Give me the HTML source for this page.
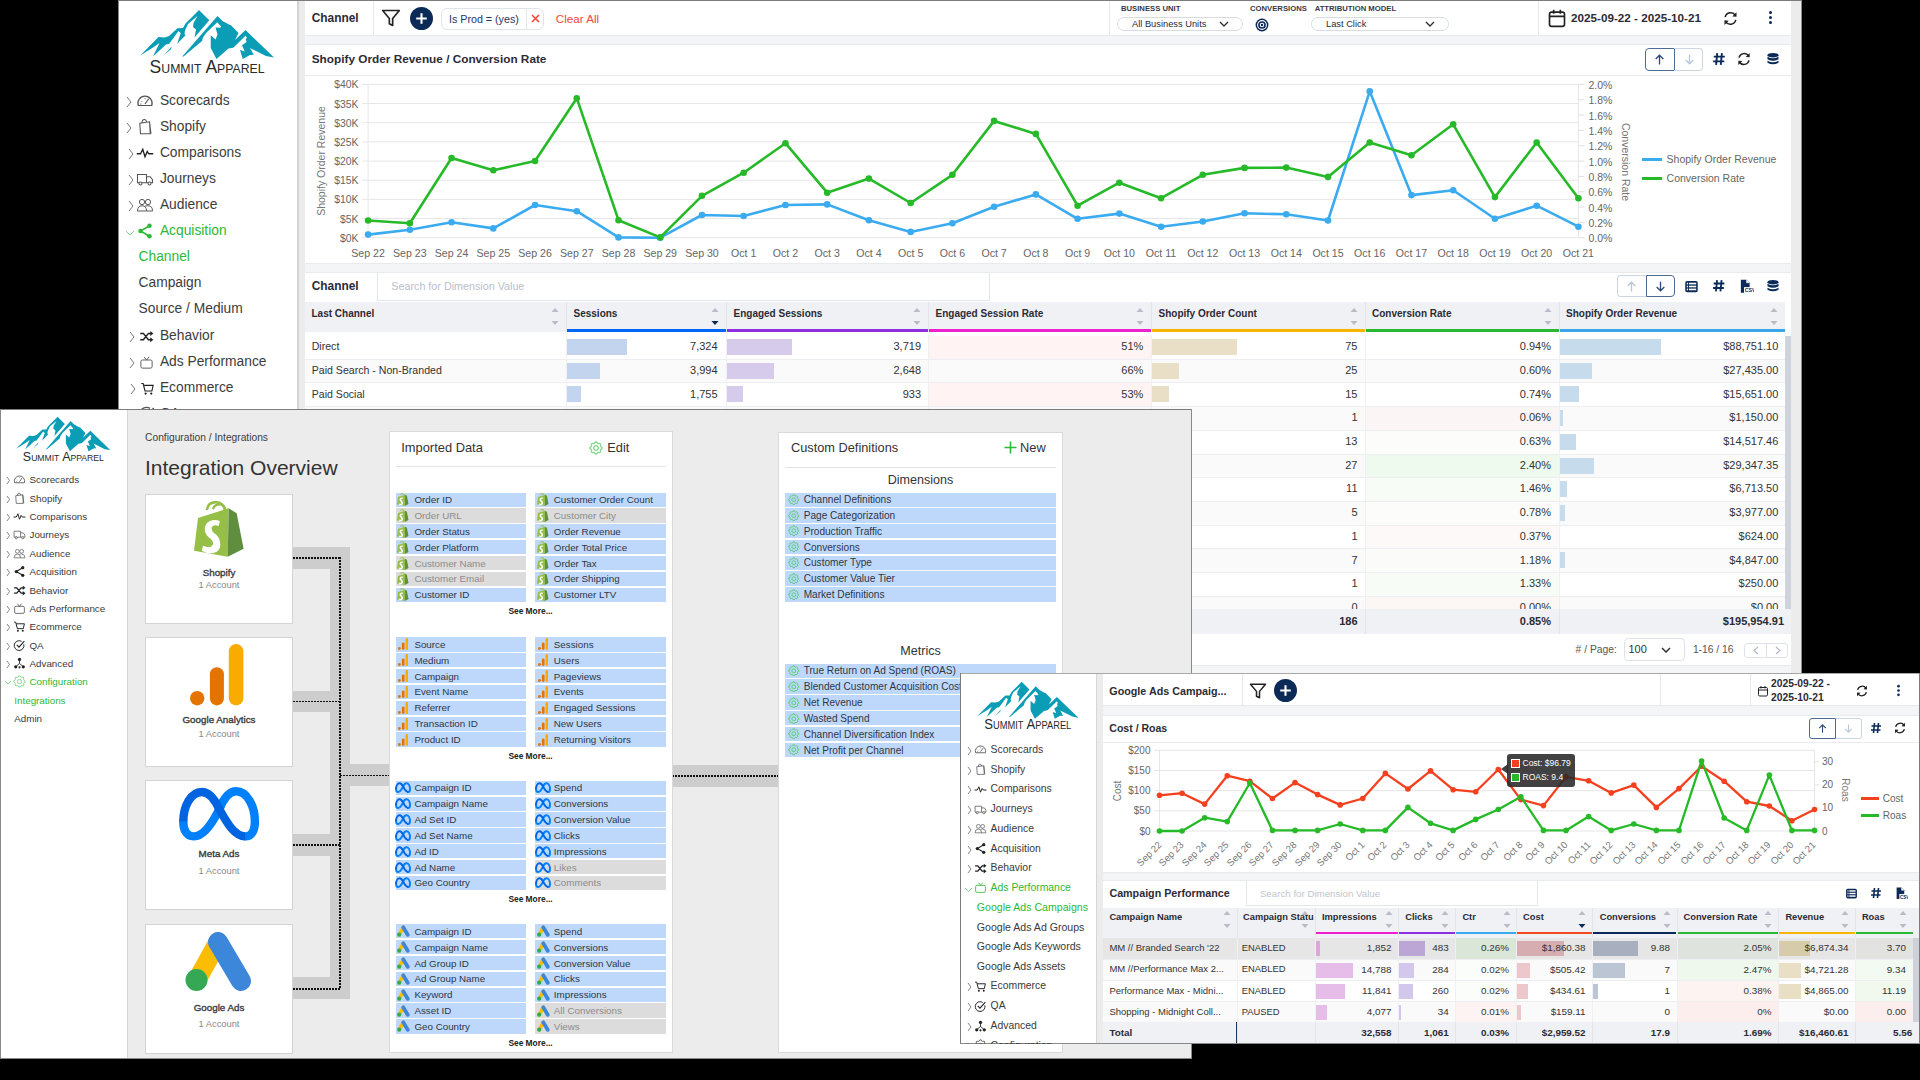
<!DOCTYPE html><html><head><meta charset="utf-8"><style>
html,body{margin:0;padding:0;}
body{width:1920px;height:1080px;background:#000;position:relative;overflow:hidden;font-family:"Liberation Sans", sans-serif;}
body div{position:absolute;}
.layer{left:0;top:0;width:1920px;height:1080px;}
.t{white-space:nowrap;}
</style></head><body>
<div class="layer" style="clip-path:inset(0px 118px 407px 118px)">
<div style="left:118px;top:0px;width:1684px;height:673px;background:#ececec;"></div>
<div style="left:118px;top:0px;width:179px;height:673px;background:#ffffff;"></div>
<div style="left:297px;top:0px;width:2px;height:673px;background:#d4d4d4;"></div>
<div style="left:305px;top:0px;width:1486px;height:673px;background:#f4f5f7;"></div>
<div style="left:305px;top:1px;width:1486px;height:35px;background:#ffffff;border-bottom:1px solid #e8eaee;box-sizing:border-box"></div>
<div style="left:305px;top:44px;width:1486px;height:219.5px;background:#ffffff;border-top:1px solid #e8eaee;border-bottom:1px solid #e8eaee;box-sizing:border-box"></div>
<div style="left:305px;top:271.5px;width:1486px;height:394px;background:#ffffff;border-top:1px solid #e8eaee;border-bottom:1px solid #e8eaee;box-sizing:border-box"></div>
<div style="left:118px;top:0px;width:1684px;height:1px;background:#7c7c7c;"></div>
<div style="left:118px;top:0px;width:1px;height:673px;background:#8a8a8a;"></div>
<div style="left:1801px;top:0px;width:1px;height:673px;background:#8a8a8a;"></div>
<svg style="position:absolute;left:140px;top:9px;" width="134.0" height="64.0" viewBox="10 9 134 64"><polygon points="10.25,55.5 28.5,37 34.5,37.5 39,36 47.5,28.25 53,28 55.5,23.5 69,10 79.25,20.25 64.5,37.5 66,29.5 63,27 63.5,23 67.5,16 58,24 55,30.5 54.5,34 55.5,35.25 47,44 50.75,33.25 48.5,31 39.25,43.75 36,44.5 23,56.5 29.5,43 23,47.5" fill="#0b9db6"/><polygon points="33.25,55.75 42,46.25 40.5,49.5" fill="#0b9db6"/><polygon points="52.25,56.5 70,36 87.5,16 92.5,21 99,24.5 101,25.25 108.5,33 105,40 115.5,30 144,57.5 136,56 120,48 123.75,54.75 120,55 112.75,59 110,50 114.75,51.5 112,45.25 116.5,42 115.75,39 117,38 115.5,35.75 103.25,47.75 98.5,48.5 86.5,59 80.75,48 80.75,35.25 85.5,39.5 87.5,34.5 85.5,27.5 90,27.75 91.25,26.75 87.25,22.25 76,33 73,37.5 72,41 53.5,56.5" fill="#0b9db6"/><text x="19.6" y="72.5" textLength="115" lengthAdjust="spacingAndGlyphs" font-family="Liberation Sans" font-size="18.6" fill="#2a2a2a" style="font-variant:small-caps">Summit Apparel</text></svg>
<svg style="position:absolute;left:125.5px;top:95.5px;" width="7.0" height="12" viewBox="0 0 7.0 12"><path d="M1 1 L5.0 6.0 L1 11" fill="none" stroke="#777" stroke-width="1"/></svg>
<svg style="position:absolute;left:136.4px;top:91.5px;" width="18" height="18" viewBox="0 0 24 24"><path d="M3 18 A9.5 9.5 0 1 1 21 18 Z" fill="none" stroke="#555" stroke-width="1.6"/><path d="M12 16 L17 9" stroke="#555" stroke-width="1.6"/><path d="M7 12 L8 13 M12 8 L12 9.5 M5.5 16 L7 16" stroke="#555" stroke-width="1.2"/></svg>
<div class="t" style="left:159.9px;top:91.50px;height:18px;line-height:18px;font-size:13.8px;color:#3c3c3c;font-weight:400;">Scorecards</div>
<svg style="position:absolute;left:125.5px;top:122.1px;" width="7.0" height="12" viewBox="0 0 7.0 12"><path d="M1 1 L5.0 6.0 L1 11" fill="none" stroke="#777" stroke-width="1"/></svg>
<svg style="position:absolute;left:136.4px;top:118.1px;" width="18" height="18" viewBox="0 0 24 24"><path d="M5 7 L18 5 L19 21 L6 21 Z M8 7 Q8 2 11 2 Q14 2 14 6 M18 5 L20 21" fill="none" stroke="#555" stroke-width="1.4"/></svg>
<div class="t" style="left:159.9px;top:118.10px;height:18px;line-height:18px;font-size:13.8px;color:#3c3c3c;font-weight:400;">Shopify</div>
<svg style="position:absolute;left:127.5px;top:148.10000000000002px;" width="7.0" height="12" viewBox="0 0 7.0 12"><path d="M1 1 L5.0 6.0 L1 11" fill="none" stroke="#777" stroke-width="1"/></svg>
<svg style="position:absolute;left:136.0px;top:144.10000000000002px;" width="18" height="18" viewBox="0 0 24 24"><path d="M1 13 L6 13 L9 7 L12 17 L15 10 L17 13 L23 13" fill="none" stroke="#222" stroke-width="1.8"/></svg>
<div class="t" style="left:159.9px;top:144.10px;height:18px;line-height:18px;font-size:13.8px;color:#3c3c3c;font-weight:400;">Comparisons</div>
<svg style="position:absolute;left:127.5px;top:174.10000000000002px;" width="7.0" height="12" viewBox="0 0 7.0 12"><path d="M1 1 L5.0 6.0 L1 11" fill="none" stroke="#777" stroke-width="1"/></svg>
<svg style="position:absolute;left:136.0px;top:170.10000000000002px;" width="18" height="18" viewBox="0 0 24 24"><path d="M2 6 L14 6 L14 17 L2 17 Z M14 9 L19 9 L22 13 L22 17 L14 17" fill="none" stroke="#555" stroke-width="1.4"/><circle cx="6" cy="18" r="2" fill="#fff" stroke="#555" stroke-width="1.4"/><circle cx="18" cy="18" r="2" fill="#fff" stroke="#555" stroke-width="1.4"/></svg>
<div class="t" style="left:159.9px;top:170.10px;height:18px;line-height:18px;font-size:13.8px;color:#3c3c3c;font-weight:400;">Journeys</div>
<svg style="position:absolute;left:127.5px;top:200.0px;" width="7.0" height="12" viewBox="0 0 7.0 12"><path d="M1 1 L5.0 6.0 L1 11" fill="none" stroke="#777" stroke-width="1"/></svg>
<svg style="position:absolute;left:136.0px;top:196.0px;" width="18" height="18" viewBox="0 0 24 24"><circle cx="8" cy="8" r="3.5" fill="none" stroke="#555" stroke-width="1.3"/><circle cx="16" cy="8" r="3.5" fill="none" stroke="#555" stroke-width="1.3"/><path d="M2 20 Q2 13 8 13 Q14 13 14 20 Z M12 13.5 Q13.5 13 16 13 Q22 13 22 20 L14 20" fill="none" stroke="#555" stroke-width="1.3"/></svg>
<div class="t" style="left:159.9px;top:196.00px;height:18px;line-height:18px;font-size:13.8px;color:#3c3c3c;font-weight:400;">Audience</div>
<svg style="position:absolute;left:124.6px;top:229.7px;" width="10" height="6.0" viewBox="0 0 10 6.0"><path d="M1 1 L5.0 5.0 L9 1" fill="none" stroke="#7fd386" stroke-width="1"/></svg>
<svg style="position:absolute;left:136.2px;top:222.0px;" width="18" height="18" viewBox="0 0 24 24"><path d="M18 5 L6 12 L18 19" fill="none" stroke="#2cb934" stroke-width="2"/><circle cx="18" cy="5" r="3" fill="#2cb934"/><circle cx="6" cy="12" r="3" fill="#2cb934"/><circle cx="18" cy="19" r="3" fill="#2cb934"/></svg>
<div class="t" style="left:159.9px;top:222.00px;height:18px;line-height:18px;font-size:13.8px;color:#2cb934;font-weight:400;">Acquisition</div>
<div class="t" style="left:138.5px;top:248.00px;height:18px;line-height:18px;font-size:13.8px;color:#2cb934;font-weight:400;">Channel</div>
<div class="t" style="left:138.5px;top:274.00px;height:18px;line-height:18px;font-size:13.8px;color:#3c3c3c;font-weight:400;">Campaign</div>
<div class="t" style="left:138.5px;top:299.90px;height:18px;line-height:18px;font-size:13.8px;color:#3c3c3c;font-weight:400;">Source / Medium</div>
<svg style="position:absolute;left:129.0px;top:331.40000000000003px;" width="7.0" height="12" viewBox="0 0 7.0 12"><path d="M1 1 L5.0 6.0 L1 11" fill="none" stroke="#777" stroke-width="1"/></svg>
<svg style="position:absolute;left:139.4px;top:328.90000000000003px;" width="15" height="15" viewBox="0 0 24 24"><path d="M2 7 L7 7 L15 17 L20 17 M2 17 L7 17 L15 7 L20 7" fill="none" stroke="#222" stroke-width="2.4"/><path d="M18 3 L23 7 L18 11 Z M18 13 L23 17 L18 21 Z" fill="#222"/></svg>
<div class="t" style="left:159.9px;top:327.40px;height:18px;line-height:18px;font-size:13.8px;color:#3c3c3c;font-weight:400;">Behavior</div>
<svg style="position:absolute;left:129.0px;top:357.40000000000003px;" width="7.0" height="12" viewBox="0 0 7.0 12"><path d="M1 1 L5.0 6.0 L1 11" fill="none" stroke="#777" stroke-width="1"/></svg>
<svg style="position:absolute;left:139.0px;top:354.90000000000003px;" width="15" height="15" viewBox="0 0 24 24"><rect x="3" y="8" width="18" height="13" rx="2.5" fill="none" stroke="#555" stroke-width="1.5"/><path d="M8 3 L12 8 L16 3" fill="none" stroke="#555" stroke-width="1.5"/></svg>
<div class="t" style="left:159.9px;top:353.40px;height:18px;line-height:18px;font-size:13.8px;color:#3c3c3c;font-weight:400;">Ads Performance</div>
<svg style="position:absolute;left:129.5px;top:383.3px;" width="7.0" height="12" viewBox="0 0 7.0 12"><path d="M1 1 L5.0 6.0 L1 11" fill="none" stroke="#777" stroke-width="1"/></svg>
<svg style="position:absolute;left:139.8px;top:380.8px;" width="15" height="15" viewBox="0 0 24 24"><path d="M2 4 L5 4 L8 16 L19 16 L21 7 L6 7" fill="none" stroke="#222" stroke-width="1.8"/><circle cx="9" cy="20" r="1.8" fill="#222"/><circle cx="18" cy="20" r="1.8" fill="#222"/></svg>
<div class="t" style="left:159.9px;top:379.30px;height:18px;line-height:18px;font-size:13.8px;color:#3c3c3c;font-weight:400;">Ecommerce</div>
<svg style="position:absolute;left:129.0px;top:409.3px;" width="7.0" height="12" viewBox="0 0 7.0 12"><path d="M1 1 L5.0 6.0 L1 11" fill="none" stroke="#777" stroke-width="1"/></svg>
<svg style="position:absolute;left:138.0px;top:405.3px;" width="18" height="18" viewBox="0 0 24 24"><path d="M20 10 A9 9 0 1 1 16 4.5" fill="none" stroke="#555" stroke-width="1.8"/><path d="M7 11 L11 15 L21 4" fill="none" stroke="#555" stroke-width="2"/></svg>
<div class="t" style="left:159.9px;top:405.30px;height:18px;line-height:18px;font-size:13.8px;color:#3c3c3c;font-weight:400;">QA</div>
<div class="t" style="left:311.7px;top:11.40px;height:15px;line-height:15px;font-size:11.9px;color:#2b2b36;font-weight:700;">Channel</div>
<div style="left:373px;top:1px;width:1px;height:35px;background:#e8e8e8;"></div>
<svg style="position:absolute;left:381.0px;top:8.3px;" width="20" height="20" viewBox="0 0 24 24"><path d="M2 3 L22 3 L14 12.5 L14 21 L10 19 L10 12.5 Z" fill="none" stroke="#222" stroke-width="2" stroke-linejoin="round"/></svg>
<svg style="position:absolute;left:409.5px;top:6.699999999999999px;" width="23" height="23" viewBox="0 0 24 24"><circle cx="12" cy="12" r="12" fill="#0b2a57"/><path d="M12 6.5 L12 17.5 M6.5 12 L17.5 12" stroke="#fff" stroke-width="2.2"/></svg>
<div style="left:441px;top:7.5px;width:103px;height:22px;border:1px solid #dfe4ea;border-radius:6px;box-sizing:border-box"></div>
<div style="left:526px;top:7.5px;width:1px;height:22px;background:#e3e6ea;"></div>
<div class="t" style="left:449px;top:11.50px;height:14px;line-height:14px;font-size:10.7px;color:#1d3763;font-weight:400;">Is Prod = (yes)</div>
<svg style="position:absolute;left:531px;top:14px;" width="9" height="9" viewBox="0 0 9 9"><path d="M1 1 L8 8 M8 1 L1 8" stroke="#f04a3c" stroke-width="1.6"/></svg>
<div class="t" style="left:555.8px;top:11.00px;height:15px;line-height:15px;font-size:11.66px;color:#f0483e;font-weight:400;">Clear All</div>
<div style="left:1109px;top:1px;width:1px;height:35px;background:#e8e8e8;"></div>
<div class="t" style="left:1121px;top:3.60px;height:10px;line-height:10px;font-size:7.7px;color:#3a3a44;font-weight:700;">BUSINESS UNIT</div>
<div style="left:1117px;top:17px;width:125.5px;height:14.3px;border:1px solid #d8dce2;border-radius:7px;box-sizing:border-box"></div>
<div class="t" style="left:1132px;top:18.20px;height:12px;line-height:12px;font-size:9.3px;color:#2b2b36;font-weight:400;">All Business Units</div>
<svg style="position:absolute;left:1219.0px;top:21.2px;" width="10" height="6.0" viewBox="0 0 10 6.0"><path d="M1 1 L5.0 5.0 L9 1" fill="none" stroke="#333" stroke-width="1.4"/></svg>
<div class="t" style="left:1250px;top:3.60px;height:10px;line-height:10px;font-size:7.7px;color:#3a3a44;font-weight:700;letter-spacing:0px">CONVERSIONS</div>
<svg style="position:absolute;left:1255.3px;top:18.3px;" width="14" height="14" viewBox="0 0 24 24"><circle cx="12" cy="12" r="11" fill="#0b2a57"/><circle cx="12" cy="12" r="7.5" fill="none" stroke="#fff" stroke-width="1.8"/><circle cx="12" cy="12" r="3" fill="none" stroke="#fff" stroke-width="1.8"/></svg>
<div class="t" style="left:1314.7px;top:3.60px;height:10px;line-height:10px;font-size:7.7px;color:#3a3a44;font-weight:700;">ATTRIBUTION MODEL</div>
<div style="left:1311px;top:17px;width:138px;height:14.3px;border:1px solid #d8dce2;border-radius:7px;box-sizing:border-box"></div>
<div class="t" style="left:1326px;top:18.20px;height:12px;line-height:12px;font-size:9.3px;color:#2b2b36;font-weight:400;">Last Click</div>
<svg style="position:absolute;left:1425.0px;top:21.2px;" width="10" height="6.0" viewBox="0 0 10 6.0"><path d="M1 1 L5.0 5.0 L9 1" fill="none" stroke="#333" stroke-width="1.4"/></svg>
<div style="left:1538px;top:1px;width:1px;height:35px;background:#e8e8e8;"></div>
<svg style="position:absolute;left:1546.8px;top:8.3px;" width="20" height="20" viewBox="0 0 24 24"><rect x="3" y="5" width="18" height="17" rx="2.5" fill="none" stroke="#222" stroke-width="2"/><path d="M3 10 L21 10 M8 2 L8 7 M16 2 L16 7" stroke="#222" stroke-width="2"/></svg>
<div class="t" style="left:1571px;top:10.00px;height:15px;line-height:15px;font-size:11.7px;color:#2b2b36;font-weight:700;">2025-09-22 - 2025-10-21</div>
<svg style="position:absolute;left:1721.5px;top:9.5px;" width="17" height="17" viewBox="0 0 24 24"><path d="M4.5 10 A8 8 0 0 1 19 7.5 M19.5 14 A8 8 0 0 1 5 16.5" fill="none" stroke="#222" stroke-width="2.2"/><path d="M20.5 3 L20.5 9.5 L14.5 9 Z M3.5 21 L3.5 14.5 L9.5 15 Z" fill="#222"/></svg>
<svg style="position:absolute;left:1762.5px;top:10.0px;" width="15" height="15" viewBox="0 0 24 24"><circle cx="12" cy="4" r="2.4" fill="#0b2a57"/><circle cx="12" cy="12" r="2.4" fill="#0b2a57"/><circle cx="12" cy="20" r="2.4" fill="#0b2a57"/></svg>
<div class="t" style="left:311.75px;top:51.50px;height:15px;line-height:15px;font-size:11.8px;color:#2b2b36;font-weight:700;">Shopify Order Revenue / Conversion Rate</div>
<div style="left:1645px;top:48.2px;width:30px;height:22.8px;border:1.5px solid #4c6a92;border-radius:4px 0 0 4px;box-sizing:border-box"></div>
<div style="left:1674px;top:48.2px;width:29.2px;height:22.8px;border:1px solid #ccd6e2;border-left:none;border-radius:0 4px 4px 0;box-sizing:border-box"></div>
<svg style="position:absolute;left:1653.3px;top:53.0px;" width="13" height="13" viewBox="0 0 24 24"><path d="M12 21 L12 4 M5 11 L12 4 L19 11" fill="none" stroke="#274a7a" stroke-width="2.4"/></svg>
<svg style="position:absolute;left:1682.5px;top:53.0px;" width="13" height="13" viewBox="0 0 24 24"><path d="M12 3 L12 20 M5 13 L12 20 L19 13" fill="none" stroke="#b8c6d8" stroke-width="2.4"/></svg>
<svg style="position:absolute;left:1711.6px;top:52.0px;" width="14" height="14" viewBox="0 0 24 24"><path d="M9 2 L7 22 M17 2 L15 22 M3 8 L22 8 M2 16 L21 16" stroke="#0b2a57" stroke-width="3.2"/></svg>
<svg style="position:absolute;left:1736.0px;top:51.0px;" width="16" height="16" viewBox="0 0 24 24"><path d="M4.5 10 A8 8 0 0 1 19 7.5 M19.5 14 A8 8 0 0 1 5 16.5" fill="none" stroke="#222" stroke-width="2.2"/><path d="M20.5 3 L20.5 9.5 L14.5 9 Z M3.5 21 L3.5 14.5 L9.5 15 Z" fill="#222"/></svg>
<svg style="position:absolute;left:1766.2px;top:52.0px;" width="14" height="14" viewBox="0 0 24 24"><ellipse cx="12" cy="5.5" rx="9.5" ry="4" fill="#0b2a57"/><path d="M2.5 8.2 Q12 13.5 21.5 8.2 L21.5 12.5 Q12 17.8 2.5 12.5 Z" fill="#0b2a57"/><path d="M2.5 15 Q12 20.3 21.5 15 L21.5 18.5 Q12 23.8 2.5 18.5 Z" fill="#0b2a57"/></svg>
<div style="left:305px;top:74.5px;width:1486px;height:1px;background:#e9ebef;"></div>
<svg style="position:absolute;left:0;top:0" width="1920" height="300"><line x1="362.1" y1="84.40" x2="1578.4" y2="84.40" stroke="#e6e6e6" stroke-width="1"/><line x1="362.1" y1="103.56" x2="1578.4" y2="103.56" stroke="#e6e6e6" stroke-width="1"/><line x1="362.1" y1="122.72" x2="1578.4" y2="122.72" stroke="#e6e6e6" stroke-width="1"/><line x1="362.1" y1="141.89" x2="1578.4" y2="141.89" stroke="#e6e6e6" stroke-width="1"/><line x1="362.1" y1="161.05" x2="1578.4" y2="161.05" stroke="#e6e6e6" stroke-width="1"/><line x1="362.1" y1="180.21" x2="1578.4" y2="180.21" stroke="#e6e6e6" stroke-width="1"/><line x1="362.1" y1="199.38" x2="1578.4" y2="199.38" stroke="#e6e6e6" stroke-width="1"/><line x1="362.1" y1="218.54" x2="1578.4" y2="218.54" stroke="#e6e6e6" stroke-width="1"/><line x1="362.1" y1="237.70" x2="1578.4" y2="237.70" stroke="#e6e6e6" stroke-width="1"/><line x1="368.1" y1="84.4" x2="368.1" y2="237.7" stroke="#e6e6e6" stroke-width="1"/><line x1="1578.4" y1="84.4" x2="1578.4" y2="237.7" stroke="#e6e6e6" stroke-width="1"/><line x1="1578.4" y1="84.40" x2="1584.4" y2="84.40" stroke="#e0e0e0" stroke-width="1"/><line x1="1578.4" y1="99.73" x2="1584.4" y2="99.73" stroke="#e0e0e0" stroke-width="1"/><line x1="1578.4" y1="115.06" x2="1584.4" y2="115.06" stroke="#e0e0e0" stroke-width="1"/><line x1="1578.4" y1="130.39" x2="1584.4" y2="130.39" stroke="#e0e0e0" stroke-width="1"/><line x1="1578.4" y1="145.72" x2="1584.4" y2="145.72" stroke="#e0e0e0" stroke-width="1"/><line x1="1578.4" y1="161.05" x2="1584.4" y2="161.05" stroke="#e0e0e0" stroke-width="1"/><line x1="1578.4" y1="176.38" x2="1584.4" y2="176.38" stroke="#e0e0e0" stroke-width="1"/><line x1="1578.4" y1="191.71" x2="1584.4" y2="191.71" stroke="#e0e0e0" stroke-width="1"/><line x1="1578.4" y1="207.04" x2="1584.4" y2="207.04" stroke="#e0e0e0" stroke-width="1"/><line x1="1578.4" y1="222.37" x2="1584.4" y2="222.37" stroke="#e0e0e0" stroke-width="1"/><line x1="1578.4" y1="237.70" x2="1584.4" y2="237.70" stroke="#e0e0e0" stroke-width="1"/><polyline points="368.10,234.60 409.83,229.80 451.57,222.20 493.30,228.40 535.04,205.00 576.77,211.20 618.51,237.40 660.24,237.70 701.98,215.00 743.71,216.00 785.44,205.00 827.18,204.40 868.91,220.20 910.65,231.90 952.38,223.30 994.12,206.80 1035.85,194.40 1077.59,218.80 1119.32,213.60 1161.06,226.70 1202.79,221.50 1244.52,213.30 1286.26,214.30 1327.99,220.50 1369.73,91.30 1411.46,195.10 1453.20,190.30 1494.93,218.80 1536.67,205.70 1578.40,226.70" fill="none" stroke="#3babf0" stroke-width="2.6" stroke-linejoin="round"/><circle cx="368.10" cy="234.60" r="3.3" fill="#3babf0"/><circle cx="409.83" cy="229.80" r="3.3" fill="#3babf0"/><circle cx="451.57" cy="222.20" r="3.3" fill="#3babf0"/><circle cx="493.30" cy="228.40" r="3.3" fill="#3babf0"/><circle cx="535.04" cy="205.00" r="3.3" fill="#3babf0"/><circle cx="576.77" cy="211.20" r="3.3" fill="#3babf0"/><circle cx="618.51" cy="237.40" r="3.3" fill="#3babf0"/><circle cx="660.24" cy="237.70" r="3.3" fill="#3babf0"/><circle cx="701.98" cy="215.00" r="3.3" fill="#3babf0"/><circle cx="743.71" cy="216.00" r="3.3" fill="#3babf0"/><circle cx="785.44" cy="205.00" r="3.3" fill="#3babf0"/><circle cx="827.18" cy="204.40" r="3.3" fill="#3babf0"/><circle cx="868.91" cy="220.20" r="3.3" fill="#3babf0"/><circle cx="910.65" cy="231.90" r="3.3" fill="#3babf0"/><circle cx="952.38" cy="223.30" r="3.3" fill="#3babf0"/><circle cx="994.12" cy="206.80" r="3.3" fill="#3babf0"/><circle cx="1035.85" cy="194.40" r="3.3" fill="#3babf0"/><circle cx="1077.59" cy="218.80" r="3.3" fill="#3babf0"/><circle cx="1119.32" cy="213.60" r="3.3" fill="#3babf0"/><circle cx="1161.06" cy="226.70" r="3.3" fill="#3babf0"/><circle cx="1202.79" cy="221.50" r="3.3" fill="#3babf0"/><circle cx="1244.52" cy="213.30" r="3.3" fill="#3babf0"/><circle cx="1286.26" cy="214.30" r="3.3" fill="#3babf0"/><circle cx="1327.99" cy="220.50" r="3.3" fill="#3babf0"/><circle cx="1369.73" cy="91.30" r="3.3" fill="#3babf0"/><circle cx="1411.46" cy="195.10" r="3.3" fill="#3babf0"/><circle cx="1453.20" cy="190.30" r="3.3" fill="#3babf0"/><circle cx="1494.93" cy="218.80" r="3.3" fill="#3babf0"/><circle cx="1536.67" cy="205.70" r="3.3" fill="#3babf0"/><circle cx="1578.40" cy="226.70" r="3.3" fill="#3babf0"/><polyline points="368.10,220.50 409.83,223.30 451.57,158.00 493.30,170.30 535.04,161.00 576.77,98.20 618.51,220.20 660.24,237.40 701.98,195.80 743.71,172.70 785.44,143.20 827.18,192.70 868.91,178.60 910.65,203.00 952.38,174.80 994.12,120.90 1035.85,133.90 1077.59,205.70 1119.32,182.70 1161.06,198.20 1202.79,174.80 1244.52,167.90 1286.26,167.60 1327.99,176.90 1369.73,142.50 1411.46,155.20 1453.20,124.30 1494.93,197.10 1536.67,142.50 1578.40,198.20" fill="none" stroke="#26b928" stroke-width="2.6" stroke-linejoin="round"/><circle cx="368.10" cy="220.50" r="3.3" fill="#26b928"/><circle cx="409.83" cy="223.30" r="3.3" fill="#26b928"/><circle cx="451.57" cy="158.00" r="3.3" fill="#26b928"/><circle cx="493.30" cy="170.30" r="3.3" fill="#26b928"/><circle cx="535.04" cy="161.00" r="3.3" fill="#26b928"/><circle cx="576.77" cy="98.20" r="3.3" fill="#26b928"/><circle cx="618.51" cy="220.20" r="3.3" fill="#26b928"/><circle cx="660.24" cy="237.40" r="3.3" fill="#26b928"/><circle cx="701.98" cy="195.80" r="3.3" fill="#26b928"/><circle cx="743.71" cy="172.70" r="3.3" fill="#26b928"/><circle cx="785.44" cy="143.20" r="3.3" fill="#26b928"/><circle cx="827.18" cy="192.70" r="3.3" fill="#26b928"/><circle cx="868.91" cy="178.60" r="3.3" fill="#26b928"/><circle cx="910.65" cy="203.00" r="3.3" fill="#26b928"/><circle cx="952.38" cy="174.80" r="3.3" fill="#26b928"/><circle cx="994.12" cy="120.90" r="3.3" fill="#26b928"/><circle cx="1035.85" cy="133.90" r="3.3" fill="#26b928"/><circle cx="1077.59" cy="205.70" r="3.3" fill="#26b928"/><circle cx="1119.32" cy="182.70" r="3.3" fill="#26b928"/><circle cx="1161.06" cy="198.20" r="3.3" fill="#26b928"/><circle cx="1202.79" cy="174.80" r="3.3" fill="#26b928"/><circle cx="1244.52" cy="167.90" r="3.3" fill="#26b928"/><circle cx="1286.26" cy="167.60" r="3.3" fill="#26b928"/><circle cx="1327.99" cy="176.90" r="3.3" fill="#26b928"/><circle cx="1369.73" cy="142.50" r="3.3" fill="#26b928"/><circle cx="1411.46" cy="155.20" r="3.3" fill="#26b928"/><circle cx="1453.20" cy="124.30" r="3.3" fill="#26b928"/><circle cx="1494.93" cy="197.10" r="3.3" fill="#26b928"/><circle cx="1536.67" cy="142.50" r="3.3" fill="#26b928"/><circle cx="1578.40" cy="198.20" r="3.3" fill="#26b928"/></svg>
<div class="t" style="left:298.5px;top:78.40px;width:60px;text-align:right;height:14px;line-height:14px;font-size:10.4px;color:#666;font-weight:400;">$40K</div>
<div class="t" style="left:298.5px;top:97.56px;width:60px;text-align:right;height:14px;line-height:14px;font-size:10.4px;color:#666;font-weight:400;">$35K</div>
<div class="t" style="left:298.5px;top:116.72px;width:60px;text-align:right;height:14px;line-height:14px;font-size:10.4px;color:#666;font-weight:400;">$30K</div>
<div class="t" style="left:298.5px;top:135.89px;width:60px;text-align:right;height:14px;line-height:14px;font-size:10.4px;color:#666;font-weight:400;">$25K</div>
<div class="t" style="left:298.5px;top:155.05px;width:60px;text-align:right;height:14px;line-height:14px;font-size:10.4px;color:#666;font-weight:400;">$20K</div>
<div class="t" style="left:298.5px;top:174.21px;width:60px;text-align:right;height:14px;line-height:14px;font-size:10.4px;color:#666;font-weight:400;">$15K</div>
<div class="t" style="left:298.5px;top:193.38px;width:60px;text-align:right;height:14px;line-height:14px;font-size:10.4px;color:#666;font-weight:400;">$10K</div>
<div class="t" style="left:298.5px;top:212.54px;width:60px;text-align:right;height:14px;line-height:14px;font-size:10.4px;color:#666;font-weight:400;">$5K</div>
<div class="t" style="left:298.5px;top:231.70px;width:60px;text-align:right;height:14px;line-height:14px;font-size:10.4px;color:#666;font-weight:400;">$0K</div>
<div class="t" style="left:1588.5px;top:77.90px;height:14px;line-height:14px;font-size:10.5px;color:#666;font-weight:400;">2.0%</div>
<div class="t" style="left:1588.5px;top:93.23px;height:14px;line-height:14px;font-size:10.5px;color:#666;font-weight:400;">1.8%</div>
<div class="t" style="left:1588.5px;top:108.56px;height:14px;line-height:14px;font-size:10.5px;color:#666;font-weight:400;">1.6%</div>
<div class="t" style="left:1588.5px;top:123.89px;height:14px;line-height:14px;font-size:10.5px;color:#666;font-weight:400;">1.4%</div>
<div class="t" style="left:1588.5px;top:139.22px;height:14px;line-height:14px;font-size:10.5px;color:#666;font-weight:400;">1.2%</div>
<div class="t" style="left:1588.5px;top:154.55px;height:14px;line-height:14px;font-size:10.5px;color:#666;font-weight:400;">1.0%</div>
<div class="t" style="left:1588.5px;top:169.88px;height:14px;line-height:14px;font-size:10.5px;color:#666;font-weight:400;">0.8%</div>
<div class="t" style="left:1588.5px;top:185.21px;height:14px;line-height:14px;font-size:10.5px;color:#666;font-weight:400;">0.6%</div>
<div class="t" style="left:1588.5px;top:200.54px;height:14px;line-height:14px;font-size:10.5px;color:#666;font-weight:400;">0.4%</div>
<div class="t" style="left:1588.5px;top:215.87px;height:14px;line-height:14px;font-size:10.5px;color:#666;font-weight:400;">0.2%</div>
<div class="t" style="left:1588.5px;top:231.20px;height:14px;line-height:14px;font-size:10.5px;color:#666;font-weight:400;">0.0%</div>
<div class="t" style="left:338.1px;top:245.80px;width:60px;text-align:center;height:14px;line-height:14px;font-size:10.6px;color:#666;font-weight:400;">Sep 22</div>
<div class="t" style="left:379.8344827586207px;top:245.80px;width:60px;text-align:center;height:14px;line-height:14px;font-size:10.6px;color:#666;font-weight:400;">Sep 23</div>
<div class="t" style="left:421.5689655172414px;top:245.80px;width:60px;text-align:center;height:14px;line-height:14px;font-size:10.6px;color:#666;font-weight:400;">Sep 24</div>
<div class="t" style="left:463.30344827586214px;top:245.80px;width:60px;text-align:center;height:14px;line-height:14px;font-size:10.6px;color:#666;font-weight:400;">Sep 25</div>
<div class="t" style="left:505.03793103448277px;top:245.80px;width:60px;text-align:center;height:14px;line-height:14px;font-size:10.6px;color:#666;font-weight:400;">Sep 26</div>
<div class="t" style="left:546.7724137931035px;top:245.80px;width:60px;text-align:center;height:14px;line-height:14px;font-size:10.6px;color:#666;font-weight:400;">Sep 27</div>
<div class="t" style="left:588.5068965517241px;top:245.80px;width:60px;text-align:center;height:14px;line-height:14px;font-size:10.6px;color:#666;font-weight:400;">Sep 28</div>
<div class="t" style="left:630.2413793103449px;top:245.80px;width:60px;text-align:center;height:14px;line-height:14px;font-size:10.6px;color:#666;font-weight:400;">Sep 29</div>
<div class="t" style="left:671.9758620689656px;top:245.80px;width:60px;text-align:center;height:14px;line-height:14px;font-size:10.6px;color:#666;font-weight:400;">Sep 30</div>
<div class="t" style="left:713.7103448275863px;top:245.80px;width:60px;text-align:center;height:14px;line-height:14px;font-size:10.6px;color:#666;font-weight:400;">Oct 1</div>
<div class="t" style="left:755.4448275862069px;top:245.80px;width:60px;text-align:center;height:14px;line-height:14px;font-size:10.6px;color:#666;font-weight:400;">Oct 2</div>
<div class="t" style="left:797.1793103448276px;top:245.80px;width:60px;text-align:center;height:14px;line-height:14px;font-size:10.6px;color:#666;font-weight:400;">Oct 3</div>
<div class="t" style="left:838.9137931034484px;top:245.80px;width:60px;text-align:center;height:14px;line-height:14px;font-size:10.6px;color:#666;font-weight:400;">Oct 4</div>
<div class="t" style="left:880.648275862069px;top:245.80px;width:60px;text-align:center;height:14px;line-height:14px;font-size:10.6px;color:#666;font-weight:400;">Oct 5</div>
<div class="t" style="left:922.3827586206897px;top:245.80px;width:60px;text-align:center;height:14px;line-height:14px;font-size:10.6px;color:#666;font-weight:400;">Oct 6</div>
<div class="t" style="left:964.1172413793104px;top:245.80px;width:60px;text-align:center;height:14px;line-height:14px;font-size:10.6px;color:#666;font-weight:400;">Oct 7</div>
<div class="t" style="left:1005.8517241379311px;top:245.80px;width:60px;text-align:center;height:14px;line-height:14px;font-size:10.6px;color:#666;font-weight:400;">Oct 8</div>
<div class="t" style="left:1047.5862068965519px;top:245.80px;width:60px;text-align:center;height:14px;line-height:14px;font-size:10.6px;color:#666;font-weight:400;">Oct 9</div>
<div class="t" style="left:1089.3206896551724px;top:245.80px;width:60px;text-align:center;height:14px;line-height:14px;font-size:10.6px;color:#666;font-weight:400;">Oct 10</div>
<div class="t" style="left:1131.0551724137931px;top:245.80px;width:60px;text-align:center;height:14px;line-height:14px;font-size:10.6px;color:#666;font-weight:400;">Oct 11</div>
<div class="t" style="left:1172.7896551724139px;top:245.80px;width:60px;text-align:center;height:14px;line-height:14px;font-size:10.6px;color:#666;font-weight:400;">Oct 12</div>
<div class="t" style="left:1214.5241379310346px;top:245.80px;width:60px;text-align:center;height:14px;line-height:14px;font-size:10.6px;color:#666;font-weight:400;">Oct 13</div>
<div class="t" style="left:1256.2586206896553px;top:245.80px;width:60px;text-align:center;height:14px;line-height:14px;font-size:10.6px;color:#666;font-weight:400;">Oct 14</div>
<div class="t" style="left:1297.993103448276px;top:245.80px;width:60px;text-align:center;height:14px;line-height:14px;font-size:10.6px;color:#666;font-weight:400;">Oct 15</div>
<div class="t" style="left:1339.7275862068968px;top:245.80px;width:60px;text-align:center;height:14px;line-height:14px;font-size:10.6px;color:#666;font-weight:400;">Oct 16</div>
<div class="t" style="left:1381.4620689655176px;top:245.80px;width:60px;text-align:center;height:14px;line-height:14px;font-size:10.6px;color:#666;font-weight:400;">Oct 17</div>
<div class="t" style="left:1423.1965517241379px;top:245.80px;width:60px;text-align:center;height:14px;line-height:14px;font-size:10.6px;color:#666;font-weight:400;">Oct 18</div>
<div class="t" style="left:1464.9310344827586px;top:245.80px;width:60px;text-align:center;height:14px;line-height:14px;font-size:10.6px;color:#666;font-weight:400;">Oct 19</div>
<div class="t" style="left:1506.6655172413793px;top:245.80px;width:60px;text-align:center;height:14px;line-height:14px;font-size:10.6px;color:#666;font-weight:400;">Oct 20</div>
<div class="t" style="left:1548.4px;top:245.80px;width:60px;text-align:center;height:14px;line-height:14px;font-size:10.6px;color:#666;font-weight:400;">Oct 21</div>
<div class="t" style="left:321px;top:161px;font-size:10.5px;color:#777;transform:translate(-50%,-50%) rotate(-90deg);line-height:12px">Shopify Order Revenue</div>
<div class="t" style="left:1625.6px;top:162px;font-size:10.5px;color:#777;transform:translate(-50%,-50%) rotate(90deg);line-height:12px">Conversion Rate</div>
<div style="left:1642px;top:157.7px;width:20px;height:3px;background:#3babf0;"></div>
<div class="t" style="left:1666.6px;top:152.20px;height:14px;line-height:14px;font-size:10.5px;color:#666;font-weight:400;">Shopify Order Revenue</div>
<div style="left:1642px;top:176.8px;width:20px;height:3px;background:#26b928;"></div>
<div class="t" style="left:1666.6px;top:171.30px;height:14px;line-height:14px;font-size:10.5px;color:#666;font-weight:400;">Conversion Rate</div>
<div class="t" style="left:311.7px;top:278.50px;height:15px;line-height:15px;font-size:11.9px;color:#2b2b36;font-weight:700;">Channel</div>
<div style="left:376.7px;top:272.5px;width:613.3px;height:28px;border:1px solid #e2e5ea;border-top:none;box-sizing:border-box;background:#fff"></div>
<div class="t" style="left:391.3px;top:279.00px;height:14px;line-height:14px;font-size:10.75px;color:#b9c0cc;font-weight:400;">Search for Dimension Value</div>
<div style="left:1617px;top:275.3px;width:29px;height:22.2px;border:1px solid #ccd6e2;border-right:none;border-radius:4px 0 0 4px;box-sizing:border-box"></div>
<div style="left:1645.5px;top:275.3px;width:29.5px;height:22.2px;border:1.5px solid #4c6a92;border-radius:0 4px 4px 0;box-sizing:border-box"></div>
<svg style="position:absolute;left:1624.5px;top:280.0px;" width="13" height="13" viewBox="0 0 24 24"><path d="M12 21 L12 4 M5 11 L12 4 L19 11" fill="none" stroke="#b8c6d8" stroke-width="2.4"/></svg>
<svg style="position:absolute;left:1653.5px;top:280.0px;" width="13" height="13" viewBox="0 0 24 24"><path d="M12 3 L12 20 M5 13 L12 20 L19 13" fill="none" stroke="#274a7a" stroke-width="2.4"/></svg>
<svg style="position:absolute;left:1683.5px;top:278.5px;" width="15" height="15" viewBox="0 0 24 24"><rect x="2" y="3" width="20" height="18" rx="3" fill="#0b2a57"/><rect x="8" y="6" width="11.5" height="2.6" fill="#fff"/><rect x="8" y="10.7" width="11.5" height="2.6" fill="#fff"/><rect x="8" y="15.4" width="11.5" height="2.6" fill="#fff"/><rect x="4.5" y="6" width="2" height="2.6" fill="#fff"/><rect x="4.5" y="10.7" width="2" height="2.6" fill="#fff"/><rect x="4.5" y="15.4" width="2" height="2.6" fill="#fff"/></svg>
<svg style="position:absolute;left:1711.85px;top:279.25px;" width="13.5" height="13.5" viewBox="0 0 24 24"><path d="M9 2 L7 22 M17 2 L15 22 M3 8 L22 8 M2 16 L21 16" stroke="#0b2a57" stroke-width="3.2"/></svg>
<svg style="position:absolute;left:1738.5px;top:278.5px;" width="15" height="15" viewBox="0 0 24 24"><path d="M3 1 L12 1 L17 6 L17 22 L3 22 Z" fill="#0b2a57"/><path d="M12 1 L12 6 L17 6" fill="#fff" stroke="#fff" stroke-width="0.8"/><rect x="8" y="13" width="16" height="10" fill="#fff"/><text x="9" y="21.5" font-size="8.5" font-family="Liberation Sans" font-weight="700" fill="#0b2a57">CSV</text></svg>
<svg style="position:absolute;left:1766.3px;top:279.0px;" width="14" height="14" viewBox="0 0 24 24"><ellipse cx="12" cy="5.5" rx="9.5" ry="4" fill="#0b2a57"/><path d="M2.5 8.2 Q12 13.5 21.5 8.2 L21.5 12.5 Q12 17.8 2.5 12.5 Z" fill="#0b2a57"/><path d="M2.5 15 Q12 20.3 21.5 15 L21.5 18.5 Q12 23.8 2.5 18.5 Z" fill="#0b2a57"/></svg>
<div style="left:305px;top:302px;width:1480px;height:30px;background:#f0f1f4;"></div>
<div class="t" style="left:311.5px;top:306.50px;height:13px;line-height:13px;font-size:10px;color:#2b2b36;font-weight:700;">Last Channel</div>
<svg style="position:absolute;left:550.2px;top:305.5px;" width="10" height="21" viewBox="0 0 10 21"><path d="M1.5 6 L5 2 L8.5 6 Z" fill="#b8bcc6"/><path d="M1.5 15 L5 19 L8.5 15 Z" fill="#b8bcc6"/></svg>
<div style="left:566px;top:302px;width:1px;height:30px;background:#e3e5ea;"></div>
<div class="t" style="left:573.5px;top:306.50px;height:13px;line-height:13px;font-size:10px;color:#2b2b36;font-weight:700;">Sessions</div>
<svg style="position:absolute;left:710.2px;top:305.5px;" width="10" height="21" viewBox="0 0 10 21"><path d="M1.5 6 L5 2 L8.5 6 Z" fill="#b8bcc6"/><path d="M1.5 15 L5 19 L8.5 15 Z" fill="#0b2a57"/></svg>
<div style="left:567px;top:329px;width:159px;height:3px;background:#0066f5;"></div>
<div style="left:726px;top:302px;width:1px;height:30px;background:#e3e5ea;"></div>
<div class="t" style="left:733.5px;top:306.50px;height:13px;line-height:13px;font-size:10px;color:#2b2b36;font-weight:700;">Engaged Sessions</div>
<svg style="position:absolute;left:912.2px;top:305.5px;" width="10" height="21" viewBox="0 0 10 21"><path d="M1.5 6 L5 2 L8.5 6 Z" fill="#b8bcc6"/><path d="M1.5 15 L5 19 L8.5 15 Z" fill="#b8bcc6"/></svg>
<div style="left:727px;top:329px;width:201px;height:3px;background:#8e2ee0;"></div>
<div style="left:928px;top:302px;width:1px;height:30px;background:#e3e5ea;"></div>
<div class="t" style="left:935.5px;top:306.50px;height:13px;line-height:13px;font-size:10px;color:#2b2b36;font-weight:700;">Engaged Session Rate</div>
<svg style="position:absolute;left:1135.2px;top:305.5px;" width="10" height="21" viewBox="0 0 10 21"><path d="M1.5 6 L5 2 L8.5 6 Z" fill="#b8bcc6"/><path d="M1.5 15 L5 19 L8.5 15 Z" fill="#b8bcc6"/></svg>
<div style="left:929px;top:329px;width:222px;height:3px;background:#ec20cf;"></div>
<div style="left:1151px;top:302px;width:1px;height:30px;background:#e3e5ea;"></div>
<div class="t" style="left:1158.5px;top:306.50px;height:13px;line-height:13px;font-size:10px;color:#2b2b36;font-weight:700;">Shopify Order Count</div>
<svg style="position:absolute;left:1348.7px;top:305.5px;" width="10" height="21" viewBox="0 0 10 21"><path d="M1.5 6 L5 2 L8.5 6 Z" fill="#b8bcc6"/><path d="M1.5 15 L5 19 L8.5 15 Z" fill="#b8bcc6"/></svg>
<div style="left:1152px;top:329px;width:212.5px;height:3px;background:#f7b500;"></div>
<div style="left:1364.5px;top:302px;width:1px;height:30px;background:#e3e5ea;"></div>
<div class="t" style="left:1372.0px;top:306.50px;height:13px;line-height:13px;font-size:10px;color:#2b2b36;font-weight:700;">Conversion Rate</div>
<svg style="position:absolute;left:1542.7px;top:305.5px;" width="10" height="21" viewBox="0 0 10 21"><path d="M1.5 6 L5 2 L8.5 6 Z" fill="#b8bcc6"/><path d="M1.5 15 L5 19 L8.5 15 Z" fill="#b8bcc6"/></svg>
<div style="left:1365.5px;top:329px;width:193.0px;height:3px;background:#28b832;"></div>
<div style="left:1558.5px;top:302px;width:1px;height:30px;background:#e3e5ea;"></div>
<div class="t" style="left:1566.0px;top:306.50px;height:13px;line-height:13px;font-size:10px;color:#2b2b36;font-weight:700;">Shopify Order Revenue</div>
<svg style="position:absolute;left:1769.2px;top:305.5px;" width="10" height="21" viewBox="0 0 10 21"><path d="M1.5 6 L5 2 L8.5 6 Z" fill="#b8bcc6"/><path d="M1.5 15 L5 19 L8.5 15 Z" fill="#b8bcc6"/></svg>
<div style="left:1559.5px;top:329px;width:225.5px;height:3px;background:#3aa8e8;"></div>
<div style="left:305px;top:332px;width:1480px;height:4px;background:#ffffff;"></div>
<div style="left:305px;top:336.0px;width:1480px;height:23.72px;background:#ffffff;"></div>
<div style="left:305px;top:358.72px;width:1480px;height:1px;background:#eceef1;"></div>
<div style="left:566px;top:336.0px;width:1px;height:23.72px;background:#eef0f3;"></div>
<div style="left:726px;top:336.0px;width:1px;height:23.72px;background:#eef0f3;"></div>
<div style="left:928px;top:336.0px;width:1px;height:23.72px;background:#eef0f3;"></div>
<div style="left:1151px;top:336.0px;width:1px;height:23.72px;background:#eef0f3;"></div>
<div style="left:1364.5px;top:336.0px;width:1px;height:23.72px;background:#eef0f3;"></div>
<div style="left:1558.5px;top:336.0px;width:1px;height:23.72px;background:#eef0f3;"></div>
<div style="left:929px;top:336.0px;width:222px;height:22.72px;background:#fff3f3;"></div>
<div style="left:1365.5px;top:336.0px;width:193px;height:22.72px;background:#ffffff;"></div>
<div style="left:567px;top:339.0px;width:60.3px;height:16px;background:#c3d4ee;"></div>
<div style="left:727px;top:339.0px;width:65px;height:16px;background:#d7cbec;"></div>
<div style="left:1152px;top:339.0px;width:85px;height:16px;background:#e8dfc6;"></div>
<div style="left:1559.5px;top:339.0px;width:101px;height:16px;background:#c6dbec;"></div>
<div class="t" style="left:311.7px;top:339.06px;height:14px;line-height:14px;font-size:10.6px;color:#333;font-weight:400;">Direct</div>
<div class="t" style="left:617.6px;top:339.06px;width:100px;text-align:right;height:14px;line-height:14px;font-size:11px;color:#333;font-weight:400;">7,324</div>
<div class="t" style="left:821px;top:339.06px;width:100px;text-align:right;height:14px;line-height:14px;font-size:11px;color:#333;font-weight:400;">3,719</div>
<div class="t" style="left:1043.3px;top:339.06px;width:100px;text-align:right;height:14px;line-height:14px;font-size:11px;color:#333;font-weight:400;">51%</div>
<div class="t" style="left:1257.5px;top:339.06px;width:100px;text-align:right;height:14px;line-height:14px;font-size:11px;color:#333;font-weight:400;">75</div>
<div class="t" style="left:1451px;top:339.06px;width:100px;text-align:right;height:14px;line-height:14px;font-size:11px;color:#333;font-weight:400;">0.94%</div>
<div class="t" style="left:1658.3px;top:339.06px;width:120px;text-align:right;height:14px;line-height:14px;font-size:11px;color:#333;font-weight:400;">$88,751.10</div>
<div style="left:305px;top:359.72px;width:1480px;height:23.72px;background:#fafafa;"></div>
<div style="left:305px;top:382.44000000000005px;width:1480px;height:1px;background:#eceef1;"></div>
<div style="left:566px;top:359.72px;width:1px;height:23.72px;background:#eef0f3;"></div>
<div style="left:726px;top:359.72px;width:1px;height:23.72px;background:#eef0f3;"></div>
<div style="left:928px;top:359.72px;width:1px;height:23.72px;background:#eef0f3;"></div>
<div style="left:1151px;top:359.72px;width:1px;height:23.72px;background:#eef0f3;"></div>
<div style="left:1364.5px;top:359.72px;width:1px;height:23.72px;background:#eef0f3;"></div>
<div style="left:1558.5px;top:359.72px;width:1px;height:23.72px;background:#eef0f3;"></div>
<div style="left:1365.5px;top:359.72px;width:193px;height:22.72px;background:#fafafa;"></div>
<div style="left:567px;top:362.72px;width:32.6px;height:16px;background:#c3d4ee;"></div>
<div style="left:727px;top:362.72px;width:46.7px;height:16px;background:#d7cbec;"></div>
<div style="left:1152px;top:362.72px;width:27px;height:16px;background:#e8dfc6;"></div>
<div style="left:1559.5px;top:362.72px;width:32px;height:16px;background:#c6dbec;"></div>
<div class="t" style="left:311.7px;top:362.78px;height:14px;line-height:14px;font-size:10.6px;color:#333;font-weight:400;">Paid Search - Non-Branded</div>
<div class="t" style="left:617.6px;top:362.78px;width:100px;text-align:right;height:14px;line-height:14px;font-size:11px;color:#333;font-weight:400;">3,994</div>
<div class="t" style="left:821px;top:362.78px;width:100px;text-align:right;height:14px;line-height:14px;font-size:11px;color:#333;font-weight:400;">2,648</div>
<div class="t" style="left:1043.3px;top:362.78px;width:100px;text-align:right;height:14px;line-height:14px;font-size:11px;color:#333;font-weight:400;">66%</div>
<div class="t" style="left:1257.5px;top:362.78px;width:100px;text-align:right;height:14px;line-height:14px;font-size:11px;color:#333;font-weight:400;">25</div>
<div class="t" style="left:1451px;top:362.78px;width:100px;text-align:right;height:14px;line-height:14px;font-size:11px;color:#333;font-weight:400;">0.60%</div>
<div class="t" style="left:1658.3px;top:362.78px;width:120px;text-align:right;height:14px;line-height:14px;font-size:11px;color:#333;font-weight:400;">$27,435.00</div>
<div style="left:305px;top:383.44px;width:1480px;height:23.72px;background:#ffffff;"></div>
<div style="left:305px;top:406.15999999999997px;width:1480px;height:1px;background:#eceef1;"></div>
<div style="left:566px;top:383.44px;width:1px;height:23.72px;background:#eef0f3;"></div>
<div style="left:726px;top:383.44px;width:1px;height:23.72px;background:#eef0f3;"></div>
<div style="left:928px;top:383.44px;width:1px;height:23.72px;background:#eef0f3;"></div>
<div style="left:1151px;top:383.44px;width:1px;height:23.72px;background:#eef0f3;"></div>
<div style="left:1364.5px;top:383.44px;width:1px;height:23.72px;background:#eef0f3;"></div>
<div style="left:1558.5px;top:383.44px;width:1px;height:23.72px;background:#eef0f3;"></div>
<div style="left:929px;top:383.44px;width:222px;height:22.72px;background:#fff3f3;"></div>
<div style="left:1365.5px;top:383.44px;width:193px;height:22.72px;background:#ffffff;"></div>
<div style="left:567px;top:386.44px;width:14.3px;height:16px;background:#c3d4ee;"></div>
<div style="left:727px;top:386.44px;width:16px;height:16px;background:#d7cbec;"></div>
<div style="left:1152px;top:386.44px;width:16.6px;height:16px;background:#e8dfc6;"></div>
<div style="left:1559.5px;top:386.44px;width:19px;height:16px;background:#c6dbec;"></div>
<div class="t" style="left:311.7px;top:386.50px;height:14px;line-height:14px;font-size:10.6px;color:#333;font-weight:400;">Paid Social</div>
<div class="t" style="left:617.6px;top:386.50px;width:100px;text-align:right;height:14px;line-height:14px;font-size:11px;color:#333;font-weight:400;">1,755</div>
<div class="t" style="left:821px;top:386.50px;width:100px;text-align:right;height:14px;line-height:14px;font-size:11px;color:#333;font-weight:400;">933</div>
<div class="t" style="left:1043.3px;top:386.50px;width:100px;text-align:right;height:14px;line-height:14px;font-size:11px;color:#333;font-weight:400;">53%</div>
<div class="t" style="left:1257.5px;top:386.50px;width:100px;text-align:right;height:14px;line-height:14px;font-size:11px;color:#333;font-weight:400;">15</div>
<div class="t" style="left:1451px;top:386.50px;width:100px;text-align:right;height:14px;line-height:14px;font-size:11px;color:#333;font-weight:400;">0.74%</div>
<div class="t" style="left:1658.3px;top:386.50px;width:120px;text-align:right;height:14px;line-height:14px;font-size:11px;color:#333;font-weight:400;">$15,651.00</div>
<div style="left:305px;top:407.15999999999997px;width:1480px;height:23.72px;background:#fafafa;"></div>
<div style="left:305px;top:429.88px;width:1480px;height:1px;background:#eceef1;"></div>
<div style="left:566px;top:407.15999999999997px;width:1px;height:23.72px;background:#eef0f3;"></div>
<div style="left:726px;top:407.15999999999997px;width:1px;height:23.72px;background:#eef0f3;"></div>
<div style="left:928px;top:407.15999999999997px;width:1px;height:23.72px;background:#eef0f3;"></div>
<div style="left:1151px;top:407.15999999999997px;width:1px;height:23.72px;background:#eef0f3;"></div>
<div style="left:1364.5px;top:407.15999999999997px;width:1px;height:23.72px;background:#eef0f3;"></div>
<div style="left:1558.5px;top:407.15999999999997px;width:1px;height:23.72px;background:#eef0f3;"></div>
<div style="left:1365.5px;top:407.15999999999997px;width:193px;height:22.72px;background:#fbf6f5;"></div>
<div style="left:1152px;top:410.15999999999997px;width:1px;height:16px;background:#e8dfc6;"></div>
<div style="left:1559.5px;top:410.15999999999997px;width:3px;height:16px;background:#c6dbec;"></div>
<div class="t" style="left:1257.5px;top:410.22px;width:100px;text-align:right;height:14px;line-height:14px;font-size:11px;color:#333;font-weight:400;">1</div>
<div class="t" style="left:1451px;top:410.22px;width:100px;text-align:right;height:14px;line-height:14px;font-size:11px;color:#333;font-weight:400;">0.06%</div>
<div class="t" style="left:1658.3px;top:410.22px;width:120px;text-align:right;height:14px;line-height:14px;font-size:11px;color:#333;font-weight:400;">$1,150.00</div>
<div style="left:305px;top:430.88px;width:1480px;height:23.72px;background:#ffffff;"></div>
<div style="left:305px;top:453.6px;width:1480px;height:1px;background:#eceef1;"></div>
<div style="left:566px;top:430.88px;width:1px;height:23.72px;background:#eef0f3;"></div>
<div style="left:726px;top:430.88px;width:1px;height:23.72px;background:#eef0f3;"></div>
<div style="left:928px;top:430.88px;width:1px;height:23.72px;background:#eef0f3;"></div>
<div style="left:1151px;top:430.88px;width:1px;height:23.72px;background:#eef0f3;"></div>
<div style="left:1364.5px;top:430.88px;width:1px;height:23.72px;background:#eef0f3;"></div>
<div style="left:1558.5px;top:430.88px;width:1px;height:23.72px;background:#eef0f3;"></div>
<div style="left:1365.5px;top:430.88px;width:193px;height:22.72px;background:#fcfcfa;"></div>
<div style="left:1152px;top:433.88px;width:14.7px;height:16px;background:#e8dfc6;"></div>
<div style="left:1559.5px;top:433.88px;width:16px;height:16px;background:#c6dbec;"></div>
<div class="t" style="left:1257.5px;top:433.94px;width:100px;text-align:right;height:14px;line-height:14px;font-size:11px;color:#333;font-weight:400;">13</div>
<div class="t" style="left:1451px;top:433.94px;width:100px;text-align:right;height:14px;line-height:14px;font-size:11px;color:#333;font-weight:400;">0.63%</div>
<div class="t" style="left:1658.3px;top:433.94px;width:120px;text-align:right;height:14px;line-height:14px;font-size:11px;color:#333;font-weight:400;">$14,517.46</div>
<div style="left:305px;top:454.6px;width:1480px;height:23.72px;background:#fafafa;"></div>
<div style="left:305px;top:477.32000000000005px;width:1480px;height:1px;background:#eceef1;"></div>
<div style="left:566px;top:454.6px;width:1px;height:23.72px;background:#eef0f3;"></div>
<div style="left:726px;top:454.6px;width:1px;height:23.72px;background:#eef0f3;"></div>
<div style="left:928px;top:454.6px;width:1px;height:23.72px;background:#eef0f3;"></div>
<div style="left:1151px;top:454.6px;width:1px;height:23.72px;background:#eef0f3;"></div>
<div style="left:1364.5px;top:454.6px;width:1px;height:23.72px;background:#eef0f3;"></div>
<div style="left:1558.5px;top:454.6px;width:1px;height:23.72px;background:#eef0f3;"></div>
<div style="left:1365.5px;top:454.6px;width:193px;height:22.72px;background:#effaef;"></div>
<div style="left:1152px;top:457.6px;width:30.6px;height:16px;background:#e8dfc6;"></div>
<div style="left:1559.5px;top:457.6px;width:34.5px;height:16px;background:#c6dbec;"></div>
<div class="t" style="left:1257.5px;top:457.66px;width:100px;text-align:right;height:14px;line-height:14px;font-size:11px;color:#333;font-weight:400;">27</div>
<div class="t" style="left:1451px;top:457.66px;width:100px;text-align:right;height:14px;line-height:14px;font-size:11px;color:#333;font-weight:400;">2.40%</div>
<div class="t" style="left:1658.3px;top:457.66px;width:120px;text-align:right;height:14px;line-height:14px;font-size:11px;color:#333;font-weight:400;">$29,347.35</div>
<div style="left:305px;top:478.32px;width:1480px;height:23.72px;background:#ffffff;"></div>
<div style="left:305px;top:501.03999999999996px;width:1480px;height:1px;background:#eceef1;"></div>
<div style="left:566px;top:478.32px;width:1px;height:23.72px;background:#eef0f3;"></div>
<div style="left:726px;top:478.32px;width:1px;height:23.72px;background:#eef0f3;"></div>
<div style="left:928px;top:478.32px;width:1px;height:23.72px;background:#eef0f3;"></div>
<div style="left:1151px;top:478.32px;width:1px;height:23.72px;background:#eef0f3;"></div>
<div style="left:1364.5px;top:478.32px;width:1px;height:23.72px;background:#eef0f3;"></div>
<div style="left:1558.5px;top:478.32px;width:1px;height:23.72px;background:#eef0f3;"></div>
<div style="left:1365.5px;top:478.32px;width:193px;height:22.72px;background:#f8fcf7;"></div>
<div style="left:1152px;top:481.32px;width:12.5px;height:16px;background:#e8dfc6;"></div>
<div style="left:1559.5px;top:481.32px;width:7.5px;height:16px;background:#c6dbec;"></div>
<div class="t" style="left:1257.5px;top:481.38px;width:100px;text-align:right;height:14px;line-height:14px;font-size:11px;color:#333;font-weight:400;">11</div>
<div class="t" style="left:1451px;top:481.38px;width:100px;text-align:right;height:14px;line-height:14px;font-size:11px;color:#333;font-weight:400;">1.46%</div>
<div class="t" style="left:1658.3px;top:481.38px;width:120px;text-align:right;height:14px;line-height:14px;font-size:11px;color:#333;font-weight:400;">$6,713.50</div>
<div style="left:305px;top:502.03999999999996px;width:1480px;height:23.72px;background:#fafafa;"></div>
<div style="left:305px;top:524.76px;width:1480px;height:1px;background:#eceef1;"></div>
<div style="left:566px;top:502.03999999999996px;width:1px;height:23.72px;background:#eef0f3;"></div>
<div style="left:726px;top:502.03999999999996px;width:1px;height:23.72px;background:#eef0f3;"></div>
<div style="left:928px;top:502.03999999999996px;width:1px;height:23.72px;background:#eef0f3;"></div>
<div style="left:1151px;top:502.03999999999996px;width:1px;height:23.72px;background:#eef0f3;"></div>
<div style="left:1364.5px;top:502.03999999999996px;width:1px;height:23.72px;background:#eef0f3;"></div>
<div style="left:1558.5px;top:502.03999999999996px;width:1px;height:23.72px;background:#eef0f3;"></div>
<div style="left:1365.5px;top:502.03999999999996px;width:193px;height:22.72px;background:#fcfcfb;"></div>
<div style="left:1152px;top:505.03999999999996px;width:5.7px;height:16px;background:#e8dfc6;"></div>
<div style="left:1559.5px;top:505.03999999999996px;width:5px;height:16px;background:#c6dbec;"></div>
<div class="t" style="left:1257.5px;top:505.10px;width:100px;text-align:right;height:14px;line-height:14px;font-size:11px;color:#333;font-weight:400;">5</div>
<div class="t" style="left:1451px;top:505.10px;width:100px;text-align:right;height:14px;line-height:14px;font-size:11px;color:#333;font-weight:400;">0.78%</div>
<div class="t" style="left:1658.3px;top:505.10px;width:120px;text-align:right;height:14px;line-height:14px;font-size:11px;color:#333;font-weight:400;">$3,977.00</div>
<div style="left:305px;top:525.76px;width:1480px;height:23.72px;background:#ffffff;"></div>
<div style="left:305px;top:548.48px;width:1480px;height:1px;background:#eceef1;"></div>
<div style="left:566px;top:525.76px;width:1px;height:23.72px;background:#eef0f3;"></div>
<div style="left:726px;top:525.76px;width:1px;height:23.72px;background:#eef0f3;"></div>
<div style="left:928px;top:525.76px;width:1px;height:23.72px;background:#eef0f3;"></div>
<div style="left:1151px;top:525.76px;width:1px;height:23.72px;background:#eef0f3;"></div>
<div style="left:1364.5px;top:525.76px;width:1px;height:23.72px;background:#eef0f3;"></div>
<div style="left:1558.5px;top:525.76px;width:1px;height:23.72px;background:#eef0f3;"></div>
<div style="left:1365.5px;top:525.76px;width:193px;height:22.72px;background:#fdf9f9;"></div>
<div style="left:1152px;top:528.76px;width:1px;height:16px;background:#e8dfc6;"></div>
<div class="t" style="left:1257.5px;top:528.82px;width:100px;text-align:right;height:14px;line-height:14px;font-size:11px;color:#333;font-weight:400;">1</div>
<div class="t" style="left:1451px;top:528.82px;width:100px;text-align:right;height:14px;line-height:14px;font-size:11px;color:#333;font-weight:400;">0.37%</div>
<div class="t" style="left:1658.3px;top:528.82px;width:120px;text-align:right;height:14px;line-height:14px;font-size:11px;color:#333;font-weight:400;">$624.00</div>
<div style="left:305px;top:549.48px;width:1480px;height:23.72px;background:#fafafa;"></div>
<div style="left:305px;top:572.2px;width:1480px;height:1px;background:#eceef1;"></div>
<div style="left:566px;top:549.48px;width:1px;height:23.72px;background:#eef0f3;"></div>
<div style="left:726px;top:549.48px;width:1px;height:23.72px;background:#eef0f3;"></div>
<div style="left:928px;top:549.48px;width:1px;height:23.72px;background:#eef0f3;"></div>
<div style="left:1151px;top:549.48px;width:1px;height:23.72px;background:#eef0f3;"></div>
<div style="left:1364.5px;top:549.48px;width:1px;height:23.72px;background:#eef0f3;"></div>
<div style="left:1558.5px;top:549.48px;width:1px;height:23.72px;background:#eef0f3;"></div>
<div style="left:1365.5px;top:549.48px;width:193px;height:22.72px;background:#fbfcfa;"></div>
<div style="left:1152px;top:552.48px;width:8px;height:16px;background:#e8dfc6;"></div>
<div style="left:1559.5px;top:552.48px;width:5px;height:16px;background:#c6dbec;"></div>
<div class="t" style="left:1257.5px;top:552.54px;width:100px;text-align:right;height:14px;line-height:14px;font-size:11px;color:#333;font-weight:400;">7</div>
<div class="t" style="left:1451px;top:552.54px;width:100px;text-align:right;height:14px;line-height:14px;font-size:11px;color:#333;font-weight:400;">1.18%</div>
<div class="t" style="left:1658.3px;top:552.54px;width:120px;text-align:right;height:14px;line-height:14px;font-size:11px;color:#333;font-weight:400;">$4,847.00</div>
<div style="left:305px;top:573.2px;width:1480px;height:23.72px;background:#ffffff;"></div>
<div style="left:305px;top:595.9200000000001px;width:1480px;height:1px;background:#eceef1;"></div>
<div style="left:566px;top:573.2px;width:1px;height:23.72px;background:#eef0f3;"></div>
<div style="left:726px;top:573.2px;width:1px;height:23.72px;background:#eef0f3;"></div>
<div style="left:928px;top:573.2px;width:1px;height:23.72px;background:#eef0f3;"></div>
<div style="left:1151px;top:573.2px;width:1px;height:23.72px;background:#eef0f3;"></div>
<div style="left:1364.5px;top:573.2px;width:1px;height:23.72px;background:#eef0f3;"></div>
<div style="left:1558.5px;top:573.2px;width:1px;height:23.72px;background:#eef0f3;"></div>
<div style="left:1365.5px;top:573.2px;width:193px;height:22.72px;background:#f7fcf6;"></div>
<div style="left:1152px;top:576.2px;width:1px;height:16px;background:#e8dfc6;"></div>
<div class="t" style="left:1257.5px;top:576.26px;width:100px;text-align:right;height:14px;line-height:14px;font-size:11px;color:#333;font-weight:400;">1</div>
<div class="t" style="left:1451px;top:576.26px;width:100px;text-align:right;height:14px;line-height:14px;font-size:11px;color:#333;font-weight:400;">1.33%</div>
<div class="t" style="left:1658.3px;top:576.26px;width:120px;text-align:right;height:14px;line-height:14px;font-size:11px;color:#333;font-weight:400;">$250.00</div>
<div style="left:305px;top:596.92px;width:1480px;height:23.72px;background:#fafafa;"></div>
<div style="left:305px;top:619.64px;width:1480px;height:1px;background:#eceef1;"></div>
<div style="left:566px;top:596.92px;width:1px;height:23.72px;background:#eef0f3;"></div>
<div style="left:726px;top:596.92px;width:1px;height:23.72px;background:#eef0f3;"></div>
<div style="left:928px;top:596.92px;width:1px;height:23.72px;background:#eef0f3;"></div>
<div style="left:1151px;top:596.92px;width:1px;height:23.72px;background:#eef0f3;"></div>
<div style="left:1364.5px;top:596.92px;width:1px;height:23.72px;background:#eef0f3;"></div>
<div style="left:1558.5px;top:596.92px;width:1px;height:23.72px;background:#eef0f3;"></div>
<div style="left:1365.5px;top:596.92px;width:193px;height:22.72px;background:#fcf6f5;"></div>
<div class="t" style="left:1257.5px;top:599.98px;width:100px;text-align:right;height:14px;line-height:14px;font-size:11px;color:#333;font-weight:400;">0</div>
<div class="t" style="left:1451px;top:599.98px;width:100px;text-align:right;height:14px;line-height:14px;font-size:11px;color:#333;font-weight:400;">0.00%</div>
<div class="t" style="left:1658.3px;top:599.98px;width:120px;text-align:right;height:14px;line-height:14px;font-size:11px;color:#333;font-weight:400;">$0.00</div>
<div style="left:305px;top:609px;width:1486px;height:24.5px;background:#f0f1f4;"></div>
<div style="left:566px;top:609px;width:1px;height:24.5px;background:#e3e5ea;"></div>
<div style="left:726px;top:609px;width:1px;height:24.5px;background:#e3e5ea;"></div>
<div style="left:928px;top:609px;width:1px;height:24.5px;background:#e3e5ea;"></div>
<div style="left:1151px;top:609px;width:1px;height:24.5px;background:#e3e5ea;"></div>
<div style="left:1364.5px;top:609px;width:1px;height:24.5px;background:#e3e5ea;"></div>
<div style="left:1558.5px;top:609px;width:1px;height:24.5px;background:#e3e5ea;"></div>
<div class="t" style="left:1257.5px;top:614.20px;width:100px;text-align:right;height:14px;line-height:14px;font-size:11px;color:#2b2b36;font-weight:700;">186</div>
<div class="t" style="left:1451px;top:614.20px;width:100px;text-align:right;height:14px;line-height:14px;font-size:11px;color:#2b2b36;font-weight:700;">0.85%</div>
<div class="t" style="left:1664px;top:614.20px;width:120px;text-align:right;height:14px;line-height:14px;font-size:11px;color:#2b2b36;font-weight:700;">$195,954.91</div>
<div style="left:1785.3px;top:336px;width:5.6px;height:273px;background:#cfd4dc;"></div>
<div class="t" style="left:1575.6px;top:642.80px;height:13px;line-height:13px;font-size:10.3px;color:#555;font-weight:400;"># / Page:</div>
<div style="left:1624px;top:637.6px;width:60.6px;height:23.8px;border:1px solid #dfe3e8;border-radius:4px;box-sizing:border-box"></div>
<div class="t" style="left:1628.5px;top:642.30px;height:14px;line-height:14px;font-size:11px;color:#333;font-weight:400;">100</div>
<svg style="position:absolute;left:1661.0px;top:647.3px;" width="10" height="6.0" viewBox="0 0 10 6.0"><path d="M1 1 L5.0 5.0 L9 1" fill="none" stroke="#333" stroke-width="1.5"/></svg>
<div class="t" style="left:1692.9px;top:642.80px;height:13px;line-height:13px;font-size:10.3px;color:#555;font-weight:400;">1-16 / 16</div>
<div style="left:1744.4px;top:642.6px;width:44px;height:15.2px;border:1px solid #dfe3e8;border-radius:3px;box-sizing:border-box"></div>
<div style="left:1766.4px;top:642.6px;width:1px;height:15.2px;background:#dfe3e8;"></div>
<svg style="position:absolute;left:1752.5px;top:646px;" width="6" height="9" viewBox="0 0 6 9"><path d="M5 1 L1 4.5 L5 8" fill="none" stroke="#b0b8c4" stroke-width="1.1"/></svg>
<svg style="position:absolute;left:1774.5px;top:646px;" width="6" height="9" viewBox="0 0 6 9"><path d="M1 1 L5 4.5 L1 8" fill="none" stroke="#b0b8c4" stroke-width="1.1"/></svg>
</div>
<div class="layer" style="clip-path:inset(409px 728px 21px 0px)">
<div style="left:0px;top:409px;width:1192px;height:650px;background:#ececec;"></div>
<div style="left:0px;top:409px;width:127px;height:650px;background:#ffffff;"></div>
<div style="left:127px;top:409px;width:1px;height:650px;background:#d6d6d6;"></div>
<div style="left:0px;top:409px;width:1192px;height:1px;background:#7c7c7c;"></div>
<div style="left:0px;top:409px;width:1px;height:650px;background:#8a8a8a;"></div>
<div style="left:1191px;top:409px;width:1px;height:650px;background:#8a8a8a;"></div>
<div style="left:0px;top:1058px;width:1192px;height:1px;background:#8a8a8a;"></div>
<svg style="position:absolute;left:15.5px;top:415.6px;" width="94.47" height="45.12" viewBox="10 9 134 64"><polygon points="10.25,55.5 28.5,37 34.5,37.5 39,36 47.5,28.25 53,28 55.5,23.5 69,10 79.25,20.25 64.5,37.5 66,29.5 63,27 63.5,23 67.5,16 58,24 55,30.5 54.5,34 55.5,35.25 47,44 50.75,33.25 48.5,31 39.25,43.75 36,44.5 23,56.5 29.5,43 23,47.5" fill="#0b9db6"/><polygon points="33.25,55.75 42,46.25 40.5,49.5" fill="#0b9db6"/><polygon points="52.25,56.5 70,36 87.5,16 92.5,21 99,24.5 101,25.25 108.5,33 105,40 115.5,30 144,57.5 136,56 120,48 123.75,54.75 120,55 112.75,59 110,50 114.75,51.5 112,45.25 116.5,42 115.75,39 117,38 115.5,35.75 103.25,47.75 98.5,48.5 86.5,59 80.75,48 80.75,35.25 85.5,39.5 87.5,34.5 85.5,27.5 90,27.75 91.25,26.75 87.25,22.25 76,33 73,37.5 72,41 53.5,56.5" fill="#0b9db6"/><text x="19.6" y="72.5" textLength="115" lengthAdjust="spacingAndGlyphs" font-family="Liberation Sans" font-size="18.6" fill="#2a2a2a" style="font-variant:small-caps">Summit Apparel</text></svg>
<svg style="position:absolute;left:5.75px;top:475.9px;" width="5.5" height="9" viewBox="0 0 5.5 9"><path d="M1 1 L3.5 4.5 L1 8" fill="none" stroke="#777" stroke-width="0.9"/></svg>
<svg style="position:absolute;left:13.0px;top:472.9px;" width="13" height="13" viewBox="0 0 24 24"><path d="M3 18 A9.5 9.5 0 1 1 21 18 Z" fill="none" stroke="#555" stroke-width="1.6"/><path d="M12 16 L17 9" stroke="#555" stroke-width="1.6"/><path d="M7 12 L8 13 M12 8 L12 9.5 M5.5 16 L7 16" stroke="#555" stroke-width="1.2"/></svg>
<div class="t" style="left:29.5px;top:472.90px;height:13px;line-height:13px;font-size:9.8px;color:#3a3a3a;font-weight:400;">Scorecards</div>
<svg style="position:absolute;left:5.75px;top:494.5px;" width="5.5" height="9" viewBox="0 0 5.5 9"><path d="M1 1 L3.5 4.5 L1 8" fill="none" stroke="#777" stroke-width="0.9"/></svg>
<svg style="position:absolute;left:13.0px;top:491.5px;" width="13" height="13" viewBox="0 0 24 24"><path d="M5 7 L18 5 L19 21 L6 21 Z M8 7 Q8 2 11 2 Q14 2 14 6 M18 5 L20 21" fill="none" stroke="#555" stroke-width="1.4"/></svg>
<div class="t" style="left:29.5px;top:491.50px;height:13px;line-height:13px;font-size:9.8px;color:#3a3a3a;font-weight:400;">Shopify</div>
<svg style="position:absolute;left:5.75px;top:513.1px;" width="5.5" height="9" viewBox="0 0 5.5 9"><path d="M1 1 L3.5 4.5 L1 8" fill="none" stroke="#777" stroke-width="0.9"/></svg>
<svg style="position:absolute;left:13.0px;top:510.1px;" width="13" height="13" viewBox="0 0 24 24"><path d="M1 13 L6 13 L9 7 L12 17 L15 10 L17 13 L23 13" fill="none" stroke="#222" stroke-width="1.8"/></svg>
<div class="t" style="left:29.5px;top:510.10px;height:13px;line-height:13px;font-size:9.8px;color:#3a3a3a;font-weight:400;">Comparisons</div>
<svg style="position:absolute;left:5.75px;top:531.4px;" width="5.5" height="9" viewBox="0 0 5.5 9"><path d="M1 1 L3.5 4.5 L1 8" fill="none" stroke="#777" stroke-width="0.9"/></svg>
<svg style="position:absolute;left:13.0px;top:528.4px;" width="13" height="13" viewBox="0 0 24 24"><path d="M2 6 L14 6 L14 17 L2 17 Z M14 9 L19 9 L22 13 L22 17 L14 17" fill="none" stroke="#555" stroke-width="1.4"/><circle cx="6" cy="18" r="2" fill="#fff" stroke="#555" stroke-width="1.4"/><circle cx="18" cy="18" r="2" fill="#fff" stroke="#555" stroke-width="1.4"/></svg>
<div class="t" style="left:29.5px;top:528.40px;height:13px;line-height:13px;font-size:9.8px;color:#3a3a3a;font-weight:400;">Journeys</div>
<svg style="position:absolute;left:5.75px;top:549.7px;" width="5.5" height="9" viewBox="0 0 5.5 9"><path d="M1 1 L3.5 4.5 L1 8" fill="none" stroke="#777" stroke-width="0.9"/></svg>
<svg style="position:absolute;left:13.0px;top:546.7px;" width="13" height="13" viewBox="0 0 24 24"><circle cx="8" cy="8" r="3.5" fill="none" stroke="#555" stroke-width="1.3"/><circle cx="16" cy="8" r="3.5" fill="none" stroke="#555" stroke-width="1.3"/><path d="M2 20 Q2 13 8 13 Q14 13 14 20 Z M12 13.5 Q13.5 13 16 13 Q22 13 22 20 L14 20" fill="none" stroke="#555" stroke-width="1.3"/></svg>
<div class="t" style="left:29.5px;top:546.70px;height:13px;line-height:13px;font-size:9.8px;color:#3a3a3a;font-weight:400;">Audience</div>
<svg style="position:absolute;left:5.75px;top:568.3px;" width="5.5" height="9" viewBox="0 0 5.5 9"><path d="M1 1 L3.5 4.5 L1 8" fill="none" stroke="#777" stroke-width="0.9"/></svg>
<svg style="position:absolute;left:13.0px;top:565.3px;" width="13" height="13" viewBox="0 0 24 24"><path d="M18 5 L6 12 L18 19" fill="none" stroke="#222" stroke-width="2"/><circle cx="18" cy="5" r="3" fill="#222"/><circle cx="6" cy="12" r="3" fill="#222"/><circle cx="18" cy="19" r="3" fill="#222"/></svg>
<div class="t" style="left:29.5px;top:565.30px;height:13px;line-height:13px;font-size:9.8px;color:#3a3a3a;font-weight:400;">Acquisition</div>
<svg style="position:absolute;left:5.75px;top:586.6px;" width="5.5" height="9" viewBox="0 0 5.5 9"><path d="M1 1 L3.5 4.5 L1 8" fill="none" stroke="#777" stroke-width="0.9"/></svg>
<svg style="position:absolute;left:13.0px;top:583.6px;" width="13" height="13" viewBox="0 0 24 24"><path d="M2 7 L7 7 L15 17 L20 17 M2 17 L7 17 L15 7 L20 7" fill="none" stroke="#222" stroke-width="2.4"/><path d="M18 3 L23 7 L18 11 Z M18 13 L23 17 L18 21 Z" fill="#222"/></svg>
<div class="t" style="left:29.5px;top:583.60px;height:13px;line-height:13px;font-size:9.8px;color:#3a3a3a;font-weight:400;">Behavior</div>
<svg style="position:absolute;left:5.75px;top:604.9px;" width="5.5" height="9" viewBox="0 0 5.5 9"><path d="M1 1 L3.5 4.5 L1 8" fill="none" stroke="#777" stroke-width="0.9"/></svg>
<svg style="position:absolute;left:13.0px;top:601.9px;" width="13" height="13" viewBox="0 0 24 24"><rect x="3" y="8" width="18" height="13" rx="2.5" fill="none" stroke="#555" stroke-width="1.5"/><path d="M8 3 L12 8 L16 3" fill="none" stroke="#555" stroke-width="1.5"/></svg>
<div class="t" style="left:29.5px;top:601.90px;height:13px;line-height:13px;font-size:9.8px;color:#3a3a3a;font-weight:400;">Ads Performance</div>
<svg style="position:absolute;left:5.75px;top:623.2px;" width="5.5" height="9" viewBox="0 0 5.5 9"><path d="M1 1 L3.5 4.5 L1 8" fill="none" stroke="#777" stroke-width="0.9"/></svg>
<svg style="position:absolute;left:13.0px;top:620.2px;" width="13" height="13" viewBox="0 0 24 24"><path d="M2 4 L5 4 L8 16 L19 16 L21 7 L6 7" fill="none" stroke="#222" stroke-width="1.8"/><circle cx="9" cy="20" r="1.8" fill="#222"/><circle cx="18" cy="20" r="1.8" fill="#222"/></svg>
<div class="t" style="left:29.5px;top:620.20px;height:13px;line-height:13px;font-size:9.8px;color:#3a3a3a;font-weight:400;">Ecommerce</div>
<svg style="position:absolute;left:5.75px;top:641.8px;" width="5.5" height="9" viewBox="0 0 5.5 9"><path d="M1 1 L3.5 4.5 L1 8" fill="none" stroke="#777" stroke-width="0.9"/></svg>
<svg style="position:absolute;left:13.0px;top:638.8px;" width="13" height="13" viewBox="0 0 24 24"><path d="M20 10 A9 9 0 1 1 16 4.5" fill="none" stroke="#222" stroke-width="1.8"/><path d="M7 11 L11 15 L21 4" fill="none" stroke="#222" stroke-width="2"/></svg>
<div class="t" style="left:29.5px;top:638.80px;height:13px;line-height:13px;font-size:9.8px;color:#3a3a3a;font-weight:400;">QA</div>
<svg style="position:absolute;left:5.75px;top:660.1px;" width="5.5" height="9" viewBox="0 0 5.5 9"><path d="M1 1 L3.5 4.5 L1 8" fill="none" stroke="#777" stroke-width="0.9"/></svg>
<svg style="position:absolute;left:13.0px;top:657.1px;" width="13" height="13" viewBox="0 0 24 24"><circle cx="12" cy="4.5" r="3" fill="#222"/><path d="M12 7 L12 12 M6 17 L12 12 L18 17" fill="none" stroke="#222" stroke-width="1.6"/><circle cx="5" cy="18" r="3" fill="#222"/><circle cx="19" cy="18" r="3" fill="#222"/><circle cx="12" cy="19" r="2" fill="#222"/></svg>
<div class="t" style="left:29.5px;top:657.10px;height:13px;line-height:13px;font-size:9.8px;color:#3a3a3a;font-weight:400;">Advanced</div>
<svg style="position:absolute;left:4.0px;top:680.4px;" width="8" height="5.0" viewBox="0 0 8 5.0"><path d="M1 1 L4.0 4.0 L7 1" fill="none" stroke="#7fd386" stroke-width="1"/></svg>
<svg style="position:absolute;left:13.0px;top:675.4px;" width="13" height="13" viewBox="0 0 24 24"><path d="M22.42 10.74 L22.42 13.26 L20.19 14.29 L19.41 16.17 L20.26 18.48 L18.48 20.26 L16.17 19.41 L14.29 20.19 L13.26 22.42 L10.74 22.42 L9.71 20.19 L7.83 19.41 L5.52 20.26 L3.74 18.48 L4.59 16.17 L3.81 14.29 L1.58 13.26 L1.58 10.74 L3.81 9.71 L4.59 7.83 L3.74 5.52 L5.52 3.74 L7.83 4.59 L9.71 3.81 L10.74 1.58 L13.26 1.58 L14.29 3.81 L16.17 4.59 L18.48 3.74 L20.26 5.52 L19.41 7.83 L20.19 9.71 Z" fill="none" stroke="#7fd386" stroke-width="1.6" stroke-linejoin="round"/><circle cx="12" cy="12" r="4" fill="none" stroke="#7fd386" stroke-width="1.6"/></svg>
<div class="t" style="left:29.5px;top:675.40px;height:13px;line-height:13px;font-size:9.8px;color:#2cb934;font-weight:400;">Configuration</div>
<div class="t" style="left:14.3px;top:694.00px;height:13px;line-height:13px;font-size:9.8px;color:#2cb934;font-weight:400;">Integrations</div>
<div class="t" style="left:14.3px;top:712.30px;height:13px;line-height:13px;font-size:9.8px;color:#3a3a3a;font-weight:400;">Admin</div>
<div class="t" style="left:145.1px;top:431.10px;height:13px;line-height:13px;font-size:10.24px;color:#3c3c3c;font-weight:400;">Configuration / Integrations</div>
<div class="t" style="left:145px;top:454.00px;height:27px;line-height:27px;font-size:21px;color:#333;font-weight:400;">Integration Overview</div>
<div style="left:293px;top:547px;width:57px;height:22px;background:#cdcdcd;"></div>
<div style="left:330px;top:547px;width:20px;height:452px;background:#cdcdcd;"></div>
<div style="left:293px;top:691px;width:57px;height:21px;background:#cdcdcd;"></div>
<div style="left:293px;top:834px;width:57px;height:22px;background:#cdcdcd;"></div>
<div style="left:293px;top:977px;width:57px;height:22px;background:#cdcdcd;"></div>
<div style="left:350px;top:764px;width:39px;height:22px;background:#cdcdcd;"></div>
<div style="left:672px;top:765px;width:106px;height:22px;background:#cdcdcd;"></div>
<div style="left:293px;top:557.3px;width:47.5px;height:1.6px;background-image:repeating-linear-gradient(90deg,#111 0 1.6px,transparent 1.6px 3px)"></div>
<div style="left:293px;top:700.8px;width:47.5px;height:1.6px;background-image:repeating-linear-gradient(90deg,#111 0 1.6px,transparent 1.6px 3px)"></div>
<div style="left:293px;top:844.2px;width:47.5px;height:1.6px;background-image:repeating-linear-gradient(90deg,#111 0 1.6px,transparent 1.6px 3px)"></div>
<div style="left:293px;top:988px;width:47.5px;height:1.6px;background-image:repeating-linear-gradient(90deg,#111 0 1.6px,transparent 1.6px 3px)"></div>
<div style="left:339.2px;top:557.3px;width:1.6px;height:432px;background-image:repeating-linear-gradient(180deg,#111 0 1.6px,transparent 1.6px 3px)"></div>
<div style="left:340px;top:774.5px;width:49px;height:1.6px;background-image:repeating-linear-gradient(90deg,#111 0 1.6px,transparent 1.6px 3px)"></div>
<div style="left:672px;top:775.3px;width:106px;height:1.6px;background-image:repeating-linear-gradient(90deg,#111 0 1.6px,transparent 1.6px 3px)"></div>
<div style="left:145px;top:494px;width:148px;height:129.5px;background:#fff;border:1px solid #d4d4d4;box-sizing:border-box"></div>
<div class="t" style="left:149.0px;top:565.80px;width:140px;text-align:center;height:13px;line-height:13px;font-size:9.8px;color:#3a3a3a;font-weight:400;-webkit-text-stroke:0.35px #3a3a3a">Shopify</div>
<div class="t" style="left:149.0px;top:578.90px;width:140px;text-align:center;height:12px;line-height:12px;font-size:9.3px;color:#888;font-weight:400;">1 Account</div>
<div style="left:145px;top:637px;width:148px;height:129.5px;background:#fff;border:1px solid #d4d4d4;box-sizing:border-box"></div>
<div class="t" style="left:149.0px;top:712.60px;width:140px;text-align:center;height:13px;line-height:13px;font-size:9.8px;color:#3a3a3a;font-weight:400;-webkit-text-stroke:0.35px #3a3a3a">Google Analytics</div>
<div class="t" style="left:149.0px;top:728.30px;width:140px;text-align:center;height:12px;line-height:12px;font-size:9.3px;color:#888;font-weight:400;">1 Account</div>
<div style="left:145px;top:780px;width:148px;height:129.5px;background:#fff;border:1px solid #d4d4d4;box-sizing:border-box"></div>
<div class="t" style="left:149.0px;top:847.20px;width:140px;text-align:center;height:13px;line-height:13px;font-size:9.8px;color:#3a3a3a;font-weight:400;-webkit-text-stroke:0.35px #3a3a3a">Meta Ads</div>
<div class="t" style="left:149.0px;top:864.70px;width:140px;text-align:center;height:12px;line-height:12px;font-size:9.3px;color:#888;font-weight:400;">1 Account</div>
<div style="left:145px;top:924px;width:148px;height:129.5px;background:#fff;border:1px solid #d4d4d4;box-sizing:border-box"></div>
<div class="t" style="left:149.0px;top:1000.50px;width:140px;text-align:center;height:13px;line-height:13px;font-size:9.8px;color:#3a3a3a;font-weight:400;-webkit-text-stroke:0.35px #3a3a3a">Google Ads</div>
<div class="t" style="left:149.0px;top:1018.30px;width:140px;text-align:center;height:12px;line-height:12px;font-size:9.3px;color:#888;font-weight:400;">1 Account</div>
<svg style="position:absolute;left:194.3px;top:501.3px;" width="49.6" height="56" viewBox="0 0 50 56"><path d="M13 9 Q14 1 22 1 Q29 1 32 9" fill="none" stroke="#95bf47" stroke-width="2.6"/><path d="M19 8 Q21 3 26 3 Q31 4 31 10" fill="none" stroke="#95bf47" stroke-width="2.4"/><path d="M4 17 L35 7 L34 56 L0 50 Z" fill="#95bf47"/><path d="M35 7 L43 12 L50 48 L34 56 Z" fill="#5e8e3e"/><path d="M26 20 Q21 18 16 20 Q10 23 11 30 Q12 35 17 38 Q20 41 19 44 Q17 48 9 45 L8 50 Q16 55 23 51 Q28 47 26 40 Q25 35 20 32 Q17 29 18 26 Q20 23 25 25 Z" fill="#fff"/></svg>
<svg style="position:absolute;left:190px;top:643.8px;" width="54" height="62" viewBox="0 0 54 62"><circle cx="7.2" cy="54.2" r="7.2" fill="#e37400"/><rect x="19.9" y="23.2" width="14" height="38.2" rx="7" fill="#e37400"/><rect x="38.8" y="0" width="14.6" height="61.4" rx="7.3" fill="#f9ab00"/></svg>
<svg style="position:absolute;left:170px;top:780px;" width="100" height="70" viewBox="0 0 100 70"><path d="M75.2 56.4 C82 56.4 84.9 50 84.9 41.5 C84.9 26 77 11.3 66.1 11.3 C58 11.3 53 20 49.3 29.2 C43 42 34 56.4 24 56.4 C15 56.4 13.3 48 13.3 41.5" fill="none" stroke="#0080fb" stroke-width="8.4" stroke-linecap="round"/><path d="M13.3 41.5 C13.3 26 21 12 31.8 12 C40 12 46 22 49.3 29.2 C56 41 64 56.4 75.2 56.4" fill="none" stroke="#0064e1" stroke-width="8.4" stroke-linecap="butt"/></svg>
<svg style="position:absolute;left:185px;top:929.9px;" width="68" height="62" viewBox="0 0 68 62"><path d="M12 50 L33 12" stroke="#fbbc04" stroke-width="19" stroke-linecap="round"/><path d="M33 12 L56 51" stroke="#3d87db" stroke-width="20" stroke-linecap="round"/><circle cx="11.5" cy="50" r="11" fill="#34a853"/></svg>
<div style="left:389px;top:431px;width:283.5px;height:622px;background:#fff;border:1px solid #dadada;box-sizing:border-box"></div>
<div class="t" style="left:401.2px;top:439.20px;height:17px;line-height:17px;font-size:12.9px;color:#333;font-weight:400;">Imported Data</div>
<svg style="position:absolute;left:588.5px;top:440.7px;" width="14" height="14" viewBox="0 0 24 24"><path d="M22.42 10.74 L22.42 13.26 L20.19 14.29 L19.41 16.17 L20.26 18.48 L18.48 20.26 L16.17 19.41 L14.29 20.19 L13.26 22.42 L10.74 22.42 L9.71 20.19 L7.83 19.41 L5.52 20.26 L3.74 18.48 L4.59 16.17 L3.81 14.29 L1.58 13.26 L1.58 10.74 L3.81 9.71 L4.59 7.83 L3.74 5.52 L5.52 3.74 L7.83 4.59 L9.71 3.81 L10.74 1.58 L13.26 1.58 L14.29 3.81 L16.17 4.59 L18.48 3.74 L20.26 5.52 L19.41 7.83 L20.19 9.71 Z" fill="none" stroke="#3cc44a" stroke-width="1.6" stroke-linejoin="round"/><circle cx="12" cy="12" r="4" fill="none" stroke="#3cc44a" stroke-width="1.6"/></svg>
<div class="t" style="left:607.3px;top:439.20px;height:17px;line-height:17px;font-size:12.8px;color:#333;font-weight:400;">Edit</div>
<div style="left:395.5px;top:466px;width:270px;height:1px;background:#e3e3e3;"></div>
<div style="left:395.5px;top:492.5px;width:130.79999999999995px;height:14.3px;background:#bed8fb;"></div>
<svg style="position:absolute;left:397.4px;top:493.1px;" width="11.5" height="13" viewBox="0 0 50 56"><path d="M13 9 Q14 1 22 1 Q29 1 32 9" fill="none" stroke="#95bf47" stroke-width="2.6"/><path d="M19 8 Q21 3 26 3 Q31 4 31 10" fill="none" stroke="#95bf47" stroke-width="2.4"/><path d="M4 17 L35 7 L34 56 L0 50 Z" fill="#95bf47"/><path d="M35 7 L43 12 L50 48 L34 56 Z" fill="#5e8e3e"/><path d="M26 20 Q21 18 16 20 Q10 23 11 30 Q12 35 17 38 Q20 41 19 44 Q17 48 9 45 L8 50 Q16 55 23 51 Q28 47 26 40 Q25 35 20 32 Q17 29 18 26 Q20 23 25 25 Z" fill="#fff"/></svg>
<div class="t" style="left:414.4px;top:493.10px;height:13px;line-height:13px;font-size:9.8px;color:#2e3644;font-weight:400;">Order ID</div>
<div style="left:395.5px;top:508.35px;width:130.79999999999995px;height:14.3px;background:#dcdcdc;"></div>
<svg style="position:absolute;left:397.4px;top:508.95000000000005px;" width="11.5" height="13" viewBox="0 0 50 56"><path d="M13 9 Q14 1 22 1 Q29 1 32 9" fill="none" stroke="#95bf47" stroke-width="2.6"/><path d="M19 8 Q21 3 26 3 Q31 4 31 10" fill="none" stroke="#95bf47" stroke-width="2.4"/><path d="M4 17 L35 7 L34 56 L0 50 Z" fill="#95bf47"/><path d="M35 7 L43 12 L50 48 L34 56 Z" fill="#5e8e3e"/><path d="M26 20 Q21 18 16 20 Q10 23 11 30 Q12 35 17 38 Q20 41 19 44 Q17 48 9 45 L8 50 Q16 55 23 51 Q28 47 26 40 Q25 35 20 32 Q17 29 18 26 Q20 23 25 25 Z" fill="#fff"/></svg>
<div class="t" style="left:414.4px;top:508.95px;height:13px;line-height:13px;font-size:9.8px;color:#8c8c8c;font-weight:400;">Order URL</div>
<div style="left:395.5px;top:524.2px;width:130.79999999999995px;height:14.3px;background:#bed8fb;"></div>
<svg style="position:absolute;left:397.4px;top:524.8000000000001px;" width="11.5" height="13" viewBox="0 0 50 56"><path d="M13 9 Q14 1 22 1 Q29 1 32 9" fill="none" stroke="#95bf47" stroke-width="2.6"/><path d="M19 8 Q21 3 26 3 Q31 4 31 10" fill="none" stroke="#95bf47" stroke-width="2.4"/><path d="M4 17 L35 7 L34 56 L0 50 Z" fill="#95bf47"/><path d="M35 7 L43 12 L50 48 L34 56 Z" fill="#5e8e3e"/><path d="M26 20 Q21 18 16 20 Q10 23 11 30 Q12 35 17 38 Q20 41 19 44 Q17 48 9 45 L8 50 Q16 55 23 51 Q28 47 26 40 Q25 35 20 32 Q17 29 18 26 Q20 23 25 25 Z" fill="#fff"/></svg>
<div class="t" style="left:414.4px;top:524.80px;height:13px;line-height:13px;font-size:9.8px;color:#2e3644;font-weight:400;">Order Status</div>
<div style="left:395.5px;top:540.05px;width:130.79999999999995px;height:14.3px;background:#bed8fb;"></div>
<svg style="position:absolute;left:397.4px;top:540.65px;" width="11.5" height="13" viewBox="0 0 50 56"><path d="M13 9 Q14 1 22 1 Q29 1 32 9" fill="none" stroke="#95bf47" stroke-width="2.6"/><path d="M19 8 Q21 3 26 3 Q31 4 31 10" fill="none" stroke="#95bf47" stroke-width="2.4"/><path d="M4 17 L35 7 L34 56 L0 50 Z" fill="#95bf47"/><path d="M35 7 L43 12 L50 48 L34 56 Z" fill="#5e8e3e"/><path d="M26 20 Q21 18 16 20 Q10 23 11 30 Q12 35 17 38 Q20 41 19 44 Q17 48 9 45 L8 50 Q16 55 23 51 Q28 47 26 40 Q25 35 20 32 Q17 29 18 26 Q20 23 25 25 Z" fill="#fff"/></svg>
<div class="t" style="left:414.4px;top:540.65px;height:13px;line-height:13px;font-size:9.8px;color:#2e3644;font-weight:400;">Order Platform</div>
<div style="left:395.5px;top:555.9px;width:130.79999999999995px;height:14.3px;background:#dcdcdc;"></div>
<svg style="position:absolute;left:397.4px;top:556.5px;" width="11.5" height="13" viewBox="0 0 50 56"><path d="M13 9 Q14 1 22 1 Q29 1 32 9" fill="none" stroke="#95bf47" stroke-width="2.6"/><path d="M19 8 Q21 3 26 3 Q31 4 31 10" fill="none" stroke="#95bf47" stroke-width="2.4"/><path d="M4 17 L35 7 L34 56 L0 50 Z" fill="#95bf47"/><path d="M35 7 L43 12 L50 48 L34 56 Z" fill="#5e8e3e"/><path d="M26 20 Q21 18 16 20 Q10 23 11 30 Q12 35 17 38 Q20 41 19 44 Q17 48 9 45 L8 50 Q16 55 23 51 Q28 47 26 40 Q25 35 20 32 Q17 29 18 26 Q20 23 25 25 Z" fill="#fff"/></svg>
<div class="t" style="left:414.4px;top:556.50px;height:13px;line-height:13px;font-size:9.8px;color:#8c8c8c;font-weight:400;">Customer Name</div>
<div style="left:395.5px;top:571.75px;width:130.79999999999995px;height:14.3px;background:#dcdcdc;"></div>
<svg style="position:absolute;left:397.4px;top:572.35px;" width="11.5" height="13" viewBox="0 0 50 56"><path d="M13 9 Q14 1 22 1 Q29 1 32 9" fill="none" stroke="#95bf47" stroke-width="2.6"/><path d="M19 8 Q21 3 26 3 Q31 4 31 10" fill="none" stroke="#95bf47" stroke-width="2.4"/><path d="M4 17 L35 7 L34 56 L0 50 Z" fill="#95bf47"/><path d="M35 7 L43 12 L50 48 L34 56 Z" fill="#5e8e3e"/><path d="M26 20 Q21 18 16 20 Q10 23 11 30 Q12 35 17 38 Q20 41 19 44 Q17 48 9 45 L8 50 Q16 55 23 51 Q28 47 26 40 Q25 35 20 32 Q17 29 18 26 Q20 23 25 25 Z" fill="#fff"/></svg>
<div class="t" style="left:414.4px;top:572.35px;height:13px;line-height:13px;font-size:9.8px;color:#8c8c8c;font-weight:400;">Customer Email</div>
<div style="left:395.5px;top:587.6px;width:130.79999999999995px;height:14.3px;background:#bed8fb;"></div>
<svg style="position:absolute;left:397.4px;top:588.2px;" width="11.5" height="13" viewBox="0 0 50 56"><path d="M13 9 Q14 1 22 1 Q29 1 32 9" fill="none" stroke="#95bf47" stroke-width="2.6"/><path d="M19 8 Q21 3 26 3 Q31 4 31 10" fill="none" stroke="#95bf47" stroke-width="2.4"/><path d="M4 17 L35 7 L34 56 L0 50 Z" fill="#95bf47"/><path d="M35 7 L43 12 L50 48 L34 56 Z" fill="#5e8e3e"/><path d="M26 20 Q21 18 16 20 Q10 23 11 30 Q12 35 17 38 Q20 41 19 44 Q17 48 9 45 L8 50 Q16 55 23 51 Q28 47 26 40 Q25 35 20 32 Q17 29 18 26 Q20 23 25 25 Z" fill="#fff"/></svg>
<div class="t" style="left:414.4px;top:588.20px;height:13px;line-height:13px;font-size:9.8px;color:#2e3644;font-weight:400;">Customer ID</div>
<div style="left:535px;top:492.5px;width:130.79999999999995px;height:14.3px;background:#bed8fb;"></div>
<svg style="position:absolute;left:537.1px;top:493.1px;" width="11.5" height="13" viewBox="0 0 50 56"><path d="M13 9 Q14 1 22 1 Q29 1 32 9" fill="none" stroke="#95bf47" stroke-width="2.6"/><path d="M19 8 Q21 3 26 3 Q31 4 31 10" fill="none" stroke="#95bf47" stroke-width="2.4"/><path d="M4 17 L35 7 L34 56 L0 50 Z" fill="#95bf47"/><path d="M35 7 L43 12 L50 48 L34 56 Z" fill="#5e8e3e"/><path d="M26 20 Q21 18 16 20 Q10 23 11 30 Q12 35 17 38 Q20 41 19 44 Q17 48 9 45 L8 50 Q16 55 23 51 Q28 47 26 40 Q25 35 20 32 Q17 29 18 26 Q20 23 25 25 Z" fill="#fff"/></svg>
<div class="t" style="left:553.8px;top:493.10px;height:13px;line-height:13px;font-size:9.8px;color:#2e3644;font-weight:400;">Customer Order Count</div>
<div style="left:535px;top:508.35px;width:130.79999999999995px;height:14.3px;background:#dcdcdc;"></div>
<svg style="position:absolute;left:537.1px;top:508.95000000000005px;" width="11.5" height="13" viewBox="0 0 50 56"><path d="M13 9 Q14 1 22 1 Q29 1 32 9" fill="none" stroke="#95bf47" stroke-width="2.6"/><path d="M19 8 Q21 3 26 3 Q31 4 31 10" fill="none" stroke="#95bf47" stroke-width="2.4"/><path d="M4 17 L35 7 L34 56 L0 50 Z" fill="#95bf47"/><path d="M35 7 L43 12 L50 48 L34 56 Z" fill="#5e8e3e"/><path d="M26 20 Q21 18 16 20 Q10 23 11 30 Q12 35 17 38 Q20 41 19 44 Q17 48 9 45 L8 50 Q16 55 23 51 Q28 47 26 40 Q25 35 20 32 Q17 29 18 26 Q20 23 25 25 Z" fill="#fff"/></svg>
<div class="t" style="left:553.8px;top:508.95px;height:13px;line-height:13px;font-size:9.8px;color:#8c8c8c;font-weight:400;">Customer City</div>
<div style="left:535px;top:524.2px;width:130.79999999999995px;height:14.3px;background:#bed8fb;"></div>
<svg style="position:absolute;left:537.1px;top:524.8000000000001px;" width="11.5" height="13" viewBox="0 0 50 56"><path d="M13 9 Q14 1 22 1 Q29 1 32 9" fill="none" stroke="#95bf47" stroke-width="2.6"/><path d="M19 8 Q21 3 26 3 Q31 4 31 10" fill="none" stroke="#95bf47" stroke-width="2.4"/><path d="M4 17 L35 7 L34 56 L0 50 Z" fill="#95bf47"/><path d="M35 7 L43 12 L50 48 L34 56 Z" fill="#5e8e3e"/><path d="M26 20 Q21 18 16 20 Q10 23 11 30 Q12 35 17 38 Q20 41 19 44 Q17 48 9 45 L8 50 Q16 55 23 51 Q28 47 26 40 Q25 35 20 32 Q17 29 18 26 Q20 23 25 25 Z" fill="#fff"/></svg>
<div class="t" style="left:553.8px;top:524.80px;height:13px;line-height:13px;font-size:9.8px;color:#2e3644;font-weight:400;">Order Revenue</div>
<div style="left:535px;top:540.05px;width:130.79999999999995px;height:14.3px;background:#bed8fb;"></div>
<svg style="position:absolute;left:537.1px;top:540.65px;" width="11.5" height="13" viewBox="0 0 50 56"><path d="M13 9 Q14 1 22 1 Q29 1 32 9" fill="none" stroke="#95bf47" stroke-width="2.6"/><path d="M19 8 Q21 3 26 3 Q31 4 31 10" fill="none" stroke="#95bf47" stroke-width="2.4"/><path d="M4 17 L35 7 L34 56 L0 50 Z" fill="#95bf47"/><path d="M35 7 L43 12 L50 48 L34 56 Z" fill="#5e8e3e"/><path d="M26 20 Q21 18 16 20 Q10 23 11 30 Q12 35 17 38 Q20 41 19 44 Q17 48 9 45 L8 50 Q16 55 23 51 Q28 47 26 40 Q25 35 20 32 Q17 29 18 26 Q20 23 25 25 Z" fill="#fff"/></svg>
<div class="t" style="left:553.8px;top:540.65px;height:13px;line-height:13px;font-size:9.8px;color:#2e3644;font-weight:400;">Order Total Price</div>
<div style="left:535px;top:555.9px;width:130.79999999999995px;height:14.3px;background:#bed8fb;"></div>
<svg style="position:absolute;left:537.1px;top:556.5px;" width="11.5" height="13" viewBox="0 0 50 56"><path d="M13 9 Q14 1 22 1 Q29 1 32 9" fill="none" stroke="#95bf47" stroke-width="2.6"/><path d="M19 8 Q21 3 26 3 Q31 4 31 10" fill="none" stroke="#95bf47" stroke-width="2.4"/><path d="M4 17 L35 7 L34 56 L0 50 Z" fill="#95bf47"/><path d="M35 7 L43 12 L50 48 L34 56 Z" fill="#5e8e3e"/><path d="M26 20 Q21 18 16 20 Q10 23 11 30 Q12 35 17 38 Q20 41 19 44 Q17 48 9 45 L8 50 Q16 55 23 51 Q28 47 26 40 Q25 35 20 32 Q17 29 18 26 Q20 23 25 25 Z" fill="#fff"/></svg>
<div class="t" style="left:553.8px;top:556.50px;height:13px;line-height:13px;font-size:9.8px;color:#2e3644;font-weight:400;">Order Tax</div>
<div style="left:535px;top:571.75px;width:130.79999999999995px;height:14.3px;background:#bed8fb;"></div>
<svg style="position:absolute;left:537.1px;top:572.35px;" width="11.5" height="13" viewBox="0 0 50 56"><path d="M13 9 Q14 1 22 1 Q29 1 32 9" fill="none" stroke="#95bf47" stroke-width="2.6"/><path d="M19 8 Q21 3 26 3 Q31 4 31 10" fill="none" stroke="#95bf47" stroke-width="2.4"/><path d="M4 17 L35 7 L34 56 L0 50 Z" fill="#95bf47"/><path d="M35 7 L43 12 L50 48 L34 56 Z" fill="#5e8e3e"/><path d="M26 20 Q21 18 16 20 Q10 23 11 30 Q12 35 17 38 Q20 41 19 44 Q17 48 9 45 L8 50 Q16 55 23 51 Q28 47 26 40 Q25 35 20 32 Q17 29 18 26 Q20 23 25 25 Z" fill="#fff"/></svg>
<div class="t" style="left:553.8px;top:572.35px;height:13px;line-height:13px;font-size:9.8px;color:#2e3644;font-weight:400;">Order Shipping</div>
<div style="left:535px;top:587.6px;width:130.79999999999995px;height:14.3px;background:#bed8fb;"></div>
<svg style="position:absolute;left:537.1px;top:588.2px;" width="11.5" height="13" viewBox="0 0 50 56"><path d="M13 9 Q14 1 22 1 Q29 1 32 9" fill="none" stroke="#95bf47" stroke-width="2.6"/><path d="M19 8 Q21 3 26 3 Q31 4 31 10" fill="none" stroke="#95bf47" stroke-width="2.4"/><path d="M4 17 L35 7 L34 56 L0 50 Z" fill="#95bf47"/><path d="M35 7 L43 12 L50 48 L34 56 Z" fill="#5e8e3e"/><path d="M26 20 Q21 18 16 20 Q10 23 11 30 Q12 35 17 38 Q20 41 19 44 Q17 48 9 45 L8 50 Q16 55 23 51 Q28 47 26 40 Q25 35 20 32 Q17 29 18 26 Q20 23 25 25 Z" fill="#fff"/></svg>
<div class="t" style="left:553.8px;top:588.20px;height:13px;line-height:13px;font-size:9.8px;color:#2e3644;font-weight:400;">Customer LTV</div>
<div class="t" style="left:490.5px;top:605.80px;width:80px;text-align:center;height:11px;line-height:11px;font-size:8.4px;color:#222;font-weight:700;">See More...</div>
<div style="left:395.5px;top:637.3px;width:130.79999999999995px;height:14.3px;background:#bed8fb;"></div>
<svg style="position:absolute;left:397.9px;top:638.4px;" width="10.5" height="12" viewBox="0 0 54 62"><circle cx="7.2" cy="54.2" r="7.2" fill="#e37400"/><rect x="19.9" y="23.2" width="14" height="38.2" rx="7" fill="#e37400"/><rect x="38.8" y="0" width="14.6" height="61.4" rx="7.3" fill="#f9ab00"/></svg>
<div class="t" style="left:414.4px;top:637.90px;height:13px;line-height:13px;font-size:9.8px;color:#2e3644;font-weight:400;">Source</div>
<div style="left:395.5px;top:653.15px;width:130.79999999999995px;height:14.3px;background:#bed8fb;"></div>
<svg style="position:absolute;left:397.9px;top:654.25px;" width="10.5" height="12" viewBox="0 0 54 62"><circle cx="7.2" cy="54.2" r="7.2" fill="#e37400"/><rect x="19.9" y="23.2" width="14" height="38.2" rx="7" fill="#e37400"/><rect x="38.8" y="0" width="14.6" height="61.4" rx="7.3" fill="#f9ab00"/></svg>
<div class="t" style="left:414.4px;top:653.75px;height:13px;line-height:13px;font-size:9.8px;color:#2e3644;font-weight:400;">Medium</div>
<div style="left:395.5px;top:669.0px;width:130.79999999999995px;height:14.3px;background:#bed8fb;"></div>
<svg style="position:absolute;left:397.9px;top:670.1px;" width="10.5" height="12" viewBox="0 0 54 62"><circle cx="7.2" cy="54.2" r="7.2" fill="#e37400"/><rect x="19.9" y="23.2" width="14" height="38.2" rx="7" fill="#e37400"/><rect x="38.8" y="0" width="14.6" height="61.4" rx="7.3" fill="#f9ab00"/></svg>
<div class="t" style="left:414.4px;top:669.60px;height:13px;line-height:13px;font-size:9.8px;color:#2e3644;font-weight:400;">Campaign</div>
<div style="left:395.5px;top:684.8499999999999px;width:130.79999999999995px;height:14.3px;background:#bed8fb;"></div>
<svg style="position:absolute;left:397.9px;top:685.9499999999999px;" width="10.5" height="12" viewBox="0 0 54 62"><circle cx="7.2" cy="54.2" r="7.2" fill="#e37400"/><rect x="19.9" y="23.2" width="14" height="38.2" rx="7" fill="#e37400"/><rect x="38.8" y="0" width="14.6" height="61.4" rx="7.3" fill="#f9ab00"/></svg>
<div class="t" style="left:414.4px;top:685.45px;height:13px;line-height:13px;font-size:9.8px;color:#2e3644;font-weight:400;">Event Name</div>
<div style="left:395.5px;top:700.6999999999999px;width:130.79999999999995px;height:14.3px;background:#bed8fb;"></div>
<svg style="position:absolute;left:397.9px;top:701.8px;" width="10.5" height="12" viewBox="0 0 54 62"><circle cx="7.2" cy="54.2" r="7.2" fill="#e37400"/><rect x="19.9" y="23.2" width="14" height="38.2" rx="7" fill="#e37400"/><rect x="38.8" y="0" width="14.6" height="61.4" rx="7.3" fill="#f9ab00"/></svg>
<div class="t" style="left:414.4px;top:701.30px;height:13px;line-height:13px;font-size:9.8px;color:#2e3644;font-weight:400;">Referrer</div>
<div style="left:395.5px;top:716.55px;width:130.79999999999995px;height:14.3px;background:#bed8fb;"></div>
<svg style="position:absolute;left:397.9px;top:717.65px;" width="10.5" height="12" viewBox="0 0 54 62"><circle cx="7.2" cy="54.2" r="7.2" fill="#e37400"/><rect x="19.9" y="23.2" width="14" height="38.2" rx="7" fill="#e37400"/><rect x="38.8" y="0" width="14.6" height="61.4" rx="7.3" fill="#f9ab00"/></svg>
<div class="t" style="left:414.4px;top:717.15px;height:13px;line-height:13px;font-size:9.8px;color:#2e3644;font-weight:400;">Transaction ID</div>
<div style="left:395.5px;top:732.4px;width:130.79999999999995px;height:14.3px;background:#bed8fb;"></div>
<svg style="position:absolute;left:397.9px;top:733.5px;" width="10.5" height="12" viewBox="0 0 54 62"><circle cx="7.2" cy="54.2" r="7.2" fill="#e37400"/><rect x="19.9" y="23.2" width="14" height="38.2" rx="7" fill="#e37400"/><rect x="38.8" y="0" width="14.6" height="61.4" rx="7.3" fill="#f9ab00"/></svg>
<div class="t" style="left:414.4px;top:733.00px;height:13px;line-height:13px;font-size:9.8px;color:#2e3644;font-weight:400;">Product ID</div>
<div style="left:535px;top:637.3px;width:130.79999999999995px;height:14.3px;background:#bed8fb;"></div>
<svg style="position:absolute;left:537.6px;top:638.4px;" width="10.5" height="12" viewBox="0 0 54 62"><circle cx="7.2" cy="54.2" r="7.2" fill="#e37400"/><rect x="19.9" y="23.2" width="14" height="38.2" rx="7" fill="#e37400"/><rect x="38.8" y="0" width="14.6" height="61.4" rx="7.3" fill="#f9ab00"/></svg>
<div class="t" style="left:553.8px;top:637.90px;height:13px;line-height:13px;font-size:9.8px;color:#2e3644;font-weight:400;">Sessions</div>
<div style="left:535px;top:653.15px;width:130.79999999999995px;height:14.3px;background:#bed8fb;"></div>
<svg style="position:absolute;left:537.6px;top:654.25px;" width="10.5" height="12" viewBox="0 0 54 62"><circle cx="7.2" cy="54.2" r="7.2" fill="#e37400"/><rect x="19.9" y="23.2" width="14" height="38.2" rx="7" fill="#e37400"/><rect x="38.8" y="0" width="14.6" height="61.4" rx="7.3" fill="#f9ab00"/></svg>
<div class="t" style="left:553.8px;top:653.75px;height:13px;line-height:13px;font-size:9.8px;color:#2e3644;font-weight:400;">Users</div>
<div style="left:535px;top:669.0px;width:130.79999999999995px;height:14.3px;background:#bed8fb;"></div>
<svg style="position:absolute;left:537.6px;top:670.1px;" width="10.5" height="12" viewBox="0 0 54 62"><circle cx="7.2" cy="54.2" r="7.2" fill="#e37400"/><rect x="19.9" y="23.2" width="14" height="38.2" rx="7" fill="#e37400"/><rect x="38.8" y="0" width="14.6" height="61.4" rx="7.3" fill="#f9ab00"/></svg>
<div class="t" style="left:553.8px;top:669.60px;height:13px;line-height:13px;font-size:9.8px;color:#2e3644;font-weight:400;">Pageviews</div>
<div style="left:535px;top:684.8499999999999px;width:130.79999999999995px;height:14.3px;background:#bed8fb;"></div>
<svg style="position:absolute;left:537.6px;top:685.9499999999999px;" width="10.5" height="12" viewBox="0 0 54 62"><circle cx="7.2" cy="54.2" r="7.2" fill="#e37400"/><rect x="19.9" y="23.2" width="14" height="38.2" rx="7" fill="#e37400"/><rect x="38.8" y="0" width="14.6" height="61.4" rx="7.3" fill="#f9ab00"/></svg>
<div class="t" style="left:553.8px;top:685.45px;height:13px;line-height:13px;font-size:9.8px;color:#2e3644;font-weight:400;">Events</div>
<div style="left:535px;top:700.6999999999999px;width:130.79999999999995px;height:14.3px;background:#bed8fb;"></div>
<svg style="position:absolute;left:537.6px;top:701.8px;" width="10.5" height="12" viewBox="0 0 54 62"><circle cx="7.2" cy="54.2" r="7.2" fill="#e37400"/><rect x="19.9" y="23.2" width="14" height="38.2" rx="7" fill="#e37400"/><rect x="38.8" y="0" width="14.6" height="61.4" rx="7.3" fill="#f9ab00"/></svg>
<div class="t" style="left:553.8px;top:701.30px;height:13px;line-height:13px;font-size:9.8px;color:#2e3644;font-weight:400;">Engaged Sessions</div>
<div style="left:535px;top:716.55px;width:130.79999999999995px;height:14.3px;background:#bed8fb;"></div>
<svg style="position:absolute;left:537.6px;top:717.65px;" width="10.5" height="12" viewBox="0 0 54 62"><circle cx="7.2" cy="54.2" r="7.2" fill="#e37400"/><rect x="19.9" y="23.2" width="14" height="38.2" rx="7" fill="#e37400"/><rect x="38.8" y="0" width="14.6" height="61.4" rx="7.3" fill="#f9ab00"/></svg>
<div class="t" style="left:553.8px;top:717.15px;height:13px;line-height:13px;font-size:9.8px;color:#2e3644;font-weight:400;">New Users</div>
<div style="left:535px;top:732.4px;width:130.79999999999995px;height:14.3px;background:#bed8fb;"></div>
<svg style="position:absolute;left:537.6px;top:733.5px;" width="10.5" height="12" viewBox="0 0 54 62"><circle cx="7.2" cy="54.2" r="7.2" fill="#e37400"/><rect x="19.9" y="23.2" width="14" height="38.2" rx="7" fill="#e37400"/><rect x="38.8" y="0" width="14.6" height="61.4" rx="7.3" fill="#f9ab00"/></svg>
<div class="t" style="left:553.8px;top:733.00px;height:13px;line-height:13px;font-size:9.8px;color:#2e3644;font-weight:400;">Returning Visitors</div>
<div class="t" style="left:490.5px;top:750.60px;width:80px;text-align:center;height:11px;line-height:11px;font-size:8.4px;color:#222;font-weight:700;">See More...</div>
<div style="left:395.5px;top:780.6999999999999px;width:130.79999999999995px;height:14.3px;background:#bed8fb;"></div>
<svg style="position:absolute;left:395.4px;top:782.3px;" width="16" height="11" viewBox="8 6 82 55"><path d="M75.2 56.4 C82 56.4 84.9 50 84.9 41.5 C84.9 26 77 11.3 66.1 11.3 C58 11.3 53 20 49.3 29.2 C43 42 34 56.4 24 56.4 C15 56.4 13.3 48 13.3 41.5" fill="none" stroke="#0080fb" stroke-width="10" stroke-linecap="round"/><path d="M13.3 41.5 C13.3 26 21 12 31.8 12 C40 12 46 22 49.3 29.2 C56 41 64 56.4 75.2 56.4" fill="none" stroke="#0064e1" stroke-width="10" stroke-linecap="butt"/></svg>
<div class="t" style="left:414.4px;top:781.30px;height:13px;line-height:13px;font-size:9.8px;color:#2e3644;font-weight:400;">Campaign ID</div>
<div style="left:395.5px;top:796.55px;width:130.79999999999995px;height:14.3px;background:#bed8fb;"></div>
<svg style="position:absolute;left:395.4px;top:798.15px;" width="16" height="11" viewBox="8 6 82 55"><path d="M75.2 56.4 C82 56.4 84.9 50 84.9 41.5 C84.9 26 77 11.3 66.1 11.3 C58 11.3 53 20 49.3 29.2 C43 42 34 56.4 24 56.4 C15 56.4 13.3 48 13.3 41.5" fill="none" stroke="#0080fb" stroke-width="10" stroke-linecap="round"/><path d="M13.3 41.5 C13.3 26 21 12 31.8 12 C40 12 46 22 49.3 29.2 C56 41 64 56.4 75.2 56.4" fill="none" stroke="#0064e1" stroke-width="10" stroke-linecap="butt"/></svg>
<div class="t" style="left:414.4px;top:797.15px;height:13px;line-height:13px;font-size:9.8px;color:#2e3644;font-weight:400;">Campaign Name</div>
<div style="left:395.5px;top:812.4px;width:130.79999999999995px;height:14.3px;background:#bed8fb;"></div>
<svg style="position:absolute;left:395.4px;top:814.0px;" width="16" height="11" viewBox="8 6 82 55"><path d="M75.2 56.4 C82 56.4 84.9 50 84.9 41.5 C84.9 26 77 11.3 66.1 11.3 C58 11.3 53 20 49.3 29.2 C43 42 34 56.4 24 56.4 C15 56.4 13.3 48 13.3 41.5" fill="none" stroke="#0080fb" stroke-width="10" stroke-linecap="round"/><path d="M13.3 41.5 C13.3 26 21 12 31.8 12 C40 12 46 22 49.3 29.2 C56 41 64 56.4 75.2 56.4" fill="none" stroke="#0064e1" stroke-width="10" stroke-linecap="butt"/></svg>
<div class="t" style="left:414.4px;top:813.00px;height:13px;line-height:13px;font-size:9.8px;color:#2e3644;font-weight:400;">Ad Set ID</div>
<div style="left:395.5px;top:828.2499999999999px;width:130.79999999999995px;height:14.3px;background:#bed8fb;"></div>
<svg style="position:absolute;left:395.4px;top:829.8499999999999px;" width="16" height="11" viewBox="8 6 82 55"><path d="M75.2 56.4 C82 56.4 84.9 50 84.9 41.5 C84.9 26 77 11.3 66.1 11.3 C58 11.3 53 20 49.3 29.2 C43 42 34 56.4 24 56.4 C15 56.4 13.3 48 13.3 41.5" fill="none" stroke="#0080fb" stroke-width="10" stroke-linecap="round"/><path d="M13.3 41.5 C13.3 26 21 12 31.8 12 C40 12 46 22 49.3 29.2 C56 41 64 56.4 75.2 56.4" fill="none" stroke="#0064e1" stroke-width="10" stroke-linecap="butt"/></svg>
<div class="t" style="left:414.4px;top:828.85px;height:13px;line-height:13px;font-size:9.8px;color:#2e3644;font-weight:400;">Ad Set Name</div>
<div style="left:395.5px;top:844.0999999999999px;width:130.79999999999995px;height:14.3px;background:#bed8fb;"></div>
<svg style="position:absolute;left:395.4px;top:845.6999999999999px;" width="16" height="11" viewBox="8 6 82 55"><path d="M75.2 56.4 C82 56.4 84.9 50 84.9 41.5 C84.9 26 77 11.3 66.1 11.3 C58 11.3 53 20 49.3 29.2 C43 42 34 56.4 24 56.4 C15 56.4 13.3 48 13.3 41.5" fill="none" stroke="#0080fb" stroke-width="10" stroke-linecap="round"/><path d="M13.3 41.5 C13.3 26 21 12 31.8 12 C40 12 46 22 49.3 29.2 C56 41 64 56.4 75.2 56.4" fill="none" stroke="#0064e1" stroke-width="10" stroke-linecap="butt"/></svg>
<div class="t" style="left:414.4px;top:844.70px;height:13px;line-height:13px;font-size:9.8px;color:#2e3644;font-weight:400;">Ad ID</div>
<div style="left:395.5px;top:859.9499999999999px;width:130.79999999999995px;height:14.3px;background:#bed8fb;"></div>
<svg style="position:absolute;left:395.4px;top:861.55px;" width="16" height="11" viewBox="8 6 82 55"><path d="M75.2 56.4 C82 56.4 84.9 50 84.9 41.5 C84.9 26 77 11.3 66.1 11.3 C58 11.3 53 20 49.3 29.2 C43 42 34 56.4 24 56.4 C15 56.4 13.3 48 13.3 41.5" fill="none" stroke="#0080fb" stroke-width="10" stroke-linecap="round"/><path d="M13.3 41.5 C13.3 26 21 12 31.8 12 C40 12 46 22 49.3 29.2 C56 41 64 56.4 75.2 56.4" fill="none" stroke="#0064e1" stroke-width="10" stroke-linecap="butt"/></svg>
<div class="t" style="left:414.4px;top:860.55px;height:13px;line-height:13px;font-size:9.8px;color:#2e3644;font-weight:400;">Ad Name</div>
<div style="left:395.5px;top:875.8px;width:130.79999999999995px;height:14.3px;background:#bed8fb;"></div>
<svg style="position:absolute;left:395.4px;top:877.4px;" width="16" height="11" viewBox="8 6 82 55"><path d="M75.2 56.4 C82 56.4 84.9 50 84.9 41.5 C84.9 26 77 11.3 66.1 11.3 C58 11.3 53 20 49.3 29.2 C43 42 34 56.4 24 56.4 C15 56.4 13.3 48 13.3 41.5" fill="none" stroke="#0080fb" stroke-width="10" stroke-linecap="round"/><path d="M13.3 41.5 C13.3 26 21 12 31.8 12 C40 12 46 22 49.3 29.2 C56 41 64 56.4 75.2 56.4" fill="none" stroke="#0064e1" stroke-width="10" stroke-linecap="butt"/></svg>
<div class="t" style="left:414.4px;top:876.40px;height:13px;line-height:13px;font-size:9.8px;color:#2e3644;font-weight:400;">Geo Country</div>
<div style="left:535px;top:780.6999999999999px;width:130.79999999999995px;height:14.3px;background:#bed8fb;"></div>
<svg style="position:absolute;left:535.1px;top:782.3px;" width="16" height="11" viewBox="8 6 82 55"><path d="M75.2 56.4 C82 56.4 84.9 50 84.9 41.5 C84.9 26 77 11.3 66.1 11.3 C58 11.3 53 20 49.3 29.2 C43 42 34 56.4 24 56.4 C15 56.4 13.3 48 13.3 41.5" fill="none" stroke="#0080fb" stroke-width="10" stroke-linecap="round"/><path d="M13.3 41.5 C13.3 26 21 12 31.8 12 C40 12 46 22 49.3 29.2 C56 41 64 56.4 75.2 56.4" fill="none" stroke="#0064e1" stroke-width="10" stroke-linecap="butt"/></svg>
<div class="t" style="left:553.8px;top:781.30px;height:13px;line-height:13px;font-size:9.8px;color:#2e3644;font-weight:400;">Spend</div>
<div style="left:535px;top:796.55px;width:130.79999999999995px;height:14.3px;background:#bed8fb;"></div>
<svg style="position:absolute;left:535.1px;top:798.15px;" width="16" height="11" viewBox="8 6 82 55"><path d="M75.2 56.4 C82 56.4 84.9 50 84.9 41.5 C84.9 26 77 11.3 66.1 11.3 C58 11.3 53 20 49.3 29.2 C43 42 34 56.4 24 56.4 C15 56.4 13.3 48 13.3 41.5" fill="none" stroke="#0080fb" stroke-width="10" stroke-linecap="round"/><path d="M13.3 41.5 C13.3 26 21 12 31.8 12 C40 12 46 22 49.3 29.2 C56 41 64 56.4 75.2 56.4" fill="none" stroke="#0064e1" stroke-width="10" stroke-linecap="butt"/></svg>
<div class="t" style="left:553.8px;top:797.15px;height:13px;line-height:13px;font-size:9.8px;color:#2e3644;font-weight:400;">Conversions</div>
<div style="left:535px;top:812.4px;width:130.79999999999995px;height:14.3px;background:#bed8fb;"></div>
<svg style="position:absolute;left:535.1px;top:814.0px;" width="16" height="11" viewBox="8 6 82 55"><path d="M75.2 56.4 C82 56.4 84.9 50 84.9 41.5 C84.9 26 77 11.3 66.1 11.3 C58 11.3 53 20 49.3 29.2 C43 42 34 56.4 24 56.4 C15 56.4 13.3 48 13.3 41.5" fill="none" stroke="#0080fb" stroke-width="10" stroke-linecap="round"/><path d="M13.3 41.5 C13.3 26 21 12 31.8 12 C40 12 46 22 49.3 29.2 C56 41 64 56.4 75.2 56.4" fill="none" stroke="#0064e1" stroke-width="10" stroke-linecap="butt"/></svg>
<div class="t" style="left:553.8px;top:813.00px;height:13px;line-height:13px;font-size:9.8px;color:#2e3644;font-weight:400;">Conversion Value</div>
<div style="left:535px;top:828.2499999999999px;width:130.79999999999995px;height:14.3px;background:#bed8fb;"></div>
<svg style="position:absolute;left:535.1px;top:829.8499999999999px;" width="16" height="11" viewBox="8 6 82 55"><path d="M75.2 56.4 C82 56.4 84.9 50 84.9 41.5 C84.9 26 77 11.3 66.1 11.3 C58 11.3 53 20 49.3 29.2 C43 42 34 56.4 24 56.4 C15 56.4 13.3 48 13.3 41.5" fill="none" stroke="#0080fb" stroke-width="10" stroke-linecap="round"/><path d="M13.3 41.5 C13.3 26 21 12 31.8 12 C40 12 46 22 49.3 29.2 C56 41 64 56.4 75.2 56.4" fill="none" stroke="#0064e1" stroke-width="10" stroke-linecap="butt"/></svg>
<div class="t" style="left:553.8px;top:828.85px;height:13px;line-height:13px;font-size:9.8px;color:#2e3644;font-weight:400;">Clicks</div>
<div style="left:535px;top:844.0999999999999px;width:130.79999999999995px;height:14.3px;background:#bed8fb;"></div>
<svg style="position:absolute;left:535.1px;top:845.6999999999999px;" width="16" height="11" viewBox="8 6 82 55"><path d="M75.2 56.4 C82 56.4 84.9 50 84.9 41.5 C84.9 26 77 11.3 66.1 11.3 C58 11.3 53 20 49.3 29.2 C43 42 34 56.4 24 56.4 C15 56.4 13.3 48 13.3 41.5" fill="none" stroke="#0080fb" stroke-width="10" stroke-linecap="round"/><path d="M13.3 41.5 C13.3 26 21 12 31.8 12 C40 12 46 22 49.3 29.2 C56 41 64 56.4 75.2 56.4" fill="none" stroke="#0064e1" stroke-width="10" stroke-linecap="butt"/></svg>
<div class="t" style="left:553.8px;top:844.70px;height:13px;line-height:13px;font-size:9.8px;color:#2e3644;font-weight:400;">Impressions</div>
<div style="left:535px;top:859.9499999999999px;width:130.79999999999995px;height:14.3px;background:#dcdcdc;"></div>
<svg style="position:absolute;left:535.1px;top:861.55px;" width="16" height="11" viewBox="8 6 82 55"><path d="M75.2 56.4 C82 56.4 84.9 50 84.9 41.5 C84.9 26 77 11.3 66.1 11.3 C58 11.3 53 20 49.3 29.2 C43 42 34 56.4 24 56.4 C15 56.4 13.3 48 13.3 41.5" fill="none" stroke="#0080fb" stroke-width="10" stroke-linecap="round"/><path d="M13.3 41.5 C13.3 26 21 12 31.8 12 C40 12 46 22 49.3 29.2 C56 41 64 56.4 75.2 56.4" fill="none" stroke="#0064e1" stroke-width="10" stroke-linecap="butt"/></svg>
<div class="t" style="left:553.8px;top:860.55px;height:13px;line-height:13px;font-size:9.8px;color:#8c8c8c;font-weight:400;">Likes</div>
<div style="left:535px;top:875.8px;width:130.79999999999995px;height:14.3px;background:#dcdcdc;"></div>
<svg style="position:absolute;left:535.1px;top:877.4px;" width="16" height="11" viewBox="8 6 82 55"><path d="M75.2 56.4 C82 56.4 84.9 50 84.9 41.5 C84.9 26 77 11.3 66.1 11.3 C58 11.3 53 20 49.3 29.2 C43 42 34 56.4 24 56.4 C15 56.4 13.3 48 13.3 41.5" fill="none" stroke="#0080fb" stroke-width="10" stroke-linecap="round"/><path d="M13.3 41.5 C13.3 26 21 12 31.8 12 C40 12 46 22 49.3 29.2 C56 41 64 56.4 75.2 56.4" fill="none" stroke="#0064e1" stroke-width="10" stroke-linecap="butt"/></svg>
<div class="t" style="left:553.8px;top:876.40px;height:13px;line-height:13px;font-size:9.8px;color:#8c8c8c;font-weight:400;">Comments</div>
<div class="t" style="left:490.5px;top:894.00px;width:80px;text-align:center;height:11px;line-height:11px;font-size:8.4px;color:#222;font-weight:700;">See More...</div>
<div style="left:395.5px;top:924.1999999999999px;width:130.79999999999995px;height:14.3px;background:#bed8fb;"></div>
<svg style="position:absolute;left:396.9px;top:925.3px;" width="13" height="12" viewBox="0 0 68 62"><path d="M12 50 L33 12" stroke="#fbbc04" stroke-width="19" stroke-linecap="round"/><path d="M33 12 L56 51" stroke="#3d87db" stroke-width="20" stroke-linecap="round"/><circle cx="11.5" cy="50" r="11" fill="#34a853"/></svg>
<div class="t" style="left:414.4px;top:924.80px;height:13px;line-height:13px;font-size:9.8px;color:#2e3644;font-weight:400;">Campaign ID</div>
<div style="left:395.5px;top:940.05px;width:130.79999999999995px;height:14.3px;background:#bed8fb;"></div>
<svg style="position:absolute;left:396.9px;top:941.15px;" width="13" height="12" viewBox="0 0 68 62"><path d="M12 50 L33 12" stroke="#fbbc04" stroke-width="19" stroke-linecap="round"/><path d="M33 12 L56 51" stroke="#3d87db" stroke-width="20" stroke-linecap="round"/><circle cx="11.5" cy="50" r="11" fill="#34a853"/></svg>
<div class="t" style="left:414.4px;top:940.65px;height:13px;line-height:13px;font-size:9.8px;color:#2e3644;font-weight:400;">Campaign Name</div>
<div style="left:395.5px;top:955.9px;width:130.79999999999995px;height:14.3px;background:#bed8fb;"></div>
<svg style="position:absolute;left:396.9px;top:957.0px;" width="13" height="12" viewBox="0 0 68 62"><path d="M12 50 L33 12" stroke="#fbbc04" stroke-width="19" stroke-linecap="round"/><path d="M33 12 L56 51" stroke="#3d87db" stroke-width="20" stroke-linecap="round"/><circle cx="11.5" cy="50" r="11" fill="#34a853"/></svg>
<div class="t" style="left:414.4px;top:956.50px;height:13px;line-height:13px;font-size:9.8px;color:#2e3644;font-weight:400;">Ad Group ID</div>
<div style="left:395.5px;top:971.7499999999999px;width:130.79999999999995px;height:14.3px;background:#bed8fb;"></div>
<svg style="position:absolute;left:396.9px;top:972.8499999999999px;" width="13" height="12" viewBox="0 0 68 62"><path d="M12 50 L33 12" stroke="#fbbc04" stroke-width="19" stroke-linecap="round"/><path d="M33 12 L56 51" stroke="#3d87db" stroke-width="20" stroke-linecap="round"/><circle cx="11.5" cy="50" r="11" fill="#34a853"/></svg>
<div class="t" style="left:414.4px;top:972.35px;height:13px;line-height:13px;font-size:9.8px;color:#2e3644;font-weight:400;">Ad Group Name</div>
<div style="left:395.5px;top:987.5999999999999px;width:130.79999999999995px;height:14.3px;background:#bed8fb;"></div>
<svg style="position:absolute;left:396.9px;top:988.6999999999999px;" width="13" height="12" viewBox="0 0 68 62"><path d="M12 50 L33 12" stroke="#fbbc04" stroke-width="19" stroke-linecap="round"/><path d="M33 12 L56 51" stroke="#3d87db" stroke-width="20" stroke-linecap="round"/><circle cx="11.5" cy="50" r="11" fill="#34a853"/></svg>
<div class="t" style="left:414.4px;top:988.20px;height:13px;line-height:13px;font-size:9.8px;color:#2e3644;font-weight:400;">Keyword</div>
<div style="left:395.5px;top:1003.4499999999999px;width:130.79999999999995px;height:14.3px;background:#bed8fb;"></div>
<svg style="position:absolute;left:396.9px;top:1004.55px;" width="13" height="12" viewBox="0 0 68 62"><path d="M12 50 L33 12" stroke="#fbbc04" stroke-width="19" stroke-linecap="round"/><path d="M33 12 L56 51" stroke="#3d87db" stroke-width="20" stroke-linecap="round"/><circle cx="11.5" cy="50" r="11" fill="#34a853"/></svg>
<div class="t" style="left:414.4px;top:1004.05px;height:13px;line-height:13px;font-size:9.8px;color:#2e3644;font-weight:400;">Asset ID</div>
<div style="left:395.5px;top:1019.2999999999998px;width:130.79999999999995px;height:14.3px;background:#bed8fb;"></div>
<svg style="position:absolute;left:396.9px;top:1020.3999999999999px;" width="13" height="12" viewBox="0 0 68 62"><path d="M12 50 L33 12" stroke="#fbbc04" stroke-width="19" stroke-linecap="round"/><path d="M33 12 L56 51" stroke="#3d87db" stroke-width="20" stroke-linecap="round"/><circle cx="11.5" cy="50" r="11" fill="#34a853"/></svg>
<div class="t" style="left:414.4px;top:1019.90px;height:13px;line-height:13px;font-size:9.8px;color:#2e3644;font-weight:400;">Geo Country</div>
<div style="left:535px;top:924.1999999999999px;width:130.79999999999995px;height:14.3px;background:#bed8fb;"></div>
<svg style="position:absolute;left:536.6px;top:925.3px;" width="13" height="12" viewBox="0 0 68 62"><path d="M12 50 L33 12" stroke="#fbbc04" stroke-width="19" stroke-linecap="round"/><path d="M33 12 L56 51" stroke="#3d87db" stroke-width="20" stroke-linecap="round"/><circle cx="11.5" cy="50" r="11" fill="#34a853"/></svg>
<div class="t" style="left:553.8px;top:924.80px;height:13px;line-height:13px;font-size:9.8px;color:#2e3644;font-weight:400;">Spend</div>
<div style="left:535px;top:940.05px;width:130.79999999999995px;height:14.3px;background:#bed8fb;"></div>
<svg style="position:absolute;left:536.6px;top:941.15px;" width="13" height="12" viewBox="0 0 68 62"><path d="M12 50 L33 12" stroke="#fbbc04" stroke-width="19" stroke-linecap="round"/><path d="M33 12 L56 51" stroke="#3d87db" stroke-width="20" stroke-linecap="round"/><circle cx="11.5" cy="50" r="11" fill="#34a853"/></svg>
<div class="t" style="left:553.8px;top:940.65px;height:13px;line-height:13px;font-size:9.8px;color:#2e3644;font-weight:400;">Conversions</div>
<div style="left:535px;top:955.9px;width:130.79999999999995px;height:14.3px;background:#bed8fb;"></div>
<svg style="position:absolute;left:536.6px;top:957.0px;" width="13" height="12" viewBox="0 0 68 62"><path d="M12 50 L33 12" stroke="#fbbc04" stroke-width="19" stroke-linecap="round"/><path d="M33 12 L56 51" stroke="#3d87db" stroke-width="20" stroke-linecap="round"/><circle cx="11.5" cy="50" r="11" fill="#34a853"/></svg>
<div class="t" style="left:553.8px;top:956.50px;height:13px;line-height:13px;font-size:9.8px;color:#2e3644;font-weight:400;">Conversion Value</div>
<div style="left:535px;top:971.7499999999999px;width:130.79999999999995px;height:14.3px;background:#bed8fb;"></div>
<svg style="position:absolute;left:536.6px;top:972.8499999999999px;" width="13" height="12" viewBox="0 0 68 62"><path d="M12 50 L33 12" stroke="#fbbc04" stroke-width="19" stroke-linecap="round"/><path d="M33 12 L56 51" stroke="#3d87db" stroke-width="20" stroke-linecap="round"/><circle cx="11.5" cy="50" r="11" fill="#34a853"/></svg>
<div class="t" style="left:553.8px;top:972.35px;height:13px;line-height:13px;font-size:9.8px;color:#2e3644;font-weight:400;">Clicks</div>
<div style="left:535px;top:987.5999999999999px;width:130.79999999999995px;height:14.3px;background:#bed8fb;"></div>
<svg style="position:absolute;left:536.6px;top:988.6999999999999px;" width="13" height="12" viewBox="0 0 68 62"><path d="M12 50 L33 12" stroke="#fbbc04" stroke-width="19" stroke-linecap="round"/><path d="M33 12 L56 51" stroke="#3d87db" stroke-width="20" stroke-linecap="round"/><circle cx="11.5" cy="50" r="11" fill="#34a853"/></svg>
<div class="t" style="left:553.8px;top:988.20px;height:13px;line-height:13px;font-size:9.8px;color:#2e3644;font-weight:400;">Impressions</div>
<div style="left:535px;top:1003.4499999999999px;width:130.79999999999995px;height:14.3px;background:#dcdcdc;"></div>
<svg style="position:absolute;left:536.6px;top:1004.55px;" width="13" height="12" viewBox="0 0 68 62"><path d="M12 50 L33 12" stroke="#fbbc04" stroke-width="19" stroke-linecap="round"/><path d="M33 12 L56 51" stroke="#3d87db" stroke-width="20" stroke-linecap="round"/><circle cx="11.5" cy="50" r="11" fill="#34a853"/></svg>
<div class="t" style="left:553.8px;top:1004.05px;height:13px;line-height:13px;font-size:9.8px;color:#8c8c8c;font-weight:400;">All Conversions</div>
<div style="left:535px;top:1019.2999999999998px;width:130.79999999999995px;height:14.3px;background:#dcdcdc;"></div>
<svg style="position:absolute;left:536.6px;top:1020.3999999999999px;" width="13" height="12" viewBox="0 0 68 62"><path d="M12 50 L33 12" stroke="#fbbc04" stroke-width="19" stroke-linecap="round"/><path d="M33 12 L56 51" stroke="#3d87db" stroke-width="20" stroke-linecap="round"/><circle cx="11.5" cy="50" r="11" fill="#34a853"/></svg>
<div class="t" style="left:553.8px;top:1019.90px;height:13px;line-height:13px;font-size:9.8px;color:#8c8c8c;font-weight:400;">Views</div>
<div class="t" style="left:490.5px;top:1037.50px;width:80px;text-align:center;height:11px;line-height:11px;font-size:8.4px;color:#222;font-weight:700;">See More...</div>
<div style="left:778px;top:431.5px;width:284.5px;height:621.5px;background:#fff;border:1px solid #dadada;box-sizing:border-box"></div>
<div class="t" style="left:791px;top:438.80px;height:17px;line-height:17px;font-size:12.78px;color:#333;font-weight:400;">Custom Definitions</div>
<svg style="position:absolute;left:1004px;top:441px;" width="13" height="13" viewBox="0 0 13 13"><path d="M6.5 0.5 L6.5 12.5 M0.5 6.5 L12.5 6.5" stroke="#2cb934" stroke-width="1.6"/></svg>
<div class="t" style="left:1020px;top:438.80px;height:17px;line-height:17px;font-size:12.85px;color:#333;font-weight:400;">New</div>
<div style="left:785px;top:466.5px;width:271px;height:1px;background:#e3e3e3;"></div>
<div class="t" style="left:860.5px;top:472.00px;width:120px;text-align:center;height:16px;line-height:16px;font-size:12.56px;color:#333;font-weight:400;">Dimensions</div>
<div style="left:785px;top:492.59999999999997px;width:271px;height:14.3px;background:#bed8fb;"></div>
<svg style="position:absolute;left:788.25px;top:493.95px;" width="11.5" height="11.5" viewBox="0 0 24 24"><path d="M22.42 10.74 L22.42 13.26 L20.19 14.29 L19.41 16.17 L20.26 18.48 L18.48 20.26 L16.17 19.41 L14.29 20.19 L13.26 22.42 L10.74 22.42 L9.71 20.19 L7.83 19.41 L5.52 20.26 L3.74 18.48 L4.59 16.17 L3.81 14.29 L1.58 13.26 L1.58 10.74 L3.81 9.71 L4.59 7.83 L3.74 5.52 L5.52 3.74 L7.83 4.59 L9.71 3.81 L10.74 1.58 L13.26 1.58 L14.29 3.81 L16.17 4.59 L18.48 3.74 L20.26 5.52 L19.41 7.83 L20.19 9.71 Z" fill="none" stroke="#3cc44a" stroke-width="1.5" stroke-linejoin="round"/><circle cx="12" cy="12" r="4" fill="none" stroke="#3cc44a" stroke-width="1.5"/></svg>
<div class="t" style="left:803.7px;top:493.20px;height:13px;line-height:13px;font-size:10.1px;color:#2e3644;font-weight:400;">Channel Definitions</div>
<div style="left:785px;top:508.37px;width:271px;height:14.3px;background:#bed8fb;"></div>
<svg style="position:absolute;left:788.25px;top:509.72px;" width="11.5" height="11.5" viewBox="0 0 24 24"><path d="M22.42 10.74 L22.42 13.26 L20.19 14.29 L19.41 16.17 L20.26 18.48 L18.48 20.26 L16.17 19.41 L14.29 20.19 L13.26 22.42 L10.74 22.42 L9.71 20.19 L7.83 19.41 L5.52 20.26 L3.74 18.48 L4.59 16.17 L3.81 14.29 L1.58 13.26 L1.58 10.74 L3.81 9.71 L4.59 7.83 L3.74 5.52 L5.52 3.74 L7.83 4.59 L9.71 3.81 L10.74 1.58 L13.26 1.58 L14.29 3.81 L16.17 4.59 L18.48 3.74 L20.26 5.52 L19.41 7.83 L20.19 9.71 Z" fill="none" stroke="#3cc44a" stroke-width="1.5" stroke-linejoin="round"/><circle cx="12" cy="12" r="4" fill="none" stroke="#3cc44a" stroke-width="1.5"/></svg>
<div class="t" style="left:803.7px;top:508.97px;height:13px;line-height:13px;font-size:10.1px;color:#2e3644;font-weight:400;">Page Categorization</div>
<div style="left:785px;top:524.14px;width:271px;height:14.3px;background:#bed8fb;"></div>
<svg style="position:absolute;left:788.25px;top:525.49px;" width="11.5" height="11.5" viewBox="0 0 24 24"><path d="M22.42 10.74 L22.42 13.26 L20.19 14.29 L19.41 16.17 L20.26 18.48 L18.48 20.26 L16.17 19.41 L14.29 20.19 L13.26 22.42 L10.74 22.42 L9.71 20.19 L7.83 19.41 L5.52 20.26 L3.74 18.48 L4.59 16.17 L3.81 14.29 L1.58 13.26 L1.58 10.74 L3.81 9.71 L4.59 7.83 L3.74 5.52 L5.52 3.74 L7.83 4.59 L9.71 3.81 L10.74 1.58 L13.26 1.58 L14.29 3.81 L16.17 4.59 L18.48 3.74 L20.26 5.52 L19.41 7.83 L20.19 9.71 Z" fill="none" stroke="#3cc44a" stroke-width="1.5" stroke-linejoin="round"/><circle cx="12" cy="12" r="4" fill="none" stroke="#3cc44a" stroke-width="1.5"/></svg>
<div class="t" style="left:803.7px;top:524.74px;height:13px;line-height:13px;font-size:10.1px;color:#2e3644;font-weight:400;">Production Traffic</div>
<div style="left:785px;top:539.91px;width:271px;height:14.3px;background:#bed8fb;"></div>
<svg style="position:absolute;left:788.25px;top:541.26px;" width="11.5" height="11.5" viewBox="0 0 24 24"><path d="M22.42 10.74 L22.42 13.26 L20.19 14.29 L19.41 16.17 L20.26 18.48 L18.48 20.26 L16.17 19.41 L14.29 20.19 L13.26 22.42 L10.74 22.42 L9.71 20.19 L7.83 19.41 L5.52 20.26 L3.74 18.48 L4.59 16.17 L3.81 14.29 L1.58 13.26 L1.58 10.74 L3.81 9.71 L4.59 7.83 L3.74 5.52 L5.52 3.74 L7.83 4.59 L9.71 3.81 L10.74 1.58 L13.26 1.58 L14.29 3.81 L16.17 4.59 L18.48 3.74 L20.26 5.52 L19.41 7.83 L20.19 9.71 Z" fill="none" stroke="#3cc44a" stroke-width="1.5" stroke-linejoin="round"/><circle cx="12" cy="12" r="4" fill="none" stroke="#3cc44a" stroke-width="1.5"/></svg>
<div class="t" style="left:803.7px;top:540.51px;height:13px;line-height:13px;font-size:10.1px;color:#2e3644;font-weight:400;">Conversions</div>
<div style="left:785px;top:555.68px;width:271px;height:14.3px;background:#bed8fb;"></div>
<svg style="position:absolute;left:788.25px;top:557.03px;" width="11.5" height="11.5" viewBox="0 0 24 24"><path d="M22.42 10.74 L22.42 13.26 L20.19 14.29 L19.41 16.17 L20.26 18.48 L18.48 20.26 L16.17 19.41 L14.29 20.19 L13.26 22.42 L10.74 22.42 L9.71 20.19 L7.83 19.41 L5.52 20.26 L3.74 18.48 L4.59 16.17 L3.81 14.29 L1.58 13.26 L1.58 10.74 L3.81 9.71 L4.59 7.83 L3.74 5.52 L5.52 3.74 L7.83 4.59 L9.71 3.81 L10.74 1.58 L13.26 1.58 L14.29 3.81 L16.17 4.59 L18.48 3.74 L20.26 5.52 L19.41 7.83 L20.19 9.71 Z" fill="none" stroke="#3cc44a" stroke-width="1.5" stroke-linejoin="round"/><circle cx="12" cy="12" r="4" fill="none" stroke="#3cc44a" stroke-width="1.5"/></svg>
<div class="t" style="left:803.7px;top:556.28px;height:13px;line-height:13px;font-size:10.1px;color:#2e3644;font-weight:400;">Customer Type</div>
<div style="left:785px;top:571.4499999999999px;width:271px;height:14.3px;background:#bed8fb;"></div>
<svg style="position:absolute;left:788.25px;top:572.8px;" width="11.5" height="11.5" viewBox="0 0 24 24"><path d="M22.42 10.74 L22.42 13.26 L20.19 14.29 L19.41 16.17 L20.26 18.48 L18.48 20.26 L16.17 19.41 L14.29 20.19 L13.26 22.42 L10.74 22.42 L9.71 20.19 L7.83 19.41 L5.52 20.26 L3.74 18.48 L4.59 16.17 L3.81 14.29 L1.58 13.26 L1.58 10.74 L3.81 9.71 L4.59 7.83 L3.74 5.52 L5.52 3.74 L7.83 4.59 L9.71 3.81 L10.74 1.58 L13.26 1.58 L14.29 3.81 L16.17 4.59 L18.48 3.74 L20.26 5.52 L19.41 7.83 L20.19 9.71 Z" fill="none" stroke="#3cc44a" stroke-width="1.5" stroke-linejoin="round"/><circle cx="12" cy="12" r="4" fill="none" stroke="#3cc44a" stroke-width="1.5"/></svg>
<div class="t" style="left:803.7px;top:572.05px;height:13px;line-height:13px;font-size:10.1px;color:#2e3644;font-weight:400;">Customer Value Tier</div>
<div style="left:785px;top:587.2199999999999px;width:271px;height:14.3px;background:#bed8fb;"></div>
<svg style="position:absolute;left:788.25px;top:588.5699999999999px;" width="11.5" height="11.5" viewBox="0 0 24 24"><path d="M22.42 10.74 L22.42 13.26 L20.19 14.29 L19.41 16.17 L20.26 18.48 L18.48 20.26 L16.17 19.41 L14.29 20.19 L13.26 22.42 L10.74 22.42 L9.71 20.19 L7.83 19.41 L5.52 20.26 L3.74 18.48 L4.59 16.17 L3.81 14.29 L1.58 13.26 L1.58 10.74 L3.81 9.71 L4.59 7.83 L3.74 5.52 L5.52 3.74 L7.83 4.59 L9.71 3.81 L10.74 1.58 L13.26 1.58 L14.29 3.81 L16.17 4.59 L18.48 3.74 L20.26 5.52 L19.41 7.83 L20.19 9.71 Z" fill="none" stroke="#3cc44a" stroke-width="1.5" stroke-linejoin="round"/><circle cx="12" cy="12" r="4" fill="none" stroke="#3cc44a" stroke-width="1.5"/></svg>
<div class="t" style="left:803.7px;top:587.82px;height:13px;line-height:13px;font-size:10.1px;color:#2e3644;font-weight:400;">Market Definitions</div>
<div class="t" style="left:860.5px;top:643.00px;width:120px;text-align:center;height:16px;line-height:16px;font-size:12.56px;color:#333;font-weight:400;">Metrics</div>
<div style="left:785px;top:663.6px;width:271px;height:14.3px;background:#bed8fb;"></div>
<svg style="position:absolute;left:788.25px;top:664.95px;" width="11.5" height="11.5" viewBox="0 0 24 24"><path d="M22.42 10.74 L22.42 13.26 L20.19 14.29 L19.41 16.17 L20.26 18.48 L18.48 20.26 L16.17 19.41 L14.29 20.19 L13.26 22.42 L10.74 22.42 L9.71 20.19 L7.83 19.41 L5.52 20.26 L3.74 18.48 L4.59 16.17 L3.81 14.29 L1.58 13.26 L1.58 10.74 L3.81 9.71 L4.59 7.83 L3.74 5.52 L5.52 3.74 L7.83 4.59 L9.71 3.81 L10.74 1.58 L13.26 1.58 L14.29 3.81 L16.17 4.59 L18.48 3.74 L20.26 5.52 L19.41 7.83 L20.19 9.71 Z" fill="none" stroke="#3cc44a" stroke-width="1.5" stroke-linejoin="round"/><circle cx="12" cy="12" r="4" fill="none" stroke="#3cc44a" stroke-width="1.5"/></svg>
<div class="t" style="left:803.7px;top:664.20px;height:13px;line-height:13px;font-size:10.1px;color:#2e3644;font-weight:400;">True Return on Ad Spend (ROAS)</div>
<div style="left:785px;top:679.46px;width:271px;height:14.3px;background:#bed8fb;"></div>
<svg style="position:absolute;left:788.25px;top:680.8100000000001px;" width="11.5" height="11.5" viewBox="0 0 24 24"><path d="M22.42 10.74 L22.42 13.26 L20.19 14.29 L19.41 16.17 L20.26 18.48 L18.48 20.26 L16.17 19.41 L14.29 20.19 L13.26 22.42 L10.74 22.42 L9.71 20.19 L7.83 19.41 L5.52 20.26 L3.74 18.48 L4.59 16.17 L3.81 14.29 L1.58 13.26 L1.58 10.74 L3.81 9.71 L4.59 7.83 L3.74 5.52 L5.52 3.74 L7.83 4.59 L9.71 3.81 L10.74 1.58 L13.26 1.58 L14.29 3.81 L16.17 4.59 L18.48 3.74 L20.26 5.52 L19.41 7.83 L20.19 9.71 Z" fill="none" stroke="#3cc44a" stroke-width="1.5" stroke-linejoin="round"/><circle cx="12" cy="12" r="4" fill="none" stroke="#3cc44a" stroke-width="1.5"/></svg>
<div class="t" style="left:803.7px;top:680.06px;height:13px;line-height:13px;font-size:10.1px;color:#2e3644;font-weight:400;">Blended Customer Acquisition Cost</div>
<div style="left:785px;top:695.32px;width:271px;height:14.3px;background:#bed8fb;"></div>
<svg style="position:absolute;left:788.25px;top:696.6700000000001px;" width="11.5" height="11.5" viewBox="0 0 24 24"><path d="M22.42 10.74 L22.42 13.26 L20.19 14.29 L19.41 16.17 L20.26 18.48 L18.48 20.26 L16.17 19.41 L14.29 20.19 L13.26 22.42 L10.74 22.42 L9.71 20.19 L7.83 19.41 L5.52 20.26 L3.74 18.48 L4.59 16.17 L3.81 14.29 L1.58 13.26 L1.58 10.74 L3.81 9.71 L4.59 7.83 L3.74 5.52 L5.52 3.74 L7.83 4.59 L9.71 3.81 L10.74 1.58 L13.26 1.58 L14.29 3.81 L16.17 4.59 L18.48 3.74 L20.26 5.52 L19.41 7.83 L20.19 9.71 Z" fill="none" stroke="#3cc44a" stroke-width="1.5" stroke-linejoin="round"/><circle cx="12" cy="12" r="4" fill="none" stroke="#3cc44a" stroke-width="1.5"/></svg>
<div class="t" style="left:803.7px;top:695.92px;height:13px;line-height:13px;font-size:10.1px;color:#2e3644;font-weight:400;">Net Revenue</div>
<div style="left:785px;top:711.1800000000001px;width:271px;height:14.3px;background:#bed8fb;"></div>
<svg style="position:absolute;left:788.25px;top:712.5300000000001px;" width="11.5" height="11.5" viewBox="0 0 24 24"><path d="M22.42 10.74 L22.42 13.26 L20.19 14.29 L19.41 16.17 L20.26 18.48 L18.48 20.26 L16.17 19.41 L14.29 20.19 L13.26 22.42 L10.74 22.42 L9.71 20.19 L7.83 19.41 L5.52 20.26 L3.74 18.48 L4.59 16.17 L3.81 14.29 L1.58 13.26 L1.58 10.74 L3.81 9.71 L4.59 7.83 L3.74 5.52 L5.52 3.74 L7.83 4.59 L9.71 3.81 L10.74 1.58 L13.26 1.58 L14.29 3.81 L16.17 4.59 L18.48 3.74 L20.26 5.52 L19.41 7.83 L20.19 9.71 Z" fill="none" stroke="#3cc44a" stroke-width="1.5" stroke-linejoin="round"/><circle cx="12" cy="12" r="4" fill="none" stroke="#3cc44a" stroke-width="1.5"/></svg>
<div class="t" style="left:803.7px;top:711.78px;height:13px;line-height:13px;font-size:10.1px;color:#2e3644;font-weight:400;">Wasted Spend</div>
<div style="left:785px;top:727.0400000000001px;width:271px;height:14.3px;background:#bed8fb;"></div>
<svg style="position:absolute;left:788.25px;top:728.3900000000001px;" width="11.5" height="11.5" viewBox="0 0 24 24"><path d="M22.42 10.74 L22.42 13.26 L20.19 14.29 L19.41 16.17 L20.26 18.48 L18.48 20.26 L16.17 19.41 L14.29 20.19 L13.26 22.42 L10.74 22.42 L9.71 20.19 L7.83 19.41 L5.52 20.26 L3.74 18.48 L4.59 16.17 L3.81 14.29 L1.58 13.26 L1.58 10.74 L3.81 9.71 L4.59 7.83 L3.74 5.52 L5.52 3.74 L7.83 4.59 L9.71 3.81 L10.74 1.58 L13.26 1.58 L14.29 3.81 L16.17 4.59 L18.48 3.74 L20.26 5.52 L19.41 7.83 L20.19 9.71 Z" fill="none" stroke="#3cc44a" stroke-width="1.5" stroke-linejoin="round"/><circle cx="12" cy="12" r="4" fill="none" stroke="#3cc44a" stroke-width="1.5"/></svg>
<div class="t" style="left:803.7px;top:727.64px;height:13px;line-height:13px;font-size:10.1px;color:#2e3644;font-weight:400;">Channel Diversification Index</div>
<div style="left:785px;top:742.9px;width:271px;height:14.3px;background:#bed8fb;"></div>
<svg style="position:absolute;left:788.25px;top:744.25px;" width="11.5" height="11.5" viewBox="0 0 24 24"><path d="M22.42 10.74 L22.42 13.26 L20.19 14.29 L19.41 16.17 L20.26 18.48 L18.48 20.26 L16.17 19.41 L14.29 20.19 L13.26 22.42 L10.74 22.42 L9.71 20.19 L7.83 19.41 L5.52 20.26 L3.74 18.48 L4.59 16.17 L3.81 14.29 L1.58 13.26 L1.58 10.74 L3.81 9.71 L4.59 7.83 L3.74 5.52 L5.52 3.74 L7.83 4.59 L9.71 3.81 L10.74 1.58 L13.26 1.58 L14.29 3.81 L16.17 4.59 L18.48 3.74 L20.26 5.52 L19.41 7.83 L20.19 9.71 Z" fill="none" stroke="#3cc44a" stroke-width="1.5" stroke-linejoin="round"/><circle cx="12" cy="12" r="4" fill="none" stroke="#3cc44a" stroke-width="1.5"/></svg>
<div class="t" style="left:803.7px;top:743.50px;height:13px;line-height:13px;font-size:10.1px;color:#2e3644;font-weight:400;">Net Profit per Channel</div>
</div>
<div class="layer" style="clip-path:inset(673px 0px 36px 960px)">
<div style="left:960px;top:673px;width:960px;height:371px;background:#ececec;"></div>
<div style="left:960px;top:673px;width:136px;height:371px;background:#ffffff;"></div>
<div style="left:1096px;top:673px;width:1px;height:371px;background:#d6d6d6;"></div>
<div style="left:1103px;top:673px;width:816px;height:371px;background:#f4f5f7;"></div>
<div style="left:1103px;top:674px;width:816px;height:31.8px;background:#ffffff;border-bottom:1px solid #e8eaee;box-sizing:border-box"></div>
<div style="left:1103px;top:714.5px;width:816px;height:158px;background:#ffffff;border-top:1px solid #e8eaee;border-bottom:1px solid #e8eaee;box-sizing:border-box"></div>
<div style="left:1103px;top:880px;width:816px;height:164px;background:#ffffff;border-top:1px solid #e8eaee;box-sizing:border-box"></div>
<div style="left:960px;top:673px;width:960px;height:1px;background:#a8a8a8;"></div>
<div style="left:960px;top:673px;width:1px;height:371px;background:#7c7c7c;"></div>
<div style="left:1919px;top:673px;width:1px;height:371px;background:#7c7c7c;"></div>
<div style="left:960px;top:1043px;width:960px;height:1px;background:#8a8a8a;"></div>
<svg style="position:absolute;left:977px;top:680.6px;" width="101.44" height="48.45" viewBox="10 9 134 64"><polygon points="10.25,55.5 28.5,37 34.5,37.5 39,36 47.5,28.25 53,28 55.5,23.5 69,10 79.25,20.25 64.5,37.5 66,29.5 63,27 63.5,23 67.5,16 58,24 55,30.5 54.5,34 55.5,35.25 47,44 50.75,33.25 48.5,31 39.25,43.75 36,44.5 23,56.5 29.5,43 23,47.5" fill="#0b9db6"/><polygon points="33.25,55.75 42,46.25 40.5,49.5" fill="#0b9db6"/><polygon points="52.25,56.5 70,36 87.5,16 92.5,21 99,24.5 101,25.25 108.5,33 105,40 115.5,30 144,57.5 136,56 120,48 123.75,54.75 120,55 112.75,59 110,50 114.75,51.5 112,45.25 116.5,42 115.75,39 117,38 115.5,35.75 103.25,47.75 98.5,48.5 86.5,59 80.75,48 80.75,35.25 85.5,39.5 87.5,34.5 85.5,27.5 90,27.75 91.25,26.75 87.25,22.25 76,33 73,37.5 72,41 53.5,56.5" fill="#0b9db6"/><text x="19.6" y="72.5" textLength="115" lengthAdjust="spacingAndGlyphs" font-family="Liberation Sans" font-size="18.6" fill="#2a2a2a" style="font-variant:small-caps">Summit Apparel</text></svg>
<svg style="position:absolute;left:967.0px;top:745.6px;" width="6.0" height="10" viewBox="0 0 6.0 10"><path d="M1 1 L4.0 5.0 L1 9" fill="none" stroke="#777" stroke-width="0.9"/></svg>
<svg style="position:absolute;left:974.0px;top:743.1px;" width="13" height="13" viewBox="0 0 24 24"><path d="M3 18 A9.5 9.5 0 1 1 21 18 Z" fill="none" stroke="#555" stroke-width="1.6"/><path d="M12 16 L17 9" stroke="#555" stroke-width="1.6"/><path d="M7 12 L8 13 M12 8 L12 9.5 M5.5 16 L7 16" stroke="#555" stroke-width="1.2"/></svg>
<div class="t" style="left:990.6px;top:742.60px;height:14px;line-height:14px;font-size:10.4px;color:#3a3a3a;font-weight:400;">Scorecards</div>
<svg style="position:absolute;left:967.0px;top:765.5px;" width="6.0" height="10" viewBox="0 0 6.0 10"><path d="M1 1 L4.0 5.0 L1 9" fill="none" stroke="#777" stroke-width="0.9"/></svg>
<svg style="position:absolute;left:974.0px;top:763.0px;" width="13" height="13" viewBox="0 0 24 24"><path d="M5 7 L18 5 L19 21 L6 21 Z M8 7 Q8 2 11 2 Q14 2 14 6 M18 5 L20 21" fill="none" stroke="#555" stroke-width="1.4"/></svg>
<div class="t" style="left:990.6px;top:762.50px;height:14px;line-height:14px;font-size:10.4px;color:#3a3a3a;font-weight:400;">Shopify</div>
<svg style="position:absolute;left:967.0px;top:785.4px;" width="6.0" height="10" viewBox="0 0 6.0 10"><path d="M1 1 L4.0 5.0 L1 9" fill="none" stroke="#777" stroke-width="0.9"/></svg>
<svg style="position:absolute;left:974.0px;top:782.9px;" width="13" height="13" viewBox="0 0 24 24"><path d="M1 13 L6 13 L9 7 L12 17 L15 10 L17 13 L23 13" fill="none" stroke="#222" stroke-width="1.8"/></svg>
<div class="t" style="left:990.6px;top:782.40px;height:14px;line-height:14px;font-size:10.4px;color:#3a3a3a;font-weight:400;">Comparisons</div>
<svg style="position:absolute;left:967.0px;top:805.3px;" width="6.0" height="10" viewBox="0 0 6.0 10"><path d="M1 1 L4.0 5.0 L1 9" fill="none" stroke="#777" stroke-width="0.9"/></svg>
<svg style="position:absolute;left:974.0px;top:802.8px;" width="13" height="13" viewBox="0 0 24 24"><path d="M2 6 L14 6 L14 17 L2 17 Z M14 9 L19 9 L22 13 L22 17 L14 17" fill="none" stroke="#555" stroke-width="1.4"/><circle cx="6" cy="18" r="2" fill="#fff" stroke="#555" stroke-width="1.4"/><circle cx="18" cy="18" r="2" fill="#fff" stroke="#555" stroke-width="1.4"/></svg>
<div class="t" style="left:990.6px;top:802.30px;height:14px;line-height:14px;font-size:10.4px;color:#3a3a3a;font-weight:400;">Journeys</div>
<svg style="position:absolute;left:967.0px;top:824.8px;" width="6.0" height="10" viewBox="0 0 6.0 10"><path d="M1 1 L4.0 5.0 L1 9" fill="none" stroke="#777" stroke-width="0.9"/></svg>
<svg style="position:absolute;left:974.0px;top:822.3px;" width="13" height="13" viewBox="0 0 24 24"><circle cx="8" cy="8" r="3.5" fill="none" stroke="#555" stroke-width="1.3"/><circle cx="16" cy="8" r="3.5" fill="none" stroke="#555" stroke-width="1.3"/><path d="M2 20 Q2 13 8 13 Q14 13 14 20 Z M12 13.5 Q13.5 13 16 13 Q22 13 22 20 L14 20" fill="none" stroke="#555" stroke-width="1.3"/></svg>
<div class="t" style="left:990.6px;top:821.80px;height:14px;line-height:14px;font-size:10.4px;color:#3a3a3a;font-weight:400;">Audience</div>
<svg style="position:absolute;left:967.0px;top:844.8px;" width="6.0" height="10" viewBox="0 0 6.0 10"><path d="M1 1 L4.0 5.0 L1 9" fill="none" stroke="#777" stroke-width="0.9"/></svg>
<svg style="position:absolute;left:974.0px;top:842.3px;" width="13" height="13" viewBox="0 0 24 24"><path d="M18 5 L6 12 L18 19" fill="none" stroke="#222" stroke-width="2"/><circle cx="18" cy="5" r="3" fill="#222"/><circle cx="6" cy="12" r="3" fill="#222"/><circle cx="18" cy="19" r="3" fill="#222"/></svg>
<div class="t" style="left:990.6px;top:841.80px;height:14px;line-height:14px;font-size:10.4px;color:#3a3a3a;font-weight:400;">Acquisition</div>
<svg style="position:absolute;left:967.0px;top:864.0px;" width="6.0" height="10" viewBox="0 0 6.0 10"><path d="M1 1 L4.0 5.0 L1 9" fill="none" stroke="#777" stroke-width="0.9"/></svg>
<svg style="position:absolute;left:974.0px;top:861.5px;" width="13" height="13" viewBox="0 0 24 24"><path d="M2 7 L7 7 L15 17 L20 17 M2 17 L7 17 L15 7 L20 7" fill="none" stroke="#222" stroke-width="2.4"/><path d="M18 3 L23 7 L18 11 Z M18 13 L23 17 L18 21 Z" fill="#222"/></svg>
<div class="t" style="left:990.6px;top:861.00px;height:14px;line-height:14px;font-size:10.4px;color:#3a3a3a;font-weight:400;">Behavior</div>
<svg style="position:absolute;left:964.0px;top:886.65px;" width="9" height="5.5" viewBox="0 0 9 5.5"><path d="M1 1 L4.5 4.5 L8 1" fill="none" stroke="#7fd386" stroke-width="1"/></svg>
<svg style="position:absolute;left:974.0px;top:881.4px;" width="13" height="13" viewBox="0 0 24 24"><rect x="3" y="8" width="18" height="13" rx="2.5" fill="none" stroke="#2cb934" stroke-width="1.5"/><path d="M8 3 L12 8 L16 3" fill="none" stroke="#2cb934" stroke-width="1.5"/></svg>
<div class="t" style="left:990.6px;top:880.90px;height:14px;line-height:14px;font-size:10.4px;color:#2cb934;font-weight:400;">Ads Performance</div>
<div class="t" style="left:976.8px;top:899.50px;height:14px;line-height:14px;font-size:10.58px;color:#2cb934;font-weight:400;">Google Ads Campaigns</div>
<div class="t" style="left:976.8px;top:919.50px;height:14px;line-height:14px;font-size:10.58px;color:#3a3a3a;font-weight:400;">Google Ads Ad Groups</div>
<div class="t" style="left:976.8px;top:939.00px;height:14px;line-height:14px;font-size:10.58px;color:#3a3a3a;font-weight:400;">Google Ads Keywords</div>
<div class="t" style="left:976.8px;top:958.80px;height:14px;line-height:14px;font-size:10.58px;color:#3a3a3a;font-weight:400;">Google Ads Assets</div>
<svg style="position:absolute;left:967.0px;top:982.4px;" width="6.0" height="10" viewBox="0 0 6.0 10"><path d="M1 1 L4.0 5.0 L1 9" fill="none" stroke="#777" stroke-width="0.9"/></svg>
<svg style="position:absolute;left:974.0px;top:979.9px;" width="13" height="13" viewBox="0 0 24 24"><path d="M2 4 L5 4 L8 16 L19 16 L21 7 L6 7" fill="none" stroke="#222" stroke-width="1.8"/><circle cx="9" cy="20" r="1.8" fill="#222"/><circle cx="18" cy="20" r="1.8" fill="#222"/></svg>
<div class="t" style="left:990.6px;top:979.40px;height:14px;line-height:14px;font-size:10.4px;color:#3a3a3a;font-weight:400;">Ecommerce</div>
<svg style="position:absolute;left:967.0px;top:1002.4px;" width="6.0" height="10" viewBox="0 0 6.0 10"><path d="M1 1 L4.0 5.0 L1 9" fill="none" stroke="#777" stroke-width="0.9"/></svg>
<svg style="position:absolute;left:974.0px;top:999.9px;" width="13" height="13" viewBox="0 0 24 24"><path d="M20 10 A9 9 0 1 1 16 4.5" fill="none" stroke="#222" stroke-width="1.8"/><path d="M7 11 L11 15 L21 4" fill="none" stroke="#222" stroke-width="2"/></svg>
<div class="t" style="left:990.6px;top:999.40px;height:14px;line-height:14px;font-size:10.4px;color:#3a3a3a;font-weight:400;">QA</div>
<svg style="position:absolute;left:967.0px;top:1022.0px;" width="6.0" height="10" viewBox="0 0 6.0 10"><path d="M1 1 L4.0 5.0 L1 9" fill="none" stroke="#777" stroke-width="0.9"/></svg>
<svg style="position:absolute;left:974.0px;top:1019.5px;" width="13" height="13" viewBox="0 0 24 24"><circle cx="12" cy="4.5" r="3" fill="#222"/><path d="M12 7 L12 12 M6 17 L12 12 L18 17" fill="none" stroke="#222" stroke-width="1.6"/><circle cx="5" cy="18" r="3" fill="#222"/><circle cx="19" cy="18" r="3" fill="#222"/><circle cx="12" cy="19" r="2" fill="#222"/></svg>
<div class="t" style="left:990.6px;top:1019.00px;height:14px;line-height:14px;font-size:10.4px;color:#3a3a3a;font-weight:400;">Advanced</div>
<svg style="position:absolute;left:967.0px;top:1041.6px;" width="6.0" height="10" viewBox="0 0 6.0 10"><path d="M1 1 L4.0 5.0 L1 9" fill="none" stroke="#777" stroke-width="0.9"/></svg>
<svg style="position:absolute;left:974.0px;top:1039.1px;" width="13" height="13" viewBox="0 0 24 24"><path d="M22.42 10.74 L22.42 13.26 L20.19 14.29 L19.41 16.17 L20.26 18.48 L18.48 20.26 L16.17 19.41 L14.29 20.19 L13.26 22.42 L10.74 22.42 L9.71 20.19 L7.83 19.41 L5.52 20.26 L3.74 18.48 L4.59 16.17 L3.81 14.29 L1.58 13.26 L1.58 10.74 L3.81 9.71 L4.59 7.83 L3.74 5.52 L5.52 3.74 L7.83 4.59 L9.71 3.81 L10.74 1.58 L13.26 1.58 L14.29 3.81 L16.17 4.59 L18.48 3.74 L20.26 5.52 L19.41 7.83 L20.19 9.71 Z" fill="none" stroke="#555" stroke-width="1.6" stroke-linejoin="round"/><circle cx="12" cy="12" r="4" fill="none" stroke="#555" stroke-width="1.6"/></svg>
<div class="t" style="left:990.6px;top:1038.60px;height:14px;line-height:14px;font-size:10.4px;color:#3a3a3a;font-weight:400;">Configuration</div>
<div class="t" style="left:1109.3px;top:683.50px;height:14px;line-height:14px;font-size:10.76px;color:#2b2b36;font-weight:700;">Google Ads Campaig...</div>
<div style="left:1241.7px;top:674px;width:1px;height:31.8px;background:#e8e8e8;"></div>
<svg style="position:absolute;left:1249.3px;top:681.5px;" width="18" height="18" viewBox="0 0 24 24"><path d="M2 3 L22 3 L14 12.5 L14 21 L10 19 L10 12.5 Z" fill="none" stroke="#222" stroke-width="2" stroke-linejoin="round"/></svg>
<svg style="position:absolute;left:1273.5px;top:679.0px;" width="23" height="23" viewBox="0 0 24 24"><circle cx="12" cy="12" r="12" fill="#0b2a57"/><path d="M12 6.5 L12 17.5 M6.5 12 L17.5 12" stroke="#fff" stroke-width="2.2"/></svg>
<div style="left:1659.7px;top:674px;width:1px;height:31.8px;background:#e8e8e8;"></div>
<div style="left:1750px;top:674px;width:1px;height:31.8px;background:#e8e8e8;"></div>
<svg style="position:absolute;left:1756.8px;top:684.5px;" width="12" height="12" viewBox="0 0 24 24"><rect x="3" y="5" width="18" height="17" rx="2.5" fill="none" stroke="#222" stroke-width="2"/><path d="M3 10 L21 10 M8 2 L8 7 M16 2 L16 7" stroke="#222" stroke-width="2"/></svg>
<div class="t" style="left:1771px;top:676.50px;height:13px;line-height:13px;font-size:10.3px;color:#2b2b36;font-weight:700;">2025-09-22 -</div>
<div class="t" style="left:1771px;top:690.50px;height:13px;line-height:13px;font-size:10.3px;color:#2b2b36;font-weight:700;">2025-10-21</div>
<svg style="position:absolute;left:1855.3px;top:683.5px;" width="14" height="14" viewBox="0 0 24 24"><path d="M4.5 10 A8 8 0 0 1 19 7.5 M19.5 14 A8 8 0 0 1 5 16.5" fill="none" stroke="#222" stroke-width="2.2"/><path d="M20.5 3 L20.5 9.5 L14.5 9 Z M3.5 21 L3.5 14.5 L9.5 15 Z" fill="#222"/></svg>
<svg style="position:absolute;left:1892.3px;top:684.0px;" width="13" height="13" viewBox="0 0 24 24"><circle cx="12" cy="4" r="2.4" fill="#0b2a57"/><circle cx="12" cy="12" r="2.4" fill="#0b2a57"/><circle cx="12" cy="20" r="2.4" fill="#0b2a57"/></svg>
<div class="t" style="left:1109.3px;top:720.70px;height:14px;line-height:14px;font-size:10.54px;color:#2b2b36;font-weight:700;">Cost / Roas</div>
<div style="left:1809px;top:718px;width:27px;height:20.5px;border:1.5px solid #4c6a92;border-radius:3px 0 0 3px;box-sizing:border-box"></div>
<div style="left:1835.5px;top:718px;width:26.5px;height:20.5px;border:1px solid #ccd6e2;border-left:none;border-radius:0 3px 3px 0;box-sizing:border-box"></div>
<svg style="position:absolute;left:1817.0px;top:722.7px;" width="11" height="11" viewBox="0 0 24 24"><path d="M12 21 L12 4 M5 11 L12 4 L19 11" fill="none" stroke="#274a7a" stroke-width="2.4"/></svg>
<svg style="position:absolute;left:1843.2px;top:722.7px;" width="11" height="11" viewBox="0 0 24 24"><path d="M12 3 L12 20 M5 13 L12 20 L19 13" fill="none" stroke="#b8c6d8" stroke-width="2.4"/></svg>
<svg style="position:absolute;left:1870.3px;top:722.0px;" width="12" height="12" viewBox="0 0 24 24"><path d="M9 2 L7 22 M17 2 L15 22 M3 8 L22 8 M2 16 L21 16" stroke="#0b2a57" stroke-width="3.2"/></svg>
<svg style="position:absolute;left:1893.0px;top:721.0px;" width="14" height="14" viewBox="0 0 24 24"><path d="M4.5 10 A8 8 0 0 1 19 7.5 M19.5 14 A8 8 0 0 1 5 16.5" fill="none" stroke="#222" stroke-width="2.2"/><path d="M20.5 3 L20.5 9.5 L14.5 9 Z M3.5 21 L3.5 14.5 L9.5 15 Z" fill="#222"/></svg>
<div style="left:1103px;top:741.5px;width:816px;height:1px;background:#e9ebef;"></div>
<svg style="position:absolute;left:0;top:0" width="1920" height="1080"><line x1="1154.5" y1="750.30" x2="1814.494" y2="750.30" stroke="#e6e6e6" stroke-width="1"/><line x1="1154.5" y1="770.47" x2="1814.494" y2="770.47" stroke="#e6e6e6" stroke-width="1"/><line x1="1154.5" y1="790.65" x2="1814.494" y2="790.65" stroke="#e6e6e6" stroke-width="1"/><line x1="1154.5" y1="810.83" x2="1814.494" y2="810.83" stroke="#e6e6e6" stroke-width="1"/><line x1="1154.5" y1="831.00" x2="1814.494" y2="831.00" stroke="#e6e6e6" stroke-width="1"/><line x1="1159.5" y1="750.3" x2="1159.5" y2="831.0" stroke="#e6e6e6"/><line x1="1814.494" y1="750.3" x2="1814.494" y2="831.0" stroke="#e6e6e6"/><line x1="1814.494" y1="831.00" x2="1819.494" y2="831.00" stroke="#e0e0e0"/><line x1="1814.494" y1="807.94" x2="1819.494" y2="807.94" stroke="#e0e0e0"/><line x1="1814.494" y1="784.89" x2="1819.494" y2="784.89" stroke="#e0e0e0"/><line x1="1814.494" y1="761.83" x2="1819.494" y2="761.83" stroke="#e0e0e0"/><polyline points="1159.50,795.30 1182.09,793.20 1204.67,804.10 1227.26,775.70 1249.84,781.20 1272.43,798.50 1295.02,782.60 1317.60,794.60 1340.19,804.90 1362.77,798.50 1385.36,773.40 1407.95,789.00 1430.53,770.90 1453.12,789.70 1475.70,791.80 1498.29,769.50 1520.88,799.60 1543.46,805.60 1566.05,776.90 1588.63,780.80 1611.22,792.90 1633.81,785.10 1656.39,807.40 1678.98,788.60 1701.56,766.30 1724.15,781.20 1746.74,801.70 1769.32,806.00 1791.91,820.80 1814.49,809.50" fill="none" stroke="#f4401f" stroke-width="2.3" stroke-linejoin="round"/><circle cx="1159.50" cy="795.30" r="2.8" fill="#f4401f"/><circle cx="1182.09" cy="793.20" r="2.8" fill="#f4401f"/><circle cx="1204.67" cy="804.10" r="2.8" fill="#f4401f"/><circle cx="1227.26" cy="775.70" r="2.8" fill="#f4401f"/><circle cx="1249.84" cy="781.20" r="2.8" fill="#f4401f"/><circle cx="1272.43" cy="798.50" r="2.8" fill="#f4401f"/><circle cx="1295.02" cy="782.60" r="2.8" fill="#f4401f"/><circle cx="1317.60" cy="794.60" r="2.8" fill="#f4401f"/><circle cx="1340.19" cy="804.90" r="2.8" fill="#f4401f"/><circle cx="1362.77" cy="798.50" r="2.8" fill="#f4401f"/><circle cx="1385.36" cy="773.40" r="2.8" fill="#f4401f"/><circle cx="1407.95" cy="789.00" r="2.8" fill="#f4401f"/><circle cx="1430.53" cy="770.90" r="2.8" fill="#f4401f"/><circle cx="1453.12" cy="789.70" r="2.8" fill="#f4401f"/><circle cx="1475.70" cy="791.80" r="2.8" fill="#f4401f"/><circle cx="1498.29" cy="769.50" r="2.8" fill="#f4401f"/><circle cx="1520.88" cy="799.60" r="2.8" fill="#f4401f"/><circle cx="1543.46" cy="805.60" r="2.8" fill="#f4401f"/><circle cx="1566.05" cy="776.90" r="2.8" fill="#f4401f"/><circle cx="1588.63" cy="780.80" r="2.8" fill="#f4401f"/><circle cx="1611.22" cy="792.90" r="2.8" fill="#f4401f"/><circle cx="1633.81" cy="785.10" r="2.8" fill="#f4401f"/><circle cx="1656.39" cy="807.40" r="2.8" fill="#f4401f"/><circle cx="1678.98" cy="788.60" r="2.8" fill="#f4401f"/><circle cx="1701.56" cy="766.30" r="2.8" fill="#f4401f"/><circle cx="1724.15" cy="781.20" r="2.8" fill="#f4401f"/><circle cx="1746.74" cy="801.70" r="2.8" fill="#f4401f"/><circle cx="1769.32" cy="806.00" r="2.8" fill="#f4401f"/><circle cx="1791.91" cy="820.80" r="2.8" fill="#f4401f"/><circle cx="1814.49" cy="809.50" r="2.8" fill="#f4401f"/><polyline points="1159.50,831.00 1182.09,831.00 1204.67,817.70 1227.26,821.60 1249.84,783.00 1272.43,830.40 1295.02,830.40 1317.60,830.40 1340.19,824.00 1362.77,830.40 1385.36,830.40 1407.95,807.40 1430.53,823.30 1453.12,830.40 1475.70,819.40 1498.29,809.50 1520.88,796.80 1543.46,830.40 1566.05,830.40 1588.63,816.60 1611.22,830.40 1633.81,824.00 1656.39,830.40 1678.98,830.40 1701.56,761.00 1724.15,818.00 1746.74,830.40 1769.32,775.10 1791.91,830.40 1814.49,830.40" fill="none" stroke="#26b928" stroke-width="2.3" stroke-linejoin="round"/><circle cx="1159.50" cy="831.00" r="2.8" fill="#26b928"/><circle cx="1182.09" cy="831.00" r="2.8" fill="#26b928"/><circle cx="1204.67" cy="817.70" r="2.8" fill="#26b928"/><circle cx="1227.26" cy="821.60" r="2.8" fill="#26b928"/><circle cx="1249.84" cy="783.00" r="2.8" fill="#26b928"/><circle cx="1272.43" cy="830.40" r="2.8" fill="#26b928"/><circle cx="1295.02" cy="830.40" r="2.8" fill="#26b928"/><circle cx="1317.60" cy="830.40" r="2.8" fill="#26b928"/><circle cx="1340.19" cy="824.00" r="2.8" fill="#26b928"/><circle cx="1362.77" cy="830.40" r="2.8" fill="#26b928"/><circle cx="1385.36" cy="830.40" r="2.8" fill="#26b928"/><circle cx="1407.95" cy="807.40" r="2.8" fill="#26b928"/><circle cx="1430.53" cy="823.30" r="2.8" fill="#26b928"/><circle cx="1453.12" cy="830.40" r="2.8" fill="#26b928"/><circle cx="1475.70" cy="819.40" r="2.8" fill="#26b928"/><circle cx="1498.29" cy="809.50" r="2.8" fill="#26b928"/><circle cx="1520.88" cy="796.80" r="2.8" fill="#26b928"/><circle cx="1543.46" cy="830.40" r="2.8" fill="#26b928"/><circle cx="1566.05" cy="830.40" r="2.8" fill="#26b928"/><circle cx="1588.63" cy="816.60" r="2.8" fill="#26b928"/><circle cx="1611.22" cy="830.40" r="2.8" fill="#26b928"/><circle cx="1633.81" cy="824.00" r="2.8" fill="#26b928"/><circle cx="1656.39" cy="830.40" r="2.8" fill="#26b928"/><circle cx="1678.98" cy="830.40" r="2.8" fill="#26b928"/><circle cx="1701.56" cy="761.00" r="2.8" fill="#26b928"/><circle cx="1724.15" cy="818.00" r="2.8" fill="#26b928"/><circle cx="1746.74" cy="830.40" r="2.8" fill="#26b928"/><circle cx="1769.32" cy="775.10" r="2.8" fill="#26b928"/><circle cx="1791.91" cy="830.40" r="2.8" fill="#26b928"/><circle cx="1814.49" cy="830.40" r="2.8" fill="#26b928"/></svg>
<div class="t" style="left:1100.5px;top:743.80px;width:50px;text-align:right;height:13px;line-height:13px;font-size:10px;color:#666;font-weight:400;">$200</div>
<div class="t" style="left:1100.5px;top:763.97px;width:50px;text-align:right;height:13px;line-height:13px;font-size:10px;color:#666;font-weight:400;">$150</div>
<div class="t" style="left:1100.5px;top:784.15px;width:50px;text-align:right;height:13px;line-height:13px;font-size:10px;color:#666;font-weight:400;">$100</div>
<div class="t" style="left:1100.5px;top:804.33px;width:50px;text-align:right;height:13px;line-height:13px;font-size:10px;color:#666;font-weight:400;">$50</div>
<div class="t" style="left:1100.5px;top:824.50px;width:50px;text-align:right;height:13px;line-height:13px;font-size:10px;color:#666;font-weight:400;">$0</div>
<div class="t" style="left:1822px;top:824.50px;height:13px;line-height:13px;font-size:10px;color:#666;font-weight:400;">0</div>
<div class="t" style="left:1822px;top:801.44px;height:13px;line-height:13px;font-size:10px;color:#666;font-weight:400;">10</div>
<div class="t" style="left:1822px;top:778.39px;height:13px;line-height:13px;font-size:10px;color:#666;font-weight:400;">20</div>
<div class="t" style="left:1822px;top:755.33px;height:13px;line-height:13px;font-size:10px;color:#666;font-weight:400;">30</div>
<div class="t" style="left:1117.5px;top:790.5px;font-size:10px;color:#777;transform:translate(-50%,-50%) rotate(-90deg);line-height:12px">Cost</div>
<div class="t" style="left:1845px;top:790px;font-size:10px;color:#777;transform:translate(-50%,-50%) rotate(90deg);line-height:12px">Roas</div>
<div class="t" style="left:1075.50px;top:839.00px;width:80px;text-align:right;font-size:9.6px;line-height:12px;color:#777;transform-origin:100% 0;transform:rotate(-45deg)">Sep 22</div>
<div class="t" style="left:1098.09px;top:839.00px;width:80px;text-align:right;font-size:9.6px;line-height:12px;color:#777;transform-origin:100% 0;transform:rotate(-45deg)">Sep 23</div>
<div class="t" style="left:1120.67px;top:839.00px;width:80px;text-align:right;font-size:9.6px;line-height:12px;color:#777;transform-origin:100% 0;transform:rotate(-45deg)">Sep 24</div>
<div class="t" style="left:1143.26px;top:839.00px;width:80px;text-align:right;font-size:9.6px;line-height:12px;color:#777;transform-origin:100% 0;transform:rotate(-45deg)">Sep 25</div>
<div class="t" style="left:1165.84px;top:839.00px;width:80px;text-align:right;font-size:9.6px;line-height:12px;color:#777;transform-origin:100% 0;transform:rotate(-45deg)">Sep 26</div>
<div class="t" style="left:1188.43px;top:839.00px;width:80px;text-align:right;font-size:9.6px;line-height:12px;color:#777;transform-origin:100% 0;transform:rotate(-45deg)">Sep 27</div>
<div class="t" style="left:1211.02px;top:839.00px;width:80px;text-align:right;font-size:9.6px;line-height:12px;color:#777;transform-origin:100% 0;transform:rotate(-45deg)">Sep 28</div>
<div class="t" style="left:1233.60px;top:839.00px;width:80px;text-align:right;font-size:9.6px;line-height:12px;color:#777;transform-origin:100% 0;transform:rotate(-45deg)">Sep 29</div>
<div class="t" style="left:1256.19px;top:839.00px;width:80px;text-align:right;font-size:9.6px;line-height:12px;color:#777;transform-origin:100% 0;transform:rotate(-45deg)">Sep 30</div>
<div class="t" style="left:1278.77px;top:839.00px;width:80px;text-align:right;font-size:9.6px;line-height:12px;color:#777;transform-origin:100% 0;transform:rotate(-45deg)">Oct 1</div>
<div class="t" style="left:1301.36px;top:839.00px;width:80px;text-align:right;font-size:9.6px;line-height:12px;color:#777;transform-origin:100% 0;transform:rotate(-45deg)">Oct 2</div>
<div class="t" style="left:1323.95px;top:839.00px;width:80px;text-align:right;font-size:9.6px;line-height:12px;color:#777;transform-origin:100% 0;transform:rotate(-45deg)">Oct 3</div>
<div class="t" style="left:1346.53px;top:839.00px;width:80px;text-align:right;font-size:9.6px;line-height:12px;color:#777;transform-origin:100% 0;transform:rotate(-45deg)">Oct 4</div>
<div class="t" style="left:1369.12px;top:839.00px;width:80px;text-align:right;font-size:9.6px;line-height:12px;color:#777;transform-origin:100% 0;transform:rotate(-45deg)">Oct 5</div>
<div class="t" style="left:1391.70px;top:839.00px;width:80px;text-align:right;font-size:9.6px;line-height:12px;color:#777;transform-origin:100% 0;transform:rotate(-45deg)">Oct 6</div>
<div class="t" style="left:1414.29px;top:839.00px;width:80px;text-align:right;font-size:9.6px;line-height:12px;color:#777;transform-origin:100% 0;transform:rotate(-45deg)">Oct 7</div>
<div class="t" style="left:1436.88px;top:839.00px;width:80px;text-align:right;font-size:9.6px;line-height:12px;color:#777;transform-origin:100% 0;transform:rotate(-45deg)">Oct 8</div>
<div class="t" style="left:1459.46px;top:839.00px;width:80px;text-align:right;font-size:9.6px;line-height:12px;color:#777;transform-origin:100% 0;transform:rotate(-45deg)">Oct 9</div>
<div class="t" style="left:1482.05px;top:839.00px;width:80px;text-align:right;font-size:9.6px;line-height:12px;color:#777;transform-origin:100% 0;transform:rotate(-45deg)">Oct 10</div>
<div class="t" style="left:1504.63px;top:839.00px;width:80px;text-align:right;font-size:9.6px;line-height:12px;color:#777;transform-origin:100% 0;transform:rotate(-45deg)">Oct 11</div>
<div class="t" style="left:1527.22px;top:839.00px;width:80px;text-align:right;font-size:9.6px;line-height:12px;color:#777;transform-origin:100% 0;transform:rotate(-45deg)">Oct 12</div>
<div class="t" style="left:1549.81px;top:839.00px;width:80px;text-align:right;font-size:9.6px;line-height:12px;color:#777;transform-origin:100% 0;transform:rotate(-45deg)">Oct 13</div>
<div class="t" style="left:1572.39px;top:839.00px;width:80px;text-align:right;font-size:9.6px;line-height:12px;color:#777;transform-origin:100% 0;transform:rotate(-45deg)">Oct 14</div>
<div class="t" style="left:1594.98px;top:839.00px;width:80px;text-align:right;font-size:9.6px;line-height:12px;color:#777;transform-origin:100% 0;transform:rotate(-45deg)">Oct 15</div>
<div class="t" style="left:1617.56px;top:839.00px;width:80px;text-align:right;font-size:9.6px;line-height:12px;color:#777;transform-origin:100% 0;transform:rotate(-45deg)">Oct 16</div>
<div class="t" style="left:1640.15px;top:839.00px;width:80px;text-align:right;font-size:9.6px;line-height:12px;color:#777;transform-origin:100% 0;transform:rotate(-45deg)">Oct 17</div>
<div class="t" style="left:1662.74px;top:839.00px;width:80px;text-align:right;font-size:9.6px;line-height:12px;color:#777;transform-origin:100% 0;transform:rotate(-45deg)">Oct 18</div>
<div class="t" style="left:1685.32px;top:839.00px;width:80px;text-align:right;font-size:9.6px;line-height:12px;color:#777;transform-origin:100% 0;transform:rotate(-45deg)">Oct 19</div>
<div class="t" style="left:1707.91px;top:839.00px;width:80px;text-align:right;font-size:9.6px;line-height:12px;color:#777;transform-origin:100% 0;transform:rotate(-45deg)">Oct 20</div>
<div class="t" style="left:1730.49px;top:839.00px;width:80px;text-align:right;font-size:9.6px;line-height:12px;color:#777;transform-origin:100% 0;transform:rotate(-45deg)">Oct 21</div>
<div style="left:1860.5px;top:797px;width:18px;height:2.6px;background:#f4401f;"></div>
<div class="t" style="left:1882.8px;top:791.70px;height:13px;line-height:13px;font-size:10px;color:#666;font-weight:400;">Cost</div>
<div style="left:1860.5px;top:814.3px;width:18px;height:2.6px;background:#26b928;"></div>
<div class="t" style="left:1882.8px;top:809.00px;height:13px;line-height:13px;font-size:10px;color:#666;font-weight:400;">Roas</div>
<div style="left:1506.7px;top:753.5px;width:68.7px;height:33.7px;background:rgba(40,40,40,0.88);border-radius:3px"></div>
<svg style="position:absolute;left:1500.5px;top:764px;" width="7" height="10" viewBox="0 0 7 10"><path d="M7 0 L0 5 L7 10 Z" fill="rgba(40,40,40,0.88)"/></svg>
<div style="left:1511px;top:759px;width:9px;height:9px;background:#f4401f;border:1px solid #fff;box-sizing:border-box"></div>
<div class="t" style="left:1522.5px;top:757.80px;height:11px;line-height:11px;font-size:8.5px;color:#fff;font-weight:400;">Cost: $96.79</div>
<div style="left:1511px;top:772.5px;width:9px;height:9px;background:#26b928;border:1px solid #fff;box-sizing:border-box"></div>
<div class="t" style="left:1522.5px;top:771.50px;height:11px;line-height:11px;font-size:8.5px;color:#fff;font-weight:400;">ROAS: 9.4</div>
<div class="t" style="left:1109.4px;top:885.90px;height:14px;line-height:14px;font-size:10.73px;color:#2b2b36;font-weight:700;">Campaign Performance</div>
<div style="left:1246.4px;top:880.5px;width:292px;height:25px;border:1px solid #e2e5ea;border-top:none;box-sizing:border-box;background:#fff"></div>
<div class="t" style="left:1259.9px;top:886.50px;height:13px;line-height:13px;font-size:9.72px;color:#c0c6d0;font-weight:400;">Search for Dimension Value</div>
<svg style="position:absolute;left:1845.1px;top:886.5px;" width="13" height="13" viewBox="0 0 24 24"><rect x="2" y="3" width="20" height="18" rx="3" fill="#0b2a57"/><rect x="8" y="6" width="11.5" height="2.6" fill="#fff"/><rect x="8" y="10.7" width="11.5" height="2.6" fill="#fff"/><rect x="8" y="15.4" width="11.5" height="2.6" fill="#fff"/><rect x="4.5" y="6" width="2" height="2.6" fill="#fff"/><rect x="4.5" y="10.7" width="2" height="2.6" fill="#fff"/><rect x="4.5" y="15.4" width="2" height="2.6" fill="#fff"/></svg>
<svg style="position:absolute;left:1870.2px;top:887.0px;" width="12" height="12" viewBox="0 0 24 24"><path d="M9 2 L7 22 M17 2 L15 22 M3 8 L22 8 M2 16 L21 16" stroke="#0b2a57" stroke-width="3.2"/></svg>
<svg style="position:absolute;left:1895.3px;top:886.5px;" width="13" height="13" viewBox="0 0 24 24"><path d="M3 1 L12 1 L17 6 L17 22 L3 22 Z" fill="#0b2a57"/><path d="M12 1 L12 6 L17 6" fill="#fff" stroke="#fff" stroke-width="0.8"/><rect x="8" y="13" width="16" height="10" fill="#fff"/><text x="9" y="21.5" font-size="8.5" font-family="Liberation Sans" font-weight="700" fill="#0b2a57">CSV</text></svg>
<div style="left:1103px;top:907.8px;width:816px;height:30px;background:#f0f1f4;"></div>
<div class="t" style="left:1109.4px;top:911.40px;height:12px;line-height:12px;font-size:9.3px;color:#2b2b36;font-weight:700;">Campaign Name</div>
<svg style="position:absolute;left:1221.7px;top:909.3px;" width="10" height="21" viewBox="0 0 10 21"><path d="M1.5 6 L5 2 L8.5 6 Z" fill="#b8bcc6"/><path d="M1.5 15 L5 19 L8.5 15 Z" fill="#b8bcc6"/></svg>
<div style="left:1236.5px;top:907.8px;width:1px;height:30px;background:#e3e5ea;"></div>
<div class="t" style="left:1243px;top:911.40px;height:12px;line-height:12px;font-size:9.3px;color:#2b2b36;font-weight:700;">Campaign Statu</div>
<svg style="position:absolute;left:1299.8px;top:909.3px;" width="10" height="21" viewBox="0 0 10 21"><path d="M1.5 6 L5 2 L8.5 6 Z" fill="#b8bcc6"/><path d="M1.5 15 L5 19 L8.5 15 Z" fill="#b8bcc6"/></svg>
<div style="left:1314.6px;top:907.8px;width:1px;height:30px;background:#e3e5ea;"></div>
<div class="t" style="left:1321.9px;top:911.40px;height:12px;line-height:12px;font-size:9.3px;color:#2b2b36;font-weight:700;">Impressions</div>
<svg style="position:absolute;left:1383.6000000000001px;top:909.3px;" width="10" height="21" viewBox="0 0 10 21"><path d="M1.5 6 L5 2 L8.5 6 Z" fill="#b8bcc6"/><path d="M1.5 15 L5 19 L8.5 15 Z" fill="#b8bcc6"/></svg>
<div style="left:1315.6px;top:931.7px;width:82.80000000000018px;height:2.8px;background:#ec20cf;"></div>
<div style="left:1398.4px;top:907.8px;width:1px;height:30px;background:#e3e5ea;"></div>
<div class="t" style="left:1405.2px;top:911.40px;height:12px;line-height:12px;font-size:9.3px;color:#2b2b36;font-weight:700;">Clicks</div>
<svg style="position:absolute;left:1440.4px;top:909.3px;" width="10" height="21" viewBox="0 0 10 21"><path d="M1.5 6 L5 2 L8.5 6 Z" fill="#b8bcc6"/><path d="M1.5 15 L5 19 L8.5 15 Z" fill="#b8bcc6"/></svg>
<div style="left:1399.4px;top:931.7px;width:55.799999999999955px;height:2.8px;background:#8e2ee0;"></div>
<div style="left:1455.2px;top:907.8px;width:1px;height:30px;background:#e3e5ea;"></div>
<div class="t" style="left:1462.4px;top:911.40px;height:12px;line-height:12px;font-size:9.3px;color:#2b2b36;font-weight:700;">Ctr</div>
<svg style="position:absolute;left:1501.6000000000001px;top:909.3px;" width="10" height="21" viewBox="0 0 10 21"><path d="M1.5 6 L5 2 L8.5 6 Z" fill="#b8bcc6"/><path d="M1.5 15 L5 19 L8.5 15 Z" fill="#b8bcc6"/></svg>
<div style="left:1456.2px;top:931.7px;width:60.200000000000045px;height:2.8px;background:#3aa8f0;"></div>
<div style="left:1516.4px;top:907.8px;width:1px;height:30px;background:#e3e5ea;"></div>
<div class="t" style="left:1523.1px;top:911.40px;height:12px;line-height:12px;font-size:9.3px;color:#2b2b36;font-weight:700;">Cost</div>
<svg style="position:absolute;left:1577.1000000000001px;top:909.3px;" width="10" height="21" viewBox="0 0 10 21"><path d="M1.5 6 L5 2 L8.5 6 Z" fill="#b8bcc6"/><path d="M1.5 15 L5 19 L8.5 15 Z" fill="#0b2a57"/></svg>
<div style="left:1517.4px;top:931.7px;width:74.5px;height:2.8px;background:#f04a23;"></div>
<div style="left:1591.9px;top:907.8px;width:1px;height:30px;background:#e3e5ea;"></div>
<div class="t" style="left:1599.7px;top:911.40px;height:12px;line-height:12px;font-size:9.3px;color:#2b2b36;font-weight:700;">Conversions</div>
<svg style="position:absolute;left:1661.7px;top:909.3px;" width="10" height="21" viewBox="0 0 10 21"><path d="M1.5 6 L5 2 L8.5 6 Z" fill="#b8bcc6"/><path d="M1.5 15 L5 19 L8.5 15 Z" fill="#b8bcc6"/></svg>
<div style="left:1592.9px;top:931.7px;width:83.59999999999991px;height:2.8px;background:#0b2a57;"></div>
<div style="left:1676.5px;top:907.8px;width:1px;height:30px;background:#e3e5ea;"></div>
<div class="t" style="left:1683.5px;top:911.40px;height:12px;line-height:12px;font-size:9.3px;color:#2b2b36;font-weight:700;">Conversion Rate</div>
<svg style="position:absolute;left:1763.2px;top:909.3px;" width="10" height="21" viewBox="0 0 10 21"><path d="M1.5 6 L5 2 L8.5 6 Z" fill="#b8bcc6"/><path d="M1.5 15 L5 19 L8.5 15 Z" fill="#b8bcc6"/></svg>
<div style="left:1677.5px;top:931.7px;width:100.5px;height:2.8px;background:#28b832;"></div>
<div style="left:1778px;top:907.8px;width:1px;height:30px;background:#e3e5ea;"></div>
<div class="t" style="left:1785.4px;top:911.40px;height:12px;line-height:12px;font-size:9.3px;color:#2b2b36;font-weight:700;">Revenue</div>
<svg style="position:absolute;left:1840.1000000000001px;top:909.3px;" width="10" height="21" viewBox="0 0 10 21"><path d="M1.5 6 L5 2 L8.5 6 Z" fill="#b8bcc6"/><path d="M1.5 15 L5 19 L8.5 15 Z" fill="#b8bcc6"/></svg>
<div style="left:1779px;top:931.7px;width:75.90000000000009px;height:2.8px;background:#f7b500;"></div>
<div style="left:1854.9px;top:907.8px;width:1px;height:30px;background:#e3e5ea;"></div>
<div class="t" style="left:1861.9px;top:911.40px;height:12px;line-height:12px;font-size:9.3px;color:#2b2b36;font-weight:700;">Roas</div>
<svg style="position:absolute;left:1898.2px;top:909.3px;" width="10" height="21" viewBox="0 0 10 21"><path d="M1.5 6 L5 2 L8.5 6 Z" fill="#b8bcc6"/><path d="M1.5 15 L5 19 L8.5 15 Z" fill="#b8bcc6"/></svg>
<div style="left:1855.9px;top:931.7px;width:57.09999999999991px;height:2.8px;background:#28b832;"></div>
<div style="left:1103px;top:938.2px;width:810px;height:21.4px;background:#e6e6e6;"></div>
<div style="left:1103px;top:958.6px;width:810px;height:1px;background:#eceef1;"></div>
<div style="left:1236.5px;top:938.2px;width:1px;height:21.4px;background:#eef0f3;"></div>
<div style="left:1314.6px;top:938.2px;width:1px;height:21.4px;background:#eef0f3;"></div>
<div style="left:1398.4px;top:938.2px;width:1px;height:21.4px;background:#eef0f3;"></div>
<div style="left:1455.2px;top:938.2px;width:1px;height:21.4px;background:#eef0f3;"></div>
<div style="left:1516.4px;top:938.2px;width:1px;height:21.4px;background:#eef0f3;"></div>
<div style="left:1591.9px;top:938.2px;width:1px;height:21.4px;background:#eef0f3;"></div>
<div style="left:1676.5px;top:938.2px;width:1px;height:21.4px;background:#eef0f3;"></div>
<div style="left:1778px;top:938.2px;width:1px;height:21.4px;background:#eef0f3;"></div>
<div style="left:1854.9px;top:938.2px;width:1px;height:21.4px;background:#eef0f3;"></div>
<div style="left:1456.2px;top:938.2px;width:60.2px;height:20.4px;background:#d9e6d8;"></div>
<div style="left:1677.5px;top:938.2px;width:100.5px;height:20.4px;background:#dfe3de;"></div>
<div style="left:1855.9px;top:938.2px;width:57.1px;height:20.4px;background:#e2e2e0;"></div>
<div style="left:1315.6px;top:941.2px;width:4.4px;height:15px;background:#d9a8d9;"></div>
<div style="left:1399.4px;top:941.2px;width:25.7px;height:15px;background:#bba6d6;"></div>
<div style="left:1517.4px;top:941.2px;width:47px;height:15px;background:#d6aeb2;"></div>
<div style="left:1592.9px;top:941.2px;width:45.6px;height:15px;background:#a8b0c0;"></div>
<div style="left:1779px;top:941.2px;width:31.2px;height:15px;background:#d6ccaa;"></div>
<div class="t" style="left:1109.4px;top:941.70px;height:12px;line-height:12px;font-size:9.5px;color:#333;font-weight:400;">MM // Branded Search '22</div>
<div class="t" style="left:1241.7px;top:941.70px;height:12px;line-height:12px;font-size:9.4px;color:#333;font-weight:400;">ENABLED</div>
<div class="t" style="left:1311.4px;top:941.20px;width:80px;text-align:right;height:13px;line-height:13px;font-size:9.9px;color:#333;font-weight:400;">1,852</div>
<div class="t" style="left:1368.7px;top:941.20px;width:80px;text-align:right;height:13px;line-height:13px;font-size:9.9px;color:#333;font-weight:400;">483</div>
<div class="t" style="left:1429px;top:941.20px;width:80px;text-align:right;height:13px;line-height:13px;font-size:9.9px;color:#333;font-weight:400;">0.26%</div>
<div class="t" style="left:1505.6px;top:941.20px;width:80px;text-align:right;height:13px;line-height:13px;font-size:9.9px;color:#333;font-weight:400;">$1,860.38</div>
<div class="t" style="left:1590px;top:941.20px;width:80px;text-align:right;height:13px;line-height:13px;font-size:9.9px;color:#333;font-weight:400;">9.88</div>
<div class="t" style="left:1691.6px;top:941.20px;width:80px;text-align:right;height:13px;line-height:13px;font-size:9.9px;color:#333;font-weight:400;">2.05%</div>
<div class="t" style="left:1768.4px;top:941.20px;width:80px;text-align:right;height:13px;line-height:13px;font-size:9.9px;color:#333;font-weight:400;">$6,874.34</div>
<div class="t" style="left:1826px;top:941.20px;width:80px;text-align:right;height:13px;line-height:13px;font-size:9.9px;color:#333;font-weight:400;">3.70</div>
<div style="left:1103px;top:959.6px;width:810px;height:21.4px;background:#fafafa;"></div>
<div style="left:1103px;top:980.0px;width:810px;height:1px;background:#eceef1;"></div>
<div style="left:1236.5px;top:959.6px;width:1px;height:21.4px;background:#eef0f3;"></div>
<div style="left:1314.6px;top:959.6px;width:1px;height:21.4px;background:#eef0f3;"></div>
<div style="left:1398.4px;top:959.6px;width:1px;height:21.4px;background:#eef0f3;"></div>
<div style="left:1455.2px;top:959.6px;width:1px;height:21.4px;background:#eef0f3;"></div>
<div style="left:1516.4px;top:959.6px;width:1px;height:21.4px;background:#eef0f3;"></div>
<div style="left:1591.9px;top:959.6px;width:1px;height:21.4px;background:#eef0f3;"></div>
<div style="left:1676.5px;top:959.6px;width:1px;height:21.4px;background:#eef0f3;"></div>
<div style="left:1778px;top:959.6px;width:1px;height:21.4px;background:#eef0f3;"></div>
<div style="left:1854.9px;top:959.6px;width:1px;height:21.4px;background:#eef0f3;"></div>
<div style="left:1456.2px;top:959.6px;width:60.2px;height:20.4px;background:#fbfdfb;"></div>
<div style="left:1677.5px;top:959.6px;width:100.5px;height:20.4px;background:#eff8ed;"></div>
<div style="left:1855.9px;top:959.6px;width:57.1px;height:20.4px;background:#f3faf1;"></div>
<div style="left:1315.6px;top:962.6px;width:37.9px;height:15px;background:#e6bde8;"></div>
<div style="left:1399.4px;top:962.6px;width:14.5px;height:15px;background:#d3c7ec;"></div>
<div style="left:1517.4px;top:962.6px;width:12.4px;height:15px;background:#ecc8cc;"></div>
<div style="left:1592.9px;top:962.6px;width:32.5px;height:15px;background:#bcc5d4;"></div>
<div style="left:1779px;top:962.6px;width:21.7px;height:15px;background:#e8dfc4;"></div>
<div class="t" style="left:1109.4px;top:963.10px;height:12px;line-height:12px;font-size:9.5px;color:#333;font-weight:400;">MM //Performance Max 2...</div>
<div class="t" style="left:1241.7px;top:963.10px;height:12px;line-height:12px;font-size:9.4px;color:#333;font-weight:400;">ENABLED</div>
<div class="t" style="left:1311.4px;top:962.60px;width:80px;text-align:right;height:13px;line-height:13px;font-size:9.9px;color:#333;font-weight:400;">14,788</div>
<div class="t" style="left:1368.7px;top:962.60px;width:80px;text-align:right;height:13px;line-height:13px;font-size:9.9px;color:#333;font-weight:400;">284</div>
<div class="t" style="left:1429px;top:962.60px;width:80px;text-align:right;height:13px;line-height:13px;font-size:9.9px;color:#333;font-weight:400;">0.02%</div>
<div class="t" style="left:1505.6px;top:962.60px;width:80px;text-align:right;height:13px;line-height:13px;font-size:9.9px;color:#333;font-weight:400;">$505.42</div>
<div class="t" style="left:1590px;top:962.60px;width:80px;text-align:right;height:13px;line-height:13px;font-size:9.9px;color:#333;font-weight:400;">7</div>
<div class="t" style="left:1691.6px;top:962.60px;width:80px;text-align:right;height:13px;line-height:13px;font-size:9.9px;color:#333;font-weight:400;">2.47%</div>
<div class="t" style="left:1768.4px;top:962.60px;width:80px;text-align:right;height:13px;line-height:13px;font-size:9.9px;color:#333;font-weight:400;">$4,721.28</div>
<div class="t" style="left:1826px;top:962.60px;width:80px;text-align:right;height:13px;line-height:13px;font-size:9.9px;color:#333;font-weight:400;">9.34</div>
<div style="left:1103px;top:981.0px;width:810px;height:21.4px;background:#ffffff;"></div>
<div style="left:1103px;top:1001.4px;width:810px;height:1px;background:#eceef1;"></div>
<div style="left:1236.5px;top:981.0px;width:1px;height:21.4px;background:#eef0f3;"></div>
<div style="left:1314.6px;top:981.0px;width:1px;height:21.4px;background:#eef0f3;"></div>
<div style="left:1398.4px;top:981.0px;width:1px;height:21.4px;background:#eef0f3;"></div>
<div style="left:1455.2px;top:981.0px;width:1px;height:21.4px;background:#eef0f3;"></div>
<div style="left:1516.4px;top:981.0px;width:1px;height:21.4px;background:#eef0f3;"></div>
<div style="left:1591.9px;top:981.0px;width:1px;height:21.4px;background:#eef0f3;"></div>
<div style="left:1676.5px;top:981.0px;width:1px;height:21.4px;background:#eef0f3;"></div>
<div style="left:1778px;top:981.0px;width:1px;height:21.4px;background:#eef0f3;"></div>
<div style="left:1854.9px;top:981.0px;width:1px;height:21.4px;background:#eef0f3;"></div>
<div style="left:1456.2px;top:981.0px;width:60.2px;height:20.4px;background:#fbfdfb;"></div>
<div style="left:1677.5px;top:981.0px;width:100.5px;height:20.4px;background:#fdf4f2;"></div>
<div style="left:1855.9px;top:981.0px;width:57.1px;height:20.4px;background:#f1f9ef;"></div>
<div style="left:1315.6px;top:984.0px;width:29.5px;height:15px;background:#e6bde8;"></div>
<div style="left:1399.4px;top:984.0px;width:13.8px;height:15px;background:#d3c7ec;"></div>
<div style="left:1517.4px;top:984.0px;width:10.6px;height:15px;background:#ecc8cc;"></div>
<div style="left:1592.9px;top:984.0px;width:4.9px;height:15px;background:#bcc5d4;"></div>
<div style="left:1779px;top:984.0px;width:21.7px;height:15px;background:#e8dfc4;"></div>
<div class="t" style="left:1109.4px;top:984.50px;height:12px;line-height:12px;font-size:9.5px;color:#333;font-weight:400;">Performance Max - Midni...</div>
<div class="t" style="left:1241.7px;top:984.50px;height:12px;line-height:12px;font-size:9.4px;color:#333;font-weight:400;">ENABLED</div>
<div class="t" style="left:1311.4px;top:984.00px;width:80px;text-align:right;height:13px;line-height:13px;font-size:9.9px;color:#333;font-weight:400;">11,841</div>
<div class="t" style="left:1368.7px;top:984.00px;width:80px;text-align:right;height:13px;line-height:13px;font-size:9.9px;color:#333;font-weight:400;">260</div>
<div class="t" style="left:1429px;top:984.00px;width:80px;text-align:right;height:13px;line-height:13px;font-size:9.9px;color:#333;font-weight:400;">0.02%</div>
<div class="t" style="left:1505.6px;top:984.00px;width:80px;text-align:right;height:13px;line-height:13px;font-size:9.9px;color:#333;font-weight:400;">$434.61</div>
<div class="t" style="left:1590px;top:984.00px;width:80px;text-align:right;height:13px;line-height:13px;font-size:9.9px;color:#333;font-weight:400;">1</div>
<div class="t" style="left:1691.6px;top:984.00px;width:80px;text-align:right;height:13px;line-height:13px;font-size:9.9px;color:#333;font-weight:400;">0.38%</div>
<div class="t" style="left:1768.4px;top:984.00px;width:80px;text-align:right;height:13px;line-height:13px;font-size:9.9px;color:#333;font-weight:400;">$4,865.00</div>
<div class="t" style="left:1826px;top:984.00px;width:80px;text-align:right;height:13px;line-height:13px;font-size:9.9px;color:#333;font-weight:400;">11.19</div>
<div style="left:1103px;top:1002.4000000000001px;width:810px;height:21.4px;background:#fafafa;"></div>
<div style="left:1103px;top:1022.8000000000001px;width:810px;height:1px;background:#eceef1;"></div>
<div style="left:1236.5px;top:1002.4000000000001px;width:1px;height:21.4px;background:#eef0f3;"></div>
<div style="left:1314.6px;top:1002.4000000000001px;width:1px;height:21.4px;background:#eef0f3;"></div>
<div style="left:1398.4px;top:1002.4000000000001px;width:1px;height:21.4px;background:#eef0f3;"></div>
<div style="left:1455.2px;top:1002.4000000000001px;width:1px;height:21.4px;background:#eef0f3;"></div>
<div style="left:1516.4px;top:1002.4000000000001px;width:1px;height:21.4px;background:#eef0f3;"></div>
<div style="left:1591.9px;top:1002.4000000000001px;width:1px;height:21.4px;background:#eef0f3;"></div>
<div style="left:1676.5px;top:1002.4000000000001px;width:1px;height:21.4px;background:#eef0f3;"></div>
<div style="left:1778px;top:1002.4000000000001px;width:1px;height:21.4px;background:#eef0f3;"></div>
<div style="left:1854.9px;top:1002.4000000000001px;width:1px;height:21.4px;background:#eef0f3;"></div>
<div style="left:1456.2px;top:1002.4000000000001px;width:60.2px;height:20.4px;background:#fdf3f2;"></div>
<div style="left:1677.5px;top:1002.4000000000001px;width:100.5px;height:20.4px;background:#fdeeee;"></div>
<div style="left:1855.9px;top:1002.4000000000001px;width:57.1px;height:20.4px;background:#fdeeee;"></div>
<div style="left:1315.6px;top:1005.4000000000001px;width:11px;height:15px;background:#e6bde8;"></div>
<div style="left:1399.4px;top:1005.4000000000001px;width:1.5px;height:15px;background:#d3c7ec;"></div>
<div style="left:1517.4px;top:1005.4000000000001px;width:3.8px;height:15px;background:#ecc8cc;"></div>
<div class="t" style="left:1109.4px;top:1005.90px;height:12px;line-height:12px;font-size:9.5px;color:#333;font-weight:400;">Shopping - Midnight Coll...</div>
<div class="t" style="left:1241.7px;top:1005.90px;height:12px;line-height:12px;font-size:9.4px;color:#333;font-weight:400;">PAUSED</div>
<div class="t" style="left:1311.4px;top:1005.40px;width:80px;text-align:right;height:13px;line-height:13px;font-size:9.9px;color:#333;font-weight:400;">4,077</div>
<div class="t" style="left:1368.7px;top:1005.40px;width:80px;text-align:right;height:13px;line-height:13px;font-size:9.9px;color:#333;font-weight:400;">34</div>
<div class="t" style="left:1429px;top:1005.40px;width:80px;text-align:right;height:13px;line-height:13px;font-size:9.9px;color:#333;font-weight:400;">0.01%</div>
<div class="t" style="left:1505.6px;top:1005.40px;width:80px;text-align:right;height:13px;line-height:13px;font-size:9.9px;color:#333;font-weight:400;">$159.11</div>
<div class="t" style="left:1590px;top:1005.40px;width:80px;text-align:right;height:13px;line-height:13px;font-size:9.9px;color:#333;font-weight:400;">0</div>
<div class="t" style="left:1691.6px;top:1005.40px;width:80px;text-align:right;height:13px;line-height:13px;font-size:9.9px;color:#333;font-weight:400;">0%</div>
<div class="t" style="left:1768.4px;top:1005.40px;width:80px;text-align:right;height:13px;line-height:13px;font-size:9.9px;color:#333;font-weight:400;">$0.00</div>
<div class="t" style="left:1826px;top:1005.40px;width:80px;text-align:right;height:13px;line-height:13px;font-size:9.9px;color:#333;font-weight:400;">0.00</div>
<div style="left:1913px;top:938.2px;width:6px;height:84px;background:#cdd1d9;"></div>
<div style="left:1103px;top:1022.3px;width:816px;height:21px;background:#f0f1f4;"></div>
<div style="left:1236.5px;top:1022.3px;width:1px;height:21px;background:#e3e5ea;"></div>
<div style="left:1314.6px;top:1022.3px;width:1px;height:21px;background:#e3e5ea;"></div>
<div style="left:1398.4px;top:1022.3px;width:1px;height:21px;background:#e3e5ea;"></div>
<div style="left:1455.2px;top:1022.3px;width:1px;height:21px;background:#e3e5ea;"></div>
<div style="left:1516.4px;top:1022.3px;width:1px;height:21px;background:#e3e5ea;"></div>
<div style="left:1591.9px;top:1022.3px;width:1px;height:21px;background:#e3e5ea;"></div>
<div style="left:1676.5px;top:1022.3px;width:1px;height:21px;background:#e3e5ea;"></div>
<div style="left:1778px;top:1022.3px;width:1px;height:21px;background:#e3e5ea;"></div>
<div style="left:1854.9px;top:1022.3px;width:1px;height:21px;background:#e3e5ea;"></div>
<div style="left:1235.5px;top:1022.3px;width:1.3px;height:21px;background:#1d3763;"></div>
<div class="t" style="left:1109.4px;top:1026.00px;height:13px;line-height:13px;font-size:9.9px;color:#2b2b36;font-weight:700;">Total</div>
<div class="t" style="left:1311.4px;top:1026.00px;width:80px;text-align:right;height:13px;line-height:13px;font-size:9.9px;color:#2b2b36;font-weight:700;">32,558</div>
<div class="t" style="left:1368.7px;top:1026.00px;width:80px;text-align:right;height:13px;line-height:13px;font-size:9.9px;color:#2b2b36;font-weight:700;">1,061</div>
<div class="t" style="left:1429px;top:1026.00px;width:80px;text-align:right;height:13px;line-height:13px;font-size:9.9px;color:#2b2b36;font-weight:700;">0.03%</div>
<div class="t" style="left:1505.6px;top:1026.00px;width:80px;text-align:right;height:13px;line-height:13px;font-size:9.9px;color:#2b2b36;font-weight:700;">$2,959.52</div>
<div class="t" style="left:1590px;top:1026.00px;width:80px;text-align:right;height:13px;line-height:13px;font-size:9.9px;color:#2b2b36;font-weight:700;">17.9</div>
<div class="t" style="left:1691.6px;top:1026.00px;width:80px;text-align:right;height:13px;line-height:13px;font-size:9.9px;color:#2b2b36;font-weight:700;">1.69%</div>
<div class="t" style="left:1768.4px;top:1026.00px;width:80px;text-align:right;height:13px;line-height:13px;font-size:9.9px;color:#2b2b36;font-weight:700;">$16,460.61</div>
<div class="t" style="left:1832.2px;top:1026.00px;width:80px;text-align:right;height:13px;line-height:13px;font-size:9.9px;color:#2b2b36;font-weight:700;">5.56</div>
</div>
</body></html>
